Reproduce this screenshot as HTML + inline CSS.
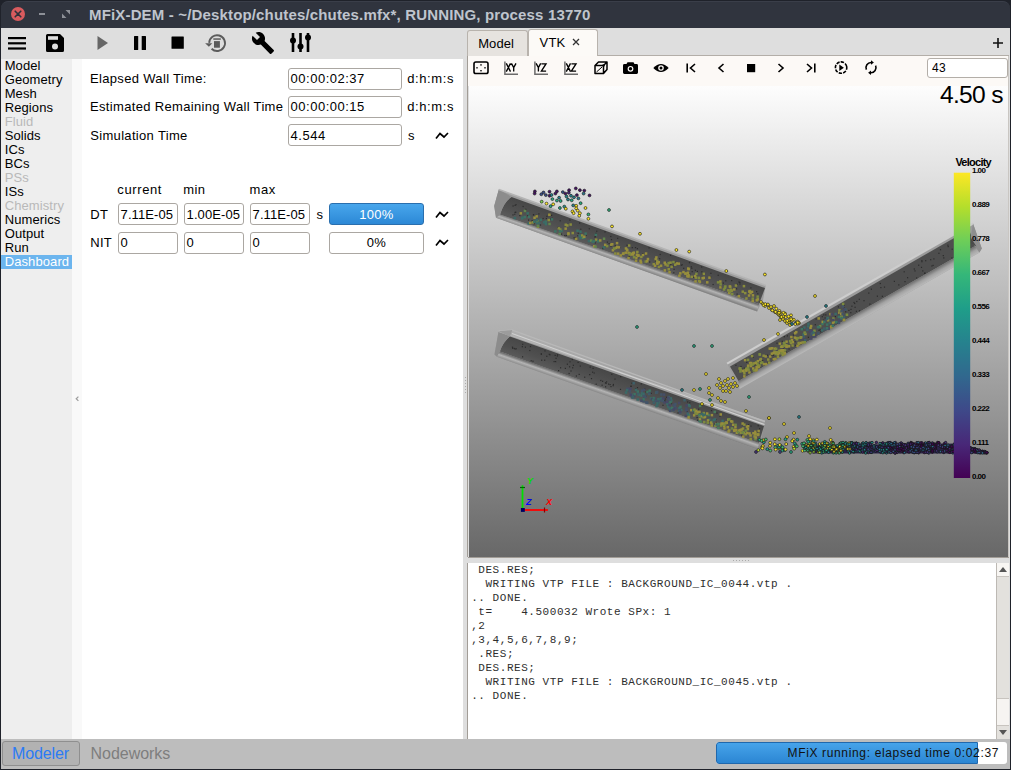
<!DOCTYPE html>
<html><head><meta charset="utf-8"><title>MFiX</title><style>
*{margin:0;padding:0;box-sizing:border-box}
html,body{width:1011px;height:770px;overflow:hidden}
body{background:#1f222a;position:relative;font-family:'Liberation Sans', sans-serif}
.a{position:absolute}
.t{white-space:pre}
</style></head><body>
<div class="a" style="left:1px;top:1px;width:1009px;height:27px;background:#30343e;border-radius:7px 7px 0 0;border-top:1px solid #3a3e49"></div>
<svg class="a" style="left:10px;top:6px;" width="16" height="16" viewBox="0 0 16 16"><circle cx="8" cy="8" r="7" fill="#d95b5e"/><path d="M5.2 5.2L10.8 10.8M10.8 5.2L5.2 10.8" stroke="#2e323b" stroke-width="1.6" stroke-linecap="round"/></svg>
<div class="a" style="left:39px;top:13px;width:6px;height:2px;background:#8d9097"></div>
<svg class="a" style="left:62px;top:10px;" width="8" height="8" viewBox="0 0 8 8"><path d="M3.5 0H8V4.5Z M0 3.5V8H4.5Z" fill="#8d9097"/></svg>
<div class="a t" style="left:89px;top:7.30px;font-size:15px;line-height:15px;color:#bfc4cd;font-weight:bold;font-family:'Liberation Sans', sans-serif;letter-spacing:0.16px">MFiX-DEM - ~/Desktop/chutes/chutes.mfx*, RUNNING, process 13770</div>
<div class="a" style="left:1px;top:28px;width:1009px;height:711px;background:#dedede"></div>
<svg class="a" style="left:8px;top:37px;" width="18" height="13" viewBox="0 0 18 13"><rect x="0" y="0" width="18" height="2.2" fill="#000"/><rect x="0" y="5.2" width="18" height="2.2" fill="#000"/><rect x="0" y="10.4" width="18" height="2.2" fill="#000"/></svg>
<svg class="a" style="left:46px;top:34px;" width="18" height="18" viewBox="0 0 18 18"><path d="M1.5 0H14L18 4V16.5A1.5 1.5 0 0 1 16.5 18H1.5A1.5 1.5 0 0 1 0 16.5V1.5A1.5 1.5 0 0 1 1.5 0Z" fill="#000"/><rect x="2" y="2.2" width="10" height="3.6" fill="#dedede"/><circle cx="9" cy="12.5" r="3" fill="#dedede"/></svg>
<svg class="a" style="left:97px;top:36px;" width="12" height="14" viewBox="0 0 12 14"><path d="M0.5 0L11 7L0.5 14Z" fill="#666"/></svg>
<svg class="a" style="left:134px;top:36px;" width="12" height="14" viewBox="0 0 12 14"><rect x="0" y="0" width="4.2" height="14" rx="0.5" fill="#000"/><rect x="7.7" y="0" width="4.3" height="14" rx="0.5" fill="#000"/></svg>
<svg class="a" style="left:171px;top:36px;" width="13" height="13" viewBox="0 0 13 13"><rect x="0.5" y="0.5" width="12.3" height="12.3" rx="0.5" fill="#000"/></svg>
<svg class="a" style="left:200px;top:30px;" width="32" height="26" viewBox="0 0 32 26"><path d="M9.2 12.9A7.9 7.9 0 1 1 11.6 18.8" fill="none" stroke="#5c5c5c" stroke-width="1.9"/><path d="M5.1 13.2L12.3 13.2 8.9 16.8Z" fill="#5c5c5c"/><rect x="13.3" y="8.3" width="7.5" height="1.5" fill="#5c5c5c"/><rect x="14" y="11.1" width="5.9" height="6.6" fill="#5c5c5c"/></svg>
<svg class="a" style="left:251px;top:31px;" width="24" height="24" viewBox="0 0 24 24"><path d="M22.7 19l-9.1-9.1c.9-2.3.4-5-1.5-6.9-2-2-5-2.4-7.4-1.3L9 6 6 9 1.6 4.7C.4 7.1.9 10.1 2.9 12.1c1.9 1.9 4.6 2.4 6.9 1.5l9.1 9.1c.4.4 1 .4 1.4 0l2.3-2.3c.5-.4.5-1.1.1-1.4z" fill="#000"/></svg>
<svg class="a" style="left:290px;top:33px;" width="22" height="20" viewBox="0 0 22 20"><rect x="1.7" y="0" width="2.6" height="19" fill="#000"/><rect x="9.2" y="0" width="2.6" height="19" fill="#000"/><rect x="16.7" y="0" width="2.6" height="19" fill="#000"/><circle cx="3" cy="7.6" r="3" fill="#000"/><circle cx="10.5" cy="13.4" r="3" fill="#000"/><circle cx="18" cy="4.6" r="3" fill="#000"/></svg>
<div class="a" style="left:1px;top:59px;width:71px;height:680px;background:#eeeeee"></div>
<div class="a" style="left:72px;top:59px;width:10px;height:680px;background:#f9f9f9"></div>
<div class="a" style="left:82px;top:59px;width:381px;height:680px;background:#ffffff"></div>
<svg class="a" style="left:75px;top:396px;" width="5" height="6" viewBox="0 0 5 6"><path d="M3.4 0.6L1.2 2.7 3.4 4.9" fill="none" stroke="#9c9c9c" stroke-width="1.2"/></svg>
<div class="a" style="left:1px;top:255px;width:71px;height:14px;background:#6cb5ee"></div>
<div class="a t" style="left:4.7px;top:58.90px;font-size:13px;line-height:13px;color:#000;font-weight:normal;font-family:'Liberation Sans', sans-serif;letter-spacing:0.1px">Model</div>
<div class="a t" style="left:4.7px;top:72.90px;font-size:13px;line-height:13px;color:#000;font-weight:normal;font-family:'Liberation Sans', sans-serif;letter-spacing:0.1px">Geometry</div>
<div class="a t" style="left:4.7px;top:86.90px;font-size:13px;line-height:13px;color:#000;font-weight:normal;font-family:'Liberation Sans', sans-serif;letter-spacing:0.1px">Mesh</div>
<div class="a t" style="left:4.7px;top:100.90px;font-size:13px;line-height:13px;color:#000;font-weight:normal;font-family:'Liberation Sans', sans-serif;letter-spacing:0.1px">Regions</div>
<div class="a t" style="left:4.7px;top:114.90px;font-size:13px;line-height:13px;color:#b9b9b9;font-weight:normal;font-family:'Liberation Sans', sans-serif;letter-spacing:0.1px">Fluid</div>
<div class="a t" style="left:4.7px;top:128.90px;font-size:13px;line-height:13px;color:#000;font-weight:normal;font-family:'Liberation Sans', sans-serif;letter-spacing:0.1px">Solids</div>
<div class="a t" style="left:4.7px;top:142.90px;font-size:13px;line-height:13px;color:#000;font-weight:normal;font-family:'Liberation Sans', sans-serif;letter-spacing:0.1px">ICs</div>
<div class="a t" style="left:4.7px;top:156.90px;font-size:13px;line-height:13px;color:#000;font-weight:normal;font-family:'Liberation Sans', sans-serif;letter-spacing:0.1px">BCs</div>
<div class="a t" style="left:4.7px;top:170.90px;font-size:13px;line-height:13px;color:#b9b9b9;font-weight:normal;font-family:'Liberation Sans', sans-serif;letter-spacing:0.1px">PSs</div>
<div class="a t" style="left:4.7px;top:184.90px;font-size:13px;line-height:13px;color:#000;font-weight:normal;font-family:'Liberation Sans', sans-serif;letter-spacing:0.1px">ISs</div>
<div class="a t" style="left:4.7px;top:198.90px;font-size:13px;line-height:13px;color:#b9b9b9;font-weight:normal;font-family:'Liberation Sans', sans-serif;letter-spacing:0.1px">Chemistry</div>
<div class="a t" style="left:4.7px;top:212.90px;font-size:13px;line-height:13px;color:#000;font-weight:normal;font-family:'Liberation Sans', sans-serif;letter-spacing:0.1px">Numerics</div>
<div class="a t" style="left:4.7px;top:226.90px;font-size:13px;line-height:13px;color:#000;font-weight:normal;font-family:'Liberation Sans', sans-serif;letter-spacing:0.1px">Output</div>
<div class="a t" style="left:4.7px;top:240.90px;font-size:13px;line-height:13px;color:#000;font-weight:normal;font-family:'Liberation Sans', sans-serif;letter-spacing:0.1px">Run</div>
<div class="a t" style="left:4.7px;top:254.90px;font-size:13px;line-height:13px;color:#ffffff;font-weight:normal;font-family:'Liberation Sans', sans-serif;letter-spacing:0.1px">Dashboard</div>
<div class="a t" style="left:90.0px;top:71.90px;font-size:13px;line-height:13px;color:#000;font-weight:normal;font-family:'Liberation Sans', sans-serif;letter-spacing:0.33px">Elapsed Wall Time:</div>
<div class="a t" style="left:90.0px;top:100.00px;font-size:13px;line-height:13px;color:#000;font-weight:normal;font-family:'Liberation Sans', sans-serif;letter-spacing:0.33px">Estimated Remaining Wall Time</div>
<div class="a t" style="left:90.2px;top:128.90px;font-size:13px;line-height:13px;color:#000;font-weight:normal;font-family:'Liberation Sans', sans-serif;letter-spacing:0.33px">Simulation Time</div>
<div class="a" style="left:288px;top:68px;width:114px;height:22px;background:#fff;border:1px solid #aba7a2;border-radius:3px"></div>
<div class="a t" style="left:290.6px;top:71.90px;font-size:13px;line-height:13px;color:#000;font-weight:normal;font-family:'Liberation Sans', sans-serif;letter-spacing:0.5px">00:00:02:37</div>
<div class="a" style="left:288px;top:96px;width:114px;height:22px;background:#fff;border:1px solid #aba7a2;border-radius:3px"></div>
<div class="a t" style="left:290.6px;top:100.00px;font-size:13px;line-height:13px;color:#000;font-weight:normal;font-family:'Liberation Sans', sans-serif;letter-spacing:0.5px">00:00:00:15</div>
<div class="a" style="left:288px;top:124px;width:114px;height:22px;background:#fff;border:1px solid #aba7a2;border-radius:3px"></div>
<div class="a t" style="left:290.6px;top:128.90px;font-size:13px;line-height:13px;color:#000;font-weight:normal;font-family:'Liberation Sans', sans-serif;letter-spacing:0.5px">4.544</div>
<div class="a t" style="left:407.2px;top:71.90px;font-size:13px;line-height:13px;color:#000;font-weight:normal;font-family:'Liberation Sans', sans-serif;letter-spacing:0.62px">d:h:m:s</div>
<div class="a t" style="left:407.2px;top:100.00px;font-size:13px;line-height:13px;color:#000;font-weight:normal;font-family:'Liberation Sans', sans-serif;letter-spacing:0.62px">d:h:m:s</div>
<div class="a t" style="left:408px;top:128.90px;font-size:13px;line-height:13px;color:#000;font-weight:normal;font-family:'Liberation Sans', sans-serif;">s</div>
<svg class="a" style="left:435px;top:130.5px;" width="14" height="9" viewBox="0 0 14 9"><path d="M1 7.5L5 2.5 9 6 13 2" fill="none" stroke="#000" stroke-width="1.7" stroke-linejoin="miter"/></svg>
<div class="a t" style="left:117.3px;top:183.00px;font-size:13px;line-height:13px;color:#000;font-weight:normal;font-family:'Liberation Sans', sans-serif;letter-spacing:0.62px">current</div>
<div class="a t" style="left:183.3px;top:183.00px;font-size:13px;line-height:13px;color:#000;font-weight:normal;font-family:'Liberation Sans', sans-serif;letter-spacing:0.33px">min</div>
<div class="a t" style="left:249.6px;top:183.00px;font-size:13px;line-height:13px;color:#000;font-weight:normal;font-family:'Liberation Sans', sans-serif;letter-spacing:0.5px">max</div>
<div class="a t" style="left:90.2px;top:208.00px;font-size:13px;line-height:13px;color:#000;font-weight:normal;font-family:'Liberation Sans', sans-serif;letter-spacing:0.33px">DT</div>
<div class="a t" style="left:90.2px;top:236.40px;font-size:13px;line-height:13px;color:#000;font-weight:normal;font-family:'Liberation Sans', sans-serif;letter-spacing:0.33px">NIT</div>
<div class="a" style="left:118px;top:203px;width:60px;height:22px;background:#fff;border:1px solid #aba7a2;border-radius:3px"></div>
<div class="a t" style="left:120.6px;top:208.00px;font-size:13px;line-height:13px;color:#000;font-weight:normal;font-family:'Liberation Sans', sans-serif;letter-spacing:0.08px">7.11E-05</div>
<div class="a" style="left:184px;top:203px;width:60px;height:22px;background:#fff;border:1px solid #aba7a2;border-radius:3px"></div>
<div class="a t" style="left:186.6px;top:208.00px;font-size:13px;line-height:13px;color:#000;font-weight:normal;font-family:'Liberation Sans', sans-serif;letter-spacing:0.08px">1.00E-05</div>
<div class="a" style="left:250px;top:203px;width:60px;height:22px;background:#fff;border:1px solid #aba7a2;border-radius:3px"></div>
<div class="a t" style="left:252.6px;top:208.00px;font-size:13px;line-height:13px;color:#000;font-weight:normal;font-family:'Liberation Sans', sans-serif;letter-spacing:0.08px">7.11E-05</div>
<div class="a" style="left:118px;top:232px;width:60px;height:22px;background:#fff;border:1px solid #aba7a2;border-radius:3px"></div>
<div class="a t" style="left:120.6px;top:236.40px;font-size:13px;line-height:13px;color:#000;font-weight:normal;font-family:'Liberation Sans', sans-serif;letter-spacing:0.5px">0</div>
<div class="a" style="left:184px;top:232px;width:60px;height:22px;background:#fff;border:1px solid #aba7a2;border-radius:3px"></div>
<div class="a t" style="left:186.6px;top:236.40px;font-size:13px;line-height:13px;color:#000;font-weight:normal;font-family:'Liberation Sans', sans-serif;letter-spacing:0.5px">0</div>
<div class="a" style="left:250px;top:232px;width:60px;height:22px;background:#fff;border:1px solid #aba7a2;border-radius:3px"></div>
<div class="a t" style="left:252.6px;top:236.40px;font-size:13px;line-height:13px;color:#000;font-weight:normal;font-family:'Liberation Sans', sans-serif;letter-spacing:0.5px">0</div>
<div class="a t" style="left:316.5px;top:208.00px;font-size:13px;line-height:13px;color:#000;font-weight:normal;font-family:'Liberation Sans', sans-serif;">s</div>
<div class="a" style="left:329px;top:203px;width:95px;height:22px;background:linear-gradient(#48a6ec,#2c88d6);border:1px solid #2a6fae;border-radius:3px"></div>
<div class="a t" style="left:329px;top:208px;width:95px;text-align:center;font-size:13px;line-height:13px;color:#fff;letter-spacing:0.3px">100%</div>
<div class="a" style="left:329px;top:232px;width:95px;height:22px;background:#fff;border:1px solid #aba7a2;border-radius:3px"></div>
<div class="a t" style="left:329px;top:236.4px;width:95px;text-align:center;font-size:13px;line-height:13px;color:#000;letter-spacing:0.3px">0%</div>
<svg class="a" style="left:435px;top:209.5px;" width="14" height="9" viewBox="0 0 14 9"><path d="M1 7.5L5 2.5 9 6 13 2" fill="none" stroke="#000" stroke-width="1.7" stroke-linejoin="miter"/></svg>
<svg class="a" style="left:435px;top:238px;" width="14" height="9" viewBox="0 0 14 9"><path d="M1 7.5L5 2.5 9 6 13 2" fill="none" stroke="#000" stroke-width="1.7" stroke-linejoin="miter"/></svg>
<div class="a" style="left:464.5px;top:377px;width:1.3px;height:1.3px;background:#9a9a9a;border-radius:1px"></div>
<div class="a" style="left:464.5px;top:380px;width:1.3px;height:1.3px;background:#9a9a9a;border-radius:1px"></div>
<div class="a" style="left:464.5px;top:383px;width:1.3px;height:1.3px;background:#9a9a9a;border-radius:1px"></div>
<div class="a" style="left:464.5px;top:386px;width:1.3px;height:1.3px;background:#9a9a9a;border-radius:1px"></div>
<div class="a" style="left:464.5px;top:389px;width:1.3px;height:1.3px;background:#9a9a9a;border-radius:1px"></div>
<div class="a" style="left:464.5px;top:392px;width:1.3px;height:1.3px;background:#9a9a9a;border-radius:1px"></div>
<div class="a" style="left:467px;top:30px;width:61px;height:26px;background:#e6e3df;border:1px solid #b8b3ad;border-bottom:none;border-radius:3px 3px 0 0"></div>
<div class="a t" style="left:478.2px;top:36.70px;font-size:13px;line-height:13px;color:#000;font-weight:normal;font-family:'Liberation Sans', sans-serif;letter-spacing:0.1px">Model</div>
<div class="a" style="left:597px;top:55px;width:412px;height:1px;background:#b3aea8"></div>
<div class="a" style="left:528px;top:29px;width:70px;height:27px;background:#fcfaf7;border:1px solid #b8b3ad;border-bottom:none;border-radius:3px 3px 0 0"></div>
<div class="a t" style="left:539.6px;top:35.80px;font-size:13px;line-height:13px;color:#000;font-weight:normal;font-family:'Liberation Sans', sans-serif;letter-spacing:0.15px">VTK</div>
<svg class="a" style="left:572px;top:38px;" width="8" height="8" viewBox="0 0 8 8"><path d="M1 1L7 7M7 1L1 7" stroke="#333" stroke-width="1.3"/></svg>
<svg class="a" style="left:992px;top:37px;" width="12" height="12" viewBox="0 0 12 12"><path d="M6 1V11M1 6H11" stroke="#111" stroke-width="1.6"/></svg>
<div class="a" style="left:467px;top:56px;width:1px;height:501px;background:#a29d97"></div>
<div class="a" style="left:468px;top:56px;width:541px;height:30px;background:#fcf9f6"></div>
<div class="a" style="left:1008px;top:56px;width:1px;height:501px;background:#c9c6c2"></div>
<svg class="a" style="left:473px;top:61px;" width="16" height="14" viewBox="0 0 16 14"><rect x="1" y="1" width="14" height="11.5" rx="1.8" fill="none" stroke="#000" stroke-width="1.6"/><rect x="7.3" y="3.2" width="1.4" height="1.4" fill="#000"/><rect x="7.3" y="9" width="1.4" height="1.4" fill="#000"/><rect x="3.3" y="6.1" width="1.4" height="1.4" fill="#000"/><rect x="11.3" y="6.1" width="1.4" height="1.4" fill="#000"/></svg>
<svg class="a" style="left:504px;top:61px;" width="15" height="15" viewBox="0 0 15 15"><path d="M0.9 0.5V13.3H14" fill="none" stroke="#6b6b6b" stroke-width="1.5"/><path d="M2.3 2.4L6.5 10.6M6.5 2.4L2.3 10.6M7.4 2.4L9.7 6.6L12 2.4M9.7 6.6V10.6" fill="none" stroke="#000" stroke-width="1.35"/></svg>
<svg class="a" style="left:534px;top:61px;" width="15" height="15" viewBox="0 0 15 15"><path d="M0.9 0.5V13.3H14" fill="none" stroke="#6b6b6b" stroke-width="1.5"/><path d="M2.1 2.4L4.4 6.6L6.7 2.4M4.4 6.6V10.6M7.4 2.9H12L7.4 10.1H12.1" fill="none" stroke="#000" stroke-width="1.35"/></svg>
<svg class="a" style="left:564px;top:61px;" width="15" height="15" viewBox="0 0 15 15"><path d="M0.9 0.5V13.3H14" fill="none" stroke="#6b6b6b" stroke-width="1.5"/><path d="M2.3 2.4L6.5 10.6M6.5 2.4L2.3 10.6M7.4 2.9H12L7.4 10.1H12.1" fill="none" stroke="#000" stroke-width="1.35"/></svg>
<svg class="a" style="left:594px;top:61px;" width="14" height="14" viewBox="0 0 14 14"><path d="M1 4.5L4.5 1H13V8.5L9.5 12.5H1Z M1 4.5H9.5V12.5 M9.5 4.5L13 1" fill="none" stroke="#000" stroke-width="1.5" stroke-linejoin="round"/><path d="M2.5 11L8 6" stroke="#000" stroke-width="1"/><circle cx="9.5" cy="4.5" r="1.2" fill="#000"/></svg>
<svg class="a" style="left:623px;top:61px;" width="15" height="13" viewBox="0 0 15 13"><path d="M4.5 1.2H10.5L11.5 3H13.6A1.4 1.4 0 0 1 15 4.4V11.6A1.4 1.4 0 0 1 13.6 13H1.4A1.4 1.4 0 0 1 0 11.6V4.4A1.4 1.4 0 0 1 1.4 3H3.5Z" fill="#000"/><circle cx="7.5" cy="7.8" r="2.9" fill="#fcf9f6"/><circle cx="7.5" cy="7.8" r="1.7" fill="#000"/></svg>
<svg class="a" style="left:653px;top:63px;" width="16" height="10" viewBox="0 0 16 10"><path d="M0.3 5Q8 -3.2 15.7 5Q8 13.2 0.3 5Z" fill="#000"/><circle cx="8" cy="5" r="2.8" fill="#fcf9f6"/><circle cx="8" cy="5" r="1.5" fill="#000"/></svg>
<svg class="a" style="left:686px;top:63px;" width="10" height="10" viewBox="0 0 10 10"><path d="M1.2 0.5V9.5" stroke="#000" stroke-width="1.6"/><path d="M9 1L4.5 5 9 9" fill="none" stroke="#000" stroke-width="1.6"/></svg>
<svg class="a" style="left:717px;top:63px;" width="8" height="10" viewBox="0 0 8 10"><path d="M6.5 1L2 5 6.5 9" fill="none" stroke="#000" stroke-width="1.6"/></svg>
<svg class="a" style="left:746px;top:63px;" width="10" height="10" viewBox="0 0 10 10"><rect x="1" y="1" width="8.2" height="8.2" fill="#000"/></svg>
<svg class="a" style="left:777px;top:63px;" width="8" height="10" viewBox="0 0 8 10"><path d="M1.5 1L6 5 1.5 9" fill="none" stroke="#000" stroke-width="1.6"/></svg>
<svg class="a" style="left:806px;top:63px;" width="10" height="10" viewBox="0 0 10 10"><path d="M1 1L5.5 5 1 9" fill="none" stroke="#000" stroke-width="1.6"/><path d="M8.8 0.5V9.5" stroke="#000" stroke-width="1.6"/></svg>
<svg class="a" style="left:833px;top:60px;" width="16" height="16" viewBox="0 0 16 16"><circle cx="8.1" cy="7.6" r="5.7" fill="none" stroke="#000" stroke-width="1.6" stroke-dasharray="3.3 1.2" transform="rotate(-12 8.1 7.6)"/><path d="M6.3 4.5L10.9 7.7 6.3 10.9Z" fill="#000"/></svg>
<svg class="a" style="left:864px;top:60px;" width="14" height="16" viewBox="0 0 14 16"><path d="M7.2 2.5A5.1 5.1 0 0 0 2.4 9.6" fill="none" stroke="#000" stroke-width="1.6"/><path d="M6.8 12.7A5.1 5.1 0 0 0 11.6 5.6" fill="none" stroke="#000" stroke-width="1.6"/><path d="M9.9 2.5L7 0.2V4.8Z" fill="#000"/><path d="M4.1 12.7L7 10.4V15Z" fill="#000"/></svg>
<div class="a" style="left:927px;top:58px;width:81px;height:20px;background:#fff;border:1px solid #b3aea8;border-radius:3px"></div>
<div class="a t" style="left:932px;top:61.64px;font-size:12px;line-height:12px;color:#000;font-weight:normal;font-family:'Liberation Sans', sans-serif;letter-spacing:0.4px">43</div>
<svg class="a" style="left:469px;top:86px;" width="539" height="471" viewBox="0 0 539 471"><defs><linearGradient id="bg" x1="0" y1="0" x2="0" y2="1"><stop offset="0" stop-color="#fdfdfd"/><stop offset="1" stop-color="#686868"/></linearGradient><linearGradient id="vir" x1="0" y1="1" x2="0" y2="0"><stop offset="0.0" stop-color="#440154"/><stop offset="0.111" stop-color="#482878"/><stop offset="0.222" stop-color="#3e4989"/><stop offset="0.333" stop-color="#31688e"/><stop offset="0.444" stop-color="#26828e"/><stop offset="0.556" stop-color="#1f9e89"/><stop offset="0.667" stop-color="#35b779"/><stop offset="0.778" stop-color="#6ece58"/><stop offset="0.889" stop-color="#b5de2b"/><stop offset="1.0" stop-color="#fde725"/></linearGradient><linearGradient id="lip1" gradientUnits="userSpaceOnUse" x1="0" y1="0" x2="-3" y2="8"><stop offset="0" stop-color="#6e6e6e"/><stop offset="0.45" stop-color="#b8b8b8"/><stop offset="1" stop-color="#8a8a8a"/></linearGradient></defs><rect x="0" y="0" width="539" height="471" fill="url(#bg)"/><defs><linearGradient id="d1" gradientUnits="userSpaceOnUse" x1="169.2" y1="156.5" x2="163.0" y2="174.0"><stop offset="0" stop-color="#474747"/><stop offset="0.6" stop-color="#505050"/><stop offset="1" stop-color="#5a5a5a"/></linearGradient><linearGradient id="l1" gradientUnits="userSpaceOnUse" x1="169.2" y1="176.3" x2="167.2" y2="182.0"><stop offset="0" stop-color="#6a6a6a"/><stop offset="0.45" stop-color="#b4b4b4"/><stop offset="1" stop-color="#858585"/></linearGradient><linearGradient id="d2" gradientUnits="userSpaceOnUse" x1="168.0" y1="295.3" x2="162.1" y2="311.9"><stop offset="0" stop-color="#474747"/><stop offset="0.6" stop-color="#505050"/><stop offset="1" stop-color="#5a5a5a"/></linearGradient><linearGradient id="l2" gradientUnits="userSpaceOnUse" x1="168.0" y1="313.9" x2="165.9" y2="319.9"><stop offset="0" stop-color="#6a6a6a"/><stop offset="0.45" stop-color="#b4b4b4"/><stop offset="1" stop-color="#858585"/></linearGradient><linearGradient id="d3" gradientUnits="userSpaceOnUse" x1="0" y1="215" x2="11" y2="236"><stop offset="0" stop-color="#474747"/><stop offset="0.6" stop-color="#505050"/><stop offset="1" stop-color="#5a5a5a"/></linearGradient><linearGradient id="l3" gradientUnits="userSpaceOnUse" x1="0" y1="236" x2="2" y2="241"><stop offset="0" stop-color="#6a6a6a"/><stop offset="0.45" stop-color="#b4b4b4"/><stop offset="1" stop-color="#858585"/></linearGradient><linearGradient id="l3b" gradientUnits="userSpaceOnUse" x1="381" y1="231.39999999999998" x2="384.7" y2="237.9"><stop offset="0" stop-color="#707070"/><stop offset="0.5" stop-color="#a3a3a3"/><stop offset="1" stop-color="#b9b9b9"/></linearGradient></defs><path d="M29.8,103.5 L296.7,199.4 L294.0,214.0 L288.1,225.4 L27.0,131.8 L25.2,120.0Z" fill="#9c9c9c"/><path d="M42.5,111.0 L296.0,202.0 L290.0,218.0 L31.0,128.5 Q35.0,116.0 42.5,111.0Z" fill="url(#d1)"/><path d="M31.0,128.5 L290.0,218.0 L288.1,225.4 L27.0,131.8Z" fill="url(#l1)"/><path d="M29.8,103.5 L42.5,111.0 Q35.0,116.0 31.0,128.5 L27.0,131.8 L25.2,120.0Z" fill="#8c8c8c"/><path d="M29.8,103.5 L296.7,199.4" stroke="#b4b4b4" stroke-width="1.6"/><path d="M29.6,245.3 L295.9,335.5 L293.0,350.0 L288.2,363.4 L27.9,270.8 L25.5,268.4Z" fill="#9c9c9c"/><path d="M40.9,250.6 L295.0,340.0 L290.0,357.0 L30.8,265.5 Q34.0,256.0 40.9,250.6Z" fill="url(#d2)"/><path d="M30.8,265.5 L290.0,357.0 L288.2,363.4 L27.9,270.8Z" fill="url(#l2)"/><path d="M29.6,245.3 L40.9,250.6 Q34.0,256.0 30.8,265.5 L27.9,270.8 L25.5,268.4Z" fill="#8c8c8c"/><path d="M29.6,245.3 L295.9,335.5" stroke="#b4b4b4" stroke-width="1.6"/><path d="M29.6,245.3 L43.3,244.1 L295.9,335.5" fill="none" stroke="#b8b8b8" stroke-width="1.4"/><path d="M43.0,247.5 L295.5,338.5" stroke="#d0d0d0" stroke-width="1.2"/><path d="M29.6,245.3 L43.3,244.1 L40.9,250.6Z" fill="#9c9c9c"/><path d="M258.1,277.6 L504.0,137.5 L512.8,162.5 L510.4,166.5 L270.5,303.0Z" fill="#9c9c9c"/><path d="M261.0,280.5 L500.0,143.5 L506.0,160.0 L269.5,295.0Z" fill="#4e4e4e"/><path d="M269.5,295.0 L506.0,160.0 L510.4,166.5 L270.5,303.0Z" fill="url(#l3b)"/><path d="M258.1,277.6 L504.0,137.5" stroke="#cdcdcd" stroke-width="2.2"/><polygon points="504.0,137.5 512.8,162.5 510.4,166.5 506.0,160.0 501.0,156.0" fill="#8e8e8e"/><polygon points="500.0,149.0 507.5,160.5 501.0,157.0" fill="#4a4a4a"/><rect x="46.4" y="118.1" width="1.2" height="1.2" fill="#2c2c2c"/><rect x="111.2" y="142.6" width="1.2" height="1.2" fill="#2c2c2c"/><rect x="176.3" y="167.0" width="1.2" height="1.2" fill="#2c2c2c"/><rect x="168.0" y="171.7" width="1.2" height="1.2" fill="#2c2c2c"/><rect x="66.6" y="128.8" width="1.2" height="1.2" fill="#2c2c2c"/><rect x="201.2" y="178.1" width="1.2" height="1.2" fill="#2c2c2c"/><rect x="204.2" y="186.2" width="1.2" height="1.2" fill="#2c2c2c"/><rect x="133.6" y="161.5" width="1.2" height="1.2" fill="#2c2c2c"/><rect x="133.2" y="161.9" width="1.2" height="1.2" fill="#2c2c2c"/><rect x="253.7" y="196.5" width="1.2" height="1.2" fill="#2c2c2c"/><rect x="190.1" y="172.1" width="1.2" height="1.2" fill="#2c2c2c"/><rect x="165.9" y="161.0" width="1.2" height="1.2" fill="#2c2c2c"/><rect x="141.9" y="153.0" width="1.2" height="1.2" fill="#2c2c2c"/><rect x="173.2" y="167.1" width="1.2" height="1.2" fill="#2c2c2c"/><rect x="104.5" y="151.2" width="1.2" height="1.2" fill="#2c2c2c"/><rect x="204.5" y="182.7" width="1.2" height="1.2" fill="#2c2c2c"/><rect x="45.2" y="127.6" width="1.2" height="1.2" fill="#2c2c2c"/><rect x="185.9" y="174.2" width="1.2" height="1.2" fill="#2c2c2c"/><rect x="141.4" y="159.5" width="1.2" height="1.2" fill="#2c2c2c"/><rect x="56.2" y="122.7" width="1.2" height="1.2" fill="#2c2c2c"/><rect x="139.5" y="157.0" width="1.2" height="1.2" fill="#2c2c2c"/><rect x="222.2" y="181.6" width="1.2" height="1.2" fill="#2c2c2c"/><rect x="241.3" y="186.7" width="1.2" height="1.2" fill="#2c2c2c"/><rect x="221.7" y="180.2" width="1.2" height="1.2" fill="#2c2c2c"/><rect x="232.1" y="180.4" width="1.2" height="1.2" fill="#2c2c2c"/><rect x="62.7" y="134.4" width="1.2" height="1.2" fill="#2c2c2c"/><rect x="269.4" y="195.4" width="1.2" height="1.2" fill="#2c2c2c"/><rect x="281.3" y="201.3" width="1.2" height="1.2" fill="#2c2c2c"/><rect x="219.9" y="176.1" width="1.2" height="1.2" fill="#2c2c2c"/><rect x="148.1" y="151.7" width="1.2" height="1.2" fill="#2c2c2c"/><rect x="256.2" y="194.2" width="1.2" height="1.2" fill="#2c2c2c"/><rect x="81.0" y="132.4" width="1.2" height="1.2" fill="#2c2c2c"/><rect x="76.8" y="131.9" width="1.2" height="1.2" fill="#2c2c2c"/><rect x="189.6" y="175.7" width="1.2" height="1.2" fill="#2c2c2c"/><rect x="211.7" y="178.6" width="1.2" height="1.2" fill="#2c2c2c"/><rect x="224.1" y="190.7" width="1.2" height="1.2" fill="#2c2c2c"/><rect x="77.3" y="129.7" width="1.2" height="1.2" fill="#2c2c2c"/><rect x="73.5" y="131.9" width="1.2" height="1.2" fill="#2c2c2c"/><rect x="167.8" y="162.1" width="1.2" height="1.2" fill="#2c2c2c"/><rect x="164.7" y="170.6" width="1.2" height="1.2" fill="#2c2c2c"/><rect x="108.6" y="146.7" width="1.2" height="1.2" fill="#2c2c2c"/><rect x="220.2" y="187.4" width="1.2" height="1.2" fill="#2c2c2c"/><rect x="90.6" y="134.2" width="1.2" height="1.2" fill="#2c2c2c"/><rect x="96.7" y="148.9" width="1.2" height="1.2" fill="#2c2c2c"/><rect x="164.9" y="167.2" width="1.2" height="1.2" fill="#2c2c2c"/><rect x="88.3" y="140.9" width="1.2" height="1.2" fill="#2c2c2c"/><rect x="201.0" y="168.7" width="1.2" height="1.2" fill="#2c2c2c"/><rect x="110.0" y="136.4" width="1.2" height="1.2" fill="#2c2c2c"/><rect x="53.5" y="119.9" width="1.2" height="1.2" fill="#2c2c2c"/><rect x="108.2" y="149.2" width="1.2" height="1.2" fill="#2c2c2c"/><rect x="270.2" y="195.9" width="1.2" height="1.2" fill="#2c2c2c"/><rect x="95.2" y="148.9" width="1.2" height="1.2" fill="#2c2c2c"/><rect x="162.7" y="161.1" width="1.2" height="1.2" fill="#2c2c2c"/><rect x="125.4" y="150.5" width="1.2" height="1.2" fill="#2c2c2c"/><rect x="70.9" y="138.4" width="1.2" height="1.2" fill="#2c2c2c"/><rect x="241.0" y="190.4" width="1.2" height="1.2" fill="#2c2c2c"/><rect x="243.5" y="197.9" width="1.2" height="1.2" fill="#2c2c2c"/><rect x="232.8" y="187.5" width="1.2" height="1.2" fill="#2c2c2c"/><rect x="227.8" y="184.8" width="1.2" height="1.2" fill="#2c2c2c"/><rect x="82.0" y="128.8" width="1.2" height="1.2" fill="#2c2c2c"/><rect x="248.6" y="195.6" width="1.2" height="1.2" fill="#2c2c2c"/><rect x="111.3" y="150.4" width="1.2" height="1.2" fill="#2c2c2c"/><rect x="248.6" y="188.7" width="1.2" height="1.2" fill="#2c2c2c"/><rect x="203.2" y="179.4" width="1.2" height="1.2" fill="#2c2c2c"/><rect x="157.5" y="158.7" width="1.2" height="1.2" fill="#2c2c2c"/><rect x="176.9" y="167.5" width="1.2" height="1.2" fill="#2c2c2c"/><rect x="180.1" y="175.4" width="1.2" height="1.2" fill="#2c2c2c"/><rect x="153.9" y="166.4" width="1.2" height="1.2" fill="#2c2c2c"/><rect x="45.5" y="118.8" width="1.2" height="1.2" fill="#2c2c2c"/><rect x="267.0" y="202.2" width="1.2" height="1.2" fill="#2c2c2c"/><rect x="214.1" y="181.7" width="1.2" height="1.2" fill="#2c2c2c"/><rect x="232.3" y="185.3" width="1.2" height="1.2" fill="#2c2c2c"/><rect x="262.1" y="194.0" width="1.2" height="1.2" fill="#2c2c2c"/><rect x="205.9" y="175.9" width="1.2" height="1.2" fill="#2c2c2c"/><rect x="267.6" y="197.7" width="1.2" height="1.2" fill="#2c2c2c"/><rect x="150.1" y="161.0" width="1.2" height="1.2" fill="#2c2c2c"/><rect x="264.5" y="202.7" width="1.2" height="1.2" fill="#2c2c2c"/><rect x="110.4" y="145.9" width="1.2" height="1.2" fill="#2c2c2c"/><rect x="288.2" y="207.2" width="1.2" height="1.2" fill="#2c2c2c"/><rect x="92.0" y="147.5" width="1.2" height="1.2" fill="#2c2c2c"/><rect x="222.6" y="185.1" width="1.2" height="1.2" fill="#2c2c2c"/><rect x="59.0" y="133.5" width="1.2" height="1.2" fill="#2c2c2c"/><rect x="45.5" y="125.8" width="1.2" height="1.2" fill="#2c2c2c"/><rect x="184.4" y="176.6" width="1.2" height="1.2" fill="#2c2c2c"/><rect x="225.8" y="183.7" width="1.2" height="1.2" fill="#2c2c2c"/><rect x="141.2" y="149.9" width="1.2" height="1.2" fill="#2c2c2c"/><rect x="190.6" y="167.9" width="1.2" height="1.2" fill="#2c2c2c"/><rect x="64.0" y="128.1" width="1.2" height="1.2" fill="#2c2c2c"/><rect x="251.8" y="200.3" width="1.2" height="1.2" fill="#2c2c2c"/><rect x="100.3" y="133.5" width="1.2" height="1.2" fill="#2c2c2c"/><rect x="82.7" y="131.7" width="1.2" height="1.2" fill="#2c2c2c"/><rect x="43.4" y="128.3" width="1.2" height="1.2" fill="#2c2c2c"/><rect x="145.7" y="159.2" width="1.2" height="1.2" fill="#2c2c2c"/><rect x="116.8" y="148.4" width="1.2" height="1.2" fill="#2c2c2c"/><rect x="126.4" y="146.8" width="1.2" height="1.2" fill="#2c2c2c"/><rect x="69.3" y="127.3" width="1.2" height="1.2" fill="#2c2c2c"/><rect x="46.2" y="125.6" width="1.2" height="1.2" fill="#2c2c2c"/><rect x="62.4" y="134.4" width="1.2" height="1.2" fill="#2c2c2c"/><rect x="144.4" y="161.1" width="1.2" height="1.2" fill="#2c2c2c"/><rect x="159.6" y="169.9" width="1.2" height="1.2" fill="#2c2c2c"/><rect x="125.7" y="149.9" width="1.2" height="1.2" fill="#2c2c2c"/><rect x="125.7" y="156.3" width="1.2" height="1.2" fill="#2c2c2c"/><rect x="127.2" y="144.6" width="1.2" height="1.2" fill="#2c2c2c"/><rect x="160.2" y="168.3" width="1.2" height="1.2" fill="#2c2c2c"/><rect x="58.1" y="129.1" width="1.2" height="1.2" fill="#2c2c2c"/><rect x="50.2" y="129.0" width="1.2" height="1.2" fill="#2c2c2c"/><rect x="287.1" y="205.1" width="1.2" height="1.2" fill="#2c2c2c"/><rect x="43.5" y="119.4" width="1.2" height="1.2" fill="#2c2c2c"/><rect x="63.8" y="128.2" width="1.2" height="1.2" fill="#2c2c2c"/><rect x="179.5" y="161.2" width="1.2" height="1.2" fill="#2c2c2c"/><rect x="135.4" y="145.2" width="1.2" height="1.2" fill="#2c2c2c"/><rect x="64.5" y="137.2" width="1.2" height="1.2" fill="#2c2c2c"/><rect x="270.3" y="197.4" width="1.2" height="1.2" fill="#2c2c2c"/><rect x="80.3" y="137.3" width="1.2" height="1.2" fill="#2c2c2c"/><rect x="212.6" y="178.2" width="1.2" height="1.2" fill="#2c2c2c"/><rect x="137.8" y="155.5" width="1.2" height="1.2" fill="#2c2c2c"/><rect x="105.9" y="150.9" width="1.2" height="1.2" fill="#2c2c2c"/><rect x="156.6" y="165.7" width="1.2" height="1.2" fill="#2c2c2c"/><rect x="119.7" y="142.2" width="1.2" height="1.2" fill="#2c2c2c"/><rect x="267.5" y="207.5" width="1.2" height="1.2" fill="#2c2c2c"/><rect x="231.7" y="328.8" width="1.2" height="1.2" fill="#2c2c2c"/><rect x="195.5" y="312.4" width="1.2" height="1.2" fill="#2c2c2c"/><rect x="145.4" y="292.5" width="1.2" height="1.2" fill="#2c2c2c"/><rect x="244.9" y="337.7" width="1.2" height="1.2" fill="#2c2c2c"/><rect x="132.5" y="298.6" width="1.2" height="1.2" fill="#2c2c2c"/><rect x="53.1" y="257.7" width="1.2" height="1.2" fill="#2c2c2c"/><rect x="167.9" y="301.0" width="1.2" height="1.2" fill="#2c2c2c"/><rect x="126.6" y="297.6" width="1.2" height="1.2" fill="#2c2c2c"/><rect x="80.3" y="268.2" width="1.2" height="1.2" fill="#2c2c2c"/><rect x="95.8" y="281.8" width="1.2" height="1.2" fill="#2c2c2c"/><rect x="102.7" y="272.9" width="1.2" height="1.2" fill="#2c2c2c"/><rect x="176.5" y="305.4" width="1.2" height="1.2" fill="#2c2c2c"/><rect x="100.0" y="280.2" width="1.2" height="1.2" fill="#2c2c2c"/><rect x="201.9" y="317.0" width="1.2" height="1.2" fill="#2c2c2c"/><rect x="195.4" y="314.9" width="1.2" height="1.2" fill="#2c2c2c"/><rect x="244.8" y="339.2" width="1.2" height="1.2" fill="#2c2c2c"/><rect x="124.6" y="286.4" width="1.2" height="1.2" fill="#2c2c2c"/><rect x="262.0" y="334.2" width="1.2" height="1.2" fill="#2c2c2c"/><rect x="217.5" y="325.0" width="1.2" height="1.2" fill="#2c2c2c"/><rect x="208.5" y="326.3" width="1.2" height="1.2" fill="#2c2c2c"/><rect x="247.4" y="326.5" width="1.2" height="1.2" fill="#2c2c2c"/><rect x="195.2" y="313.7" width="1.2" height="1.2" fill="#2c2c2c"/><rect x="181.6" y="306.8" width="1.2" height="1.2" fill="#2c2c2c"/><rect x="109.6" y="287.8" width="1.2" height="1.2" fill="#2c2c2c"/><rect x="175.1" y="302.3" width="1.2" height="1.2" fill="#2c2c2c"/><rect x="103.8" y="278.7" width="1.2" height="1.2" fill="#2c2c2c"/><rect x="84.5" y="275.0" width="1.2" height="1.2" fill="#2c2c2c"/><rect x="75.4" y="264.3" width="1.2" height="1.2" fill="#2c2c2c"/><rect x="60.9" y="259.9" width="1.2" height="1.2" fill="#2c2c2c"/><rect x="218.1" y="315.4" width="1.2" height="1.2" fill="#2c2c2c"/><rect x="150.9" y="302.8" width="1.2" height="1.2" fill="#2c2c2c"/><rect x="162.4" y="296.6" width="1.2" height="1.2" fill="#2c2c2c"/><rect x="254.1" y="340.8" width="1.2" height="1.2" fill="#2c2c2c"/><rect x="55.8" y="260.6" width="1.2" height="1.2" fill="#2c2c2c"/><rect x="164.7" y="308.0" width="1.2" height="1.2" fill="#2c2c2c"/><rect x="136.5" y="296.7" width="1.2" height="1.2" fill="#2c2c2c"/><rect x="101.4" y="284.4" width="1.2" height="1.2" fill="#2c2c2c"/><rect x="123.0" y="285.6" width="1.2" height="1.2" fill="#2c2c2c"/><rect x="227.5" y="331.0" width="1.2" height="1.2" fill="#2c2c2c"/><rect x="246.3" y="333.0" width="1.2" height="1.2" fill="#2c2c2c"/><rect x="143.6" y="299.1" width="1.2" height="1.2" fill="#2c2c2c"/><rect x="193.4" y="318.7" width="1.2" height="1.2" fill="#2c2c2c"/><rect x="241.9" y="324.0" width="1.2" height="1.2" fill="#2c2c2c"/><rect x="133.0" y="294.7" width="1.2" height="1.2" fill="#2c2c2c"/><rect x="100.4" y="275.2" width="1.2" height="1.2" fill="#2c2c2c"/><rect x="43.0" y="261.6" width="1.2" height="1.2" fill="#2c2c2c"/><rect x="272.4" y="349.0" width="1.2" height="1.2" fill="#2c2c2c"/><rect x="72.1" y="273.6" width="1.2" height="1.2" fill="#2c2c2c"/><rect x="143.8" y="297.9" width="1.2" height="1.2" fill="#2c2c2c"/><rect x="136.0" y="300.2" width="1.2" height="1.2" fill="#2c2c2c"/><rect x="288.6" y="339.1" width="1.2" height="1.2" fill="#2c2c2c"/><rect x="220.2" y="316.2" width="1.2" height="1.2" fill="#2c2c2c"/><rect x="52.8" y="260.1" width="1.2" height="1.2" fill="#2c2c2c"/><rect x="219.6" y="330.7" width="1.2" height="1.2" fill="#2c2c2c"/><rect x="71.7" y="267.5" width="1.2" height="1.2" fill="#2c2c2c"/><rect x="46.6" y="262.2" width="1.2" height="1.2" fill="#2c2c2c"/><rect x="161.5" y="299.8" width="1.2" height="1.2" fill="#2c2c2c"/><rect x="115.1" y="290.6" width="1.2" height="1.2" fill="#2c2c2c"/><rect x="250.3" y="329.6" width="1.2" height="1.2" fill="#2c2c2c"/><rect x="137.0" y="295.3" width="1.2" height="1.2" fill="#2c2c2c"/><rect x="228.2" y="333.6" width="1.2" height="1.2" fill="#2c2c2c"/><rect x="135.9" y="296.2" width="1.2" height="1.2" fill="#2c2c2c"/><rect x="174.3" y="311.5" width="1.2" height="1.2" fill="#2c2c2c"/><rect x="79.7" y="267.7" width="1.2" height="1.2" fill="#2c2c2c"/><rect x="63.4" y="274.6" width="1.2" height="1.2" fill="#2c2c2c"/><rect x="103.1" y="281.2" width="1.2" height="1.2" fill="#2c2c2c"/><rect x="71.8" y="267.4" width="1.2" height="1.2" fill="#2c2c2c"/><rect x="44.6" y="261.8" width="1.2" height="1.2" fill="#2c2c2c"/><rect x="75.1" y="273.6" width="1.2" height="1.2" fill="#2c2c2c"/><rect x="110.7" y="279.5" width="1.2" height="1.2" fill="#2c2c2c"/><rect x="161.3" y="299.6" width="1.2" height="1.2" fill="#2c2c2c"/><rect x="108.5" y="275.8" width="1.2" height="1.2" fill="#2c2c2c"/><rect x="53.0" y="270.2" width="1.2" height="1.2" fill="#2c2c2c"/><rect x="120.6" y="280.5" width="1.2" height="1.2" fill="#2c2c2c"/><rect x="86.0" y="275.0" width="1.2" height="1.2" fill="#2c2c2c"/><rect x="290.0" y="342.2" width="1.2" height="1.2" fill="#2c2c2c"/><rect x="256.4" y="335.1" width="1.2" height="1.2" fill="#2c2c2c"/><rect x="141.4" y="300.0" width="1.2" height="1.2" fill="#2c2c2c"/><rect x="142.2" y="287.7" width="1.2" height="1.2" fill="#2c2c2c"/><rect x="176.4" y="309.8" width="1.2" height="1.2" fill="#2c2c2c"/><rect x="196.9" y="310.7" width="1.2" height="1.2" fill="#2c2c2c"/><rect x="272.4" y="347.2" width="1.2" height="1.2" fill="#2c2c2c"/><rect x="288.2" y="345.6" width="1.2" height="1.2" fill="#2c2c2c"/><rect x="246.7" y="335.8" width="1.2" height="1.2" fill="#2c2c2c"/><rect x="88.0" y="268.2" width="1.2" height="1.2" fill="#2c2c2c"/><rect x="85.6" y="268.8" width="1.2" height="1.2" fill="#2c2c2c"/><rect x="60.2" y="263.9" width="1.2" height="1.2" fill="#2c2c2c"/><rect x="229.1" y="322.6" width="1.2" height="1.2" fill="#2c2c2c"/><rect x="171.7" y="297.3" width="1.2" height="1.2" fill="#2c2c2c"/><rect x="89.0" y="284.0" width="1.2" height="1.2" fill="#2c2c2c"/><rect x="42.9" y="260.6" width="1.2" height="1.2" fill="#2c2c2c"/><rect x="240.5" y="334.7" width="1.2" height="1.2" fill="#2c2c2c"/><rect x="224.0" y="322.3" width="1.2" height="1.2" fill="#2c2c2c"/><rect x="238.5" y="334.6" width="1.2" height="1.2" fill="#2c2c2c"/><rect x="228.8" y="333.8" width="1.2" height="1.2" fill="#2c2c2c"/><rect x="61.6" y="274.2" width="1.2" height="1.2" fill="#2c2c2c"/><rect x="139.0" y="297.5" width="1.2" height="1.2" fill="#2c2c2c"/><rect x="99.5" y="286.9" width="1.2" height="1.2" fill="#2c2c2c"/><rect x="45.5" y="262.4" width="1.2" height="1.2" fill="#2c2c2c"/><rect x="97.8" y="277.6" width="1.2" height="1.2" fill="#2c2c2c"/><rect x="131.2" y="293.9" width="1.2" height="1.2" fill="#2c2c2c"/><rect x="243.0" y="328.4" width="1.2" height="1.2" fill="#2c2c2c"/><rect x="200.1" y="313.1" width="1.2" height="1.2" fill="#2c2c2c"/><rect x="106.8" y="289.4" width="1.2" height="1.2" fill="#2c2c2c"/><rect x="123.5" y="281.8" width="1.2" height="1.2" fill="#2c2c2c"/><rect x="121.9" y="292.0" width="1.2" height="1.2" fill="#2c2c2c"/><rect x="91.0" y="281.2" width="1.2" height="1.2" fill="#2c2c2c"/><rect x="175.2" y="309.8" width="1.2" height="1.2" fill="#2c2c2c"/><rect x="87.8" y="269.4" width="1.2" height="1.2" fill="#2c2c2c"/><rect x="77.2" y="269.7" width="1.2" height="1.2" fill="#2c2c2c"/><rect x="151.1" y="290.1" width="1.2" height="1.2" fill="#2c2c2c"/><rect x="166.2" y="302.0" width="1.2" height="1.2" fill="#2c2c2c"/><rect x="120.1" y="288.0" width="1.2" height="1.2" fill="#2c2c2c"/><rect x="278.9" y="338.3" width="1.2" height="1.2" fill="#2c2c2c"/><rect x="260.5" y="333.8" width="1.2" height="1.2" fill="#2c2c2c"/><rect x="230.3" y="319.6" width="1.2" height="1.2" fill="#2c2c2c"/><rect x="286.5" y="344.8" width="1.2" height="1.2" fill="#2c2c2c"/><rect x="281.4" y="339.5" width="1.2" height="1.2" fill="#2c2c2c"/><rect x="140.5" y="298.0" width="1.2" height="1.2" fill="#2c2c2c"/><rect x="86.5" y="271.7" width="1.2" height="1.2" fill="#2c2c2c"/><rect x="266.3" y="278.7" width="1.2" height="1.2" fill="#2c2c2c"/><rect x="455.3" y="186.5" width="1.2" height="1.2" fill="#2c2c2c"/><rect x="461.1" y="173.1" width="1.2" height="1.2" fill="#2c2c2c"/><rect x="345.7" y="238.1" width="1.2" height="1.2" fill="#2c2c2c"/><rect x="274.9" y="286.0" width="1.2" height="1.2" fill="#2c2c2c"/><rect x="330.5" y="251.0" width="1.2" height="1.2" fill="#2c2c2c"/><rect x="389.7" y="212.7" width="1.2" height="1.2" fill="#2c2c2c"/><rect x="424.8" y="194.8" width="1.2" height="1.2" fill="#2c2c2c"/><rect x="326.2" y="258.7" width="1.2" height="1.2" fill="#2c2c2c"/><rect x="307.4" y="256.6" width="1.2" height="1.2" fill="#2c2c2c"/><rect x="327.7" y="250.7" width="1.2" height="1.2" fill="#2c2c2c"/><rect x="449.1" y="178.6" width="1.2" height="1.2" fill="#2c2c2c"/><rect x="325.4" y="255.1" width="1.2" height="1.2" fill="#2c2c2c"/><rect x="329.6" y="250.4" width="1.2" height="1.2" fill="#2c2c2c"/><rect x="330.9" y="255.9" width="1.2" height="1.2" fill="#2c2c2c"/><rect x="310.0" y="256.5" width="1.2" height="1.2" fill="#2c2c2c"/><rect x="337.8" y="242.3" width="1.2" height="1.2" fill="#2c2c2c"/><rect x="438.0" y="191.1" width="1.2" height="1.2" fill="#2c2c2c"/><rect x="451.9" y="180.8" width="1.2" height="1.2" fill="#2c2c2c"/><rect x="289.5" y="277.5" width="1.2" height="1.2" fill="#2c2c2c"/><rect x="323.8" y="248.4" width="1.2" height="1.2" fill="#2c2c2c"/><rect x="368.2" y="236.5" width="1.2" height="1.2" fill="#2c2c2c"/><rect x="353.9" y="233.6" width="1.2" height="1.2" fill="#2c2c2c"/><rect x="482.3" y="171.4" width="1.2" height="1.2" fill="#2c2c2c"/><rect x="356.2" y="228.3" width="1.2" height="1.2" fill="#2c2c2c"/><rect x="453.2" y="184.3" width="1.2" height="1.2" fill="#2c2c2c"/><rect x="349.4" y="243.8" width="1.2" height="1.2" fill="#2c2c2c"/><rect x="355.5" y="231.4" width="1.2" height="1.2" fill="#2c2c2c"/><rect x="407.8" y="209.6" width="1.2" height="1.2" fill="#2c2c2c"/><rect x="381.2" y="226.1" width="1.2" height="1.2" fill="#2c2c2c"/><rect x="272.6" y="282.6" width="1.2" height="1.2" fill="#2c2c2c"/><rect x="354.2" y="228.3" width="1.2" height="1.2" fill="#2c2c2c"/><rect x="478.3" y="158.6" width="1.2" height="1.2" fill="#2c2c2c"/><rect x="319.5" y="262.4" width="1.2" height="1.2" fill="#2c2c2c"/><rect x="493.3" y="164.1" width="1.2" height="1.2" fill="#2c2c2c"/><rect x="351.2" y="245.2" width="1.2" height="1.2" fill="#2c2c2c"/><rect x="303.7" y="268.6" width="1.2" height="1.2" fill="#2c2c2c"/><rect x="485.8" y="155.2" width="1.2" height="1.2" fill="#2c2c2c"/><rect x="302.0" y="268.9" width="1.2" height="1.2" fill="#2c2c2c"/><rect x="474.2" y="171.3" width="1.2" height="1.2" fill="#2c2c2c"/><rect x="488.1" y="158.5" width="1.2" height="1.2" fill="#2c2c2c"/><rect x="352.7" y="230.1" width="1.2" height="1.2" fill="#2c2c2c"/><rect x="335.4" y="254.4" width="1.2" height="1.2" fill="#2c2c2c"/><rect x="283.6" y="270.8" width="1.2" height="1.2" fill="#2c2c2c"/><rect x="346.5" y="232.4" width="1.2" height="1.2" fill="#2c2c2c"/><rect x="338.0" y="239.6" width="1.2" height="1.2" fill="#2c2c2c"/><rect x="297.9" y="268.6" width="1.2" height="1.2" fill="#2c2c2c"/><rect x="394.4" y="214.1" width="1.2" height="1.2" fill="#2c2c2c"/><rect x="445.4" y="184.3" width="1.2" height="1.2" fill="#2c2c2c"/><rect x="485.5" y="153.3" width="1.2" height="1.2" fill="#2c2c2c"/><rect x="317.8" y="249.3" width="1.2" height="1.2" fill="#2c2c2c"/><rect x="342.6" y="247.2" width="1.2" height="1.2" fill="#2c2c2c"/><rect x="482.6" y="162.6" width="1.2" height="1.2" fill="#2c2c2c"/><rect x="305.2" y="261.0" width="1.2" height="1.2" fill="#2c2c2c"/><rect x="399.2" y="206.5" width="1.2" height="1.2" fill="#2c2c2c"/><rect x="455.0" y="186.7" width="1.2" height="1.2" fill="#2c2c2c"/><rect x="376.1" y="225.2" width="1.2" height="1.2" fill="#2c2c2c"/><rect x="464.3" y="172.3" width="1.2" height="1.2" fill="#2c2c2c"/><rect x="316.6" y="265.2" width="1.2" height="1.2" fill="#2c2c2c"/><rect x="492.3" y="148.4" width="1.2" height="1.2" fill="#2c2c2c"/><rect x="444.7" y="182.4" width="1.2" height="1.2" fill="#2c2c2c"/><rect x="278.8" y="273.1" width="1.2" height="1.2" fill="#2c2c2c"/><rect x="311.0" y="264.8" width="1.2" height="1.2" fill="#2c2c2c"/><rect x="314.8" y="250.1" width="1.2" height="1.2" fill="#2c2c2c"/><rect x="322.2" y="259.5" width="1.2" height="1.2" fill="#2c2c2c"/><rect x="385.5" y="220.7" width="1.2" height="1.2" fill="#2c2c2c"/><rect x="374.6" y="218.7" width="1.2" height="1.2" fill="#2c2c2c"/><rect x="271.4" y="279.9" width="1.2" height="1.2" fill="#2c2c2c"/><rect x="277.2" y="275.8" width="1.2" height="1.2" fill="#2c2c2c"/><rect x="411.3" y="201.0" width="1.2" height="1.2" fill="#2c2c2c"/><rect x="379.3" y="223.8" width="1.2" height="1.2" fill="#2c2c2c"/><rect x="341.5" y="240.6" width="1.2" height="1.2" fill="#2c2c2c"/><rect x="473.7" y="169.0" width="1.2" height="1.2" fill="#2c2c2c"/><rect x="365.8" y="230.0" width="1.2" height="1.2" fill="#2c2c2c"/><rect x="374.5" y="221.4" width="1.2" height="1.2" fill="#2c2c2c"/><rect x="478.6" y="160.0" width="1.2" height="1.2" fill="#2c2c2c"/><rect x="487.2" y="166.2" width="1.2" height="1.2" fill="#2c2c2c"/><rect x="470.9" y="163.1" width="1.2" height="1.2" fill="#2c2c2c"/><rect x="389.9" y="224.1" width="1.2" height="1.2" fill="#2c2c2c"/><rect x="333.7" y="241.9" width="1.2" height="1.2" fill="#2c2c2c"/><rect x="434.6" y="185.2" width="1.2" height="1.2" fill="#2c2c2c"/><rect x="401.8" y="202.6" width="1.2" height="1.2" fill="#2c2c2c"/><rect x="486.7" y="156.3" width="1.2" height="1.2" fill="#2c2c2c"/><rect x="293.1" y="274.1" width="1.2" height="1.2" fill="#2c2c2c"/><rect x="349.9" y="239.5" width="1.2" height="1.2" fill="#2c2c2c"/><rect x="386.8" y="224.7" width="1.2" height="1.2" fill="#2c2c2c"/><rect x="387.2" y="214.9" width="1.2" height="1.2" fill="#2c2c2c"/><rect x="269.8" y="284.2" width="1.2" height="1.2" fill="#2c2c2c"/><rect x="332.0" y="249.9" width="1.2" height="1.2" fill="#2c2c2c"/><rect x="414.9" y="200.5" width="1.2" height="1.2" fill="#2c2c2c"/><rect x="290.1" y="272.5" width="1.2" height="1.2" fill="#2c2c2c"/><rect x="381.4" y="222.8" width="1.2" height="1.2" fill="#2c2c2c"/><rect x="491.9" y="153.2" width="1.2" height="1.2" fill="#2c2c2c"/><rect x="368.8" y="220.3" width="1.2" height="1.2" fill="#2c2c2c"/><rect x="452.3" y="175.1" width="1.2" height="1.2" fill="#2c2c2c"/><rect x="462.3" y="179.4" width="1.2" height="1.2" fill="#2c2c2c"/><rect x="331.0" y="256.3" width="1.2" height="1.2" fill="#2c2c2c"/><rect x="385.1" y="216.9" width="1.2" height="1.2" fill="#2c2c2c"/><rect x="400.3" y="217.5" width="1.2" height="1.2" fill="#2c2c2c"/><rect x="382.3" y="219.6" width="1.2" height="1.2" fill="#2c2c2c"/><rect x="338.8" y="250.7" width="1.2" height="1.2" fill="#2c2c2c"/><rect x="384.4" y="215.9" width="1.2" height="1.2" fill="#2c2c2c"/><rect x="312.7" y="254.7" width="1.2" height="1.2" fill="#2c2c2c"/><rect x="463.5" y="178.8" width="1.2" height="1.2" fill="#2c2c2c"/><rect x="497.4" y="161.5" width="1.2" height="1.2" fill="#2c2c2c"/><rect x="429.2" y="198.3" width="1.2" height="1.2" fill="#2c2c2c"/><rect x="435.4" y="195.0" width="1.2" height="1.2" fill="#2c2c2c"/><rect x="452.3" y="174.0" width="1.2" height="1.2" fill="#2c2c2c"/><rect x="456.1" y="174.1" width="1.2" height="1.2" fill="#2c2c2c"/><rect x="328.7" y="257.9" width="1.2" height="1.2" fill="#2c2c2c"/><rect x="274.8" y="281.6" width="1.2" height="1.2" fill="#2c2c2c"/><rect x="350.5" y="243.2" width="1.2" height="1.2" fill="#2c2c2c"/><rect x="412.8" y="209.7" width="1.2" height="1.2" fill="#2c2c2c"/><rect x="485.3" y="163.5" width="1.2" height="1.2" fill="#2c2c2c"/><rect x="285.5" y="278.1" width="1.2" height="1.2" fill="#2c2c2c"/><rect x="298.2" y="276.4" width="1.2" height="1.2" fill="#2c2c2c"/><rect x="469.3" y="166.7" width="1.2" height="1.2" fill="#2c2c2c"/><rect x="313.7" y="262.5" width="1.2" height="1.2" fill="#2c2c2c"/><rect x="447.1" y="191.4" width="1.2" height="1.2" fill="#2c2c2c"/><rect x="410.7" y="196.9" width="1.2" height="1.2" fill="#2c2c2c"/><rect x="158.9" y="158.3" width="2.5" height="2.5" fill="#898c3d"/><rect x="156.7" y="162.2" width="2.5" height="2.5" fill="#7c8a3e"/><rect x="91.3" y="143.7" width="2.5" height="2.5" fill="#3a6e66"/><rect x="239.2" y="190.4" width="2.5" height="2.5" fill="#978e3c"/><rect x="152.8" y="166.6" width="2.5" height="2.5" fill="#978e3c"/><rect x="188.7" y="179.7" width="2.5" height="2.5" fill="#898c3d"/><rect x="280.3" y="205.8" width="2.5" height="2.5" fill="#978e3c"/><rect x="198.4" y="175.8" width="2.5" height="2.5" fill="#7c8a3e"/><rect x="58.5" y="136.3" width="2.5" height="2.5" fill="#3a6e66"/><rect x="52.4" y="130.4" width="2.5" height="2.5" fill="#3b6967"/><rect x="125.9" y="152.4" width="2.5" height="2.5" fill="#898c3d"/><rect x="201.4" y="179.6" width="2.5" height="2.5" fill="#898c3d"/><rect x="44.6" y="130.8" width="2.5" height="2.5" fill="#3b6967"/><rect x="286.6" y="213.0" width="2.5" height="2.5" fill="#978e3c"/><rect x="217.7" y="185.5" width="2.5" height="2.5" fill="#978e3c"/><rect x="51.9" y="131.1" width="2.5" height="2.5" fill="#3a6e66"/><rect x="233.5" y="186.6" width="2.5" height="2.5" fill="#898c3d"/><rect x="60.0" y="135.7" width="2.5" height="2.5" fill="#978e3c"/><rect x="250.2" y="200.1" width="2.5" height="2.5" fill="#978e3c"/><rect x="159.7" y="166.2" width="2.5" height="2.5" fill="#898c3d"/><rect x="148.6" y="160.1" width="2.5" height="2.5" fill="#978e3c"/><rect x="128.0" y="154.1" width="2.5" height="2.5" fill="#3d7363"/><rect x="124.0" y="159.0" width="2.5" height="2.5" fill="#978e3c"/><rect x="79.3" y="136.7" width="2.5" height="2.5" fill="#61854e"/><rect x="67.7" y="139.5" width="2.5" height="2.5" fill="#898c3d"/><rect x="210.1" y="186.1" width="2.5" height="2.5" fill="#978e3c"/><rect x="153.3" y="166.1" width="2.5" height="2.5" fill="#978e3c"/><rect x="145.1" y="166.3" width="2.5" height="2.5" fill="#898c3d"/><rect x="75.4" y="134.4" width="2.5" height="2.5" fill="#3d7363"/><rect x="254.7" y="200.5" width="2.5" height="2.5" fill="#7c8a3e"/><rect x="118.7" y="153.8" width="2.5" height="2.5" fill="#3b6967"/><rect x="287.4" y="209.4" width="2.5" height="2.5" fill="#7c8a3e"/><rect x="199.3" y="185.0" width="2.5" height="2.5" fill="#978e3c"/><rect x="150.5" y="168.2" width="2.5" height="2.5" fill="#978e3c"/><rect x="233.5" y="190.6" width="2.5" height="2.5" fill="#978e3c"/><rect x="62.6" y="135.1" width="2.5" height="2.5" fill="#898c3d"/><rect x="186.9" y="175.9" width="2.5" height="2.5" fill="#978e3c"/><rect x="194.6" y="183.1" width="2.5" height="2.5" fill="#978e3c"/><rect x="279.5" y="203.8" width="2.5" height="2.5" fill="#898c3d"/><rect x="90.0" y="142.3" width="2.5" height="2.5" fill="#898c3d"/><rect x="120.9" y="153.3" width="2.5" height="2.5" fill="#61854e"/><rect x="89.4" y="146.7" width="2.5" height="2.5" fill="#61854e"/><rect x="200.3" y="175.4" width="2.5" height="2.5" fill="#898c3d"/><rect x="260.1" y="199.6" width="2.5" height="2.5" fill="#7c8a3e"/><rect x="64.1" y="134.5" width="2.5" height="2.5" fill="#3a6e66"/><rect x="278.8" y="208.3" width="2.5" height="2.5" fill="#978e3c"/><rect x="226.1" y="186.6" width="2.5" height="2.5" fill="#7c8a3e"/><rect x="163.8" y="170.0" width="2.5" height="2.5" fill="#7c8a3e"/><rect x="88.6" y="141.1" width="2.5" height="2.5" fill="#898c3d"/><rect x="162.6" y="165.9" width="2.5" height="2.5" fill="#7c8a3e"/><rect x="195.3" y="177.2" width="2.5" height="2.5" fill="#978e3c"/><rect x="225.3" y="194.1" width="2.5" height="2.5" fill="#978e3c"/><rect x="111.8" y="148.2" width="2.5" height="2.5" fill="#898c3d"/><rect x="114.0" y="150.7" width="2.5" height="2.5" fill="#3a6e66"/><rect x="183.5" y="176.8" width="2.5" height="2.5" fill="#898c3d"/><rect x="282.5" y="211.4" width="2.5" height="2.5" fill="#7c8a3e"/><rect x="187.2" y="176.4" width="2.5" height="2.5" fill="#978e3c"/><rect x="160.6" y="167.2" width="2.5" height="2.5" fill="#978e3c"/><rect x="215.3" y="186.3" width="2.5" height="2.5" fill="#978e3c"/><rect x="162.8" y="167.1" width="2.5" height="2.5" fill="#978e3c"/><rect x="122.5" y="154.6" width="2.5" height="2.5" fill="#3a6e66"/><rect x="135.0" y="157.6" width="2.5" height="2.5" fill="#978e3c"/><rect x="264.0" y="202.2" width="2.5" height="2.5" fill="#978e3c"/><rect x="133.8" y="151.5" width="2.5" height="2.5" fill="#61854e"/><rect x="158.3" y="170.8" width="2.5" height="2.5" fill="#978e3c"/><rect x="253.8" y="202.2" width="2.5" height="2.5" fill="#7c8a3e"/><rect x="50.6" y="126.1" width="2.5" height="2.5" fill="#978e3c"/><rect x="194.5" y="175.5" width="2.5" height="2.5" fill="#978e3c"/><rect x="66.9" y="135.9" width="2.5" height="2.5" fill="#3b6967"/><rect x="221.5" y="189.6" width="2.5" height="2.5" fill="#898c3d"/><rect x="272.5" y="204.4" width="2.5" height="2.5" fill="#898c3d"/><rect x="250.1" y="194.3" width="2.5" height="2.5" fill="#978e3c"/><rect x="172.8" y="167.8" width="2.5" height="2.5" fill="#978e3c"/><rect x="162.5" y="166.9" width="2.5" height="2.5" fill="#978e3c"/><rect x="276.2" y="211.2" width="2.5" height="2.5" fill="#898c3d"/><rect x="105.9" y="151.6" width="2.5" height="2.5" fill="#978e3c"/><rect x="133.6" y="160.2" width="2.5" height="2.5" fill="#3a6e66"/><rect x="85.1" y="144.1" width="2.5" height="2.5" fill="#3d7363"/><rect x="208.5" y="176.4" width="2.5" height="2.5" fill="#978e3c"/><rect x="142.7" y="163.0" width="2.5" height="2.5" fill="#978e3c"/><rect x="97.1" y="138.2" width="2.5" height="2.5" fill="#898c3d"/><rect x="258.1" y="203.1" width="2.5" height="2.5" fill="#898c3d"/><rect x="98.1" y="146.9" width="2.5" height="2.5" fill="#898c3d"/><rect x="166.7" y="167.5" width="2.5" height="2.5" fill="#978e3c"/><rect x="217.1" y="188.9" width="2.5" height="2.5" fill="#978e3c"/><rect x="73.8" y="135.2" width="2.5" height="2.5" fill="#3b6967"/><rect x="112.2" y="150.4" width="2.5" height="2.5" fill="#61854e"/><rect x="170.3" y="173.5" width="2.5" height="2.5" fill="#978e3c"/><rect x="218.3" y="189.3" width="2.5" height="2.5" fill="#978e3c"/><rect x="66.4" y="129.1" width="2.5" height="2.5" fill="#978e3c"/><rect x="115.4" y="146.4" width="2.5" height="2.5" fill="#3d7363"/><rect x="185.5" y="171.9" width="2.5" height="2.5" fill="#978e3c"/><rect x="205.0" y="177.5" width="2.5" height="2.5" fill="#898c3d"/><rect x="157.0" y="163.2" width="2.5" height="2.5" fill="#978e3c"/><rect x="232.4" y="191.0" width="2.5" height="2.5" fill="#978e3c"/><rect x="282.5" y="213.8" width="2.5" height="2.5" fill="#978e3c"/><rect x="155.7" y="161.2" width="2.5" height="2.5" fill="#978e3c"/><rect x="279.1" y="204.4" width="2.5" height="2.5" fill="#978e3c"/><rect x="95.4" y="141.4" width="2.5" height="2.5" fill="#978e3c"/><rect x="228.6" y="190.6" width="2.5" height="2.5" fill="#7c8a3e"/><rect x="218.3" y="187.9" width="2.5" height="2.5" fill="#978e3c"/><rect x="175.5" y="174.3" width="2.5" height="2.5" fill="#7c8a3e"/><rect x="166.2" y="170.6" width="2.5" height="2.5" fill="#978e3c"/><rect x="67.2" y="133.8" width="2.5" height="2.5" fill="#61854e"/><rect x="140.9" y="157.4" width="2.5" height="2.5" fill="#978e3c"/><rect x="136.9" y="158.9" width="2.5" height="2.5" fill="#7c8a3e"/><rect x="206.5" y="176.2" width="2.5" height="2.5" fill="#978e3c"/><rect x="158.3" y="165.6" width="2.5" height="2.5" fill="#978e3c"/><rect x="67.7" y="138.6" width="2.5" height="2.5" fill="#61854e"/><rect x="78.5" y="132.8" width="2.5" height="2.5" fill="#898c3d"/><rect x="262.0" y="206.8" width="2.5" height="2.5" fill="#7c8a3e"/><rect x="282.7" y="208.1" width="2.5" height="2.5" fill="#978e3c"/><rect x="109.5" y="148.5" width="2.5" height="2.5" fill="#3a6e66"/><rect x="66.4" y="132.9" width="2.5" height="2.5" fill="#3b6967"/><rect x="130.0" y="153.2" width="2.5" height="2.5" fill="#978e3c"/><rect x="98.2" y="146.1" width="2.5" height="2.5" fill="#978e3c"/><rect x="147.9" y="166.4" width="2.5" height="2.5" fill="#978e3c"/><rect x="159.4" y="167.1" width="2.5" height="2.5" fill="#7c8a3e"/><rect x="265.7" y="198.3" width="2.5" height="2.5" fill="#898c3d"/><rect x="275.0" y="205.9" width="2.5" height="2.5" fill="#898c3d"/><rect x="187.0" y="173.5" width="2.5" height="2.5" fill="#898c3d"/><rect x="175.8" y="166.3" width="2.5" height="2.5" fill="#978e3c"/><rect x="247.8" y="195.1" width="2.5" height="2.5" fill="#7c8a3e"/><rect x="250.4" y="197.1" width="2.5" height="2.5" fill="#7c8a3e"/><rect x="110.2" y="144.5" width="2.5" height="2.5" fill="#3a6e66"/><rect x="100.4" y="137.3" width="2.5" height="2.5" fill="#898c3d"/><rect x="281.8" y="204.6" width="2.5" height="2.5" fill="#978e3c"/><rect x="145.8" y="160.6" width="2.5" height="2.5" fill="#978e3c"/><rect x="168.1" y="168.5" width="2.5" height="2.5" fill="#978e3c"/><rect x="171.1" y="169.7" width="2.5" height="2.5" fill="#898c3d"/><rect x="176.9" y="174.0" width="2.5" height="2.5" fill="#978e3c"/><rect x="213.2" y="184.8" width="2.5" height="2.5" fill="#978e3c"/><rect x="273.7" y="198.9" width="2.5" height="2.5" fill="#898c3d"/><rect x="110.2" y="151.0" width="2.5" height="2.5" fill="#3b6967"/><rect x="167.1" y="164.7" width="2.5" height="2.5" fill="#898c3d"/><rect x="170.8" y="175.2" width="2.5" height="2.5" fill="#978e3c"/><rect x="95.5" y="137.5" width="2.5" height="2.5" fill="#898c3d"/><rect x="218.0" y="181.3" width="2.5" height="2.5" fill="#978e3c"/><rect x="54.5" y="129.8" width="2.5" height="2.5" fill="#3d7363"/><rect x="123.7" y="154.1" width="2.5" height="2.5" fill="#3d7363"/><rect x="107.3" y="143.5" width="2.5" height="2.5" fill="#3a6e66"/><rect x="75.7" y="136.9" width="2.5" height="2.5" fill="#3a6e66"/><rect x="197.3" y="178.3" width="2.5" height="2.5" fill="#898c3d"/><rect x="54.7" y="123.7" width="2.5" height="2.5" fill="#61854e"/><rect x="147.0" y="159.7" width="2.5" height="2.5" fill="#978e3c"/><rect x="255.1" y="199.2" width="2.5" height="2.5" fill="#7c8a3e"/><rect x="203.2" y="174.8" width="2.5" height="2.5" fill="#7c8a3e"/><rect x="188.5" y="175.0" width="2.5" height="2.5" fill="#978e3c"/><rect x="102.5" y="145.8" width="2.5" height="2.5" fill="#898c3d"/><rect x="125.6" y="147.6" width="2.5" height="2.5" fill="#3d7363"/><rect x="260.8" y="203.5" width="2.5" height="2.5" fill="#978e3c"/><rect x="259.0" y="205.7" width="2.5" height="2.5" fill="#978e3c"/><rect x="260.7" y="202.5" width="2.5" height="2.5" fill="#898c3d"/><rect x="68.9" y="135.7" width="2.5" height="2.5" fill="#3b6967"/><rect x="177.7" y="171.8" width="2.5" height="2.5" fill="#978e3c"/><rect x="70.5" y="132.6" width="2.5" height="2.5" fill="#3a6e66"/><rect x="209.1" y="188.5" width="2.5" height="2.5" fill="#978e3c"/><rect x="218.4" y="181.9" width="2.5" height="2.5" fill="#978e3c"/><rect x="168.1" y="168.2" width="2.5" height="2.5" fill="#978e3c"/><rect x="163.6" y="165.4" width="2.5" height="2.5" fill="#978e3c"/><rect x="57.4" y="126.1" width="2.5" height="2.5" fill="#3a6e66"/><rect x="163.1" y="166.0" width="2.5" height="2.5" fill="#978e3c"/><rect x="89.7" y="143.8" width="2.5" height="2.5" fill="#3d7363"/><rect x="268.6" y="209.0" width="2.5" height="2.5" fill="#978e3c"/><rect x="184.8" y="178.5" width="2.5" height="2.5" fill="#978e3c"/><rect x="229.6" y="194.5" width="2.5" height="2.5" fill="#978e3c"/><rect x="142.0" y="157.0" width="2.5" height="2.5" fill="#978e3c"/><rect x="190.8" y="178.5" width="2.5" height="2.5" fill="#978e3c"/><rect x="198.5" y="182.0" width="2.5" height="2.5" fill="#898c3d"/><rect x="155.6" y="165.4" width="2.5" height="2.5" fill="#978e3c"/><rect x="143.8" y="161.4" width="2.5" height="2.5" fill="#7c8a3e"/><rect x="237.0" y="195.1" width="2.5" height="2.5" fill="#978e3c"/><rect x="261.5" y="203.4" width="2.5" height="2.5" fill="#898c3d"/><rect x="186.1" y="170.2" width="2.5" height="2.5" fill="#978e3c"/><rect x="165.8" y="173.5" width="2.5" height="2.5" fill="#978e3c"/><rect x="114.0" y="149.5" width="2.5" height="2.5" fill="#978e3c"/><rect x="225.7" y="190.4" width="2.5" height="2.5" fill="#898c3d"/><rect x="81.7" y="132.1" width="2.5" height="2.5" fill="#3d7363"/><rect x="259.6" y="199.2" width="2.5" height="2.5" fill="#978e3c"/><rect x="146.8" y="155.9" width="2.5" height="2.5" fill="#978e3c"/><rect x="64.3" y="130.5" width="2.5" height="2.5" fill="#978e3c"/><rect x="259.7" y="204.3" width="2.5" height="2.5" fill="#7c8a3e"/><rect x="58.8" y="129.5" width="2.5" height="2.5" fill="#3d7363"/><rect x="125.3" y="159.4" width="2.5" height="2.5" fill="#61854e"/><rect x="144.0" y="161.3" width="2.5" height="2.5" fill="#7c8a3e"/><rect x="287.5" y="212.1" width="2.5" height="2.5" fill="#978e3c"/><rect x="215.4" y="186.4" width="2.5" height="2.5" fill="#978e3c"/><rect x="79.1" y="127.5" width="2.5" height="2.5" fill="#978e3c"/><rect x="224.8" y="188.8" width="2.5" height="2.5" fill="#978e3c"/><rect x="228.9" y="193.8" width="2.5" height="2.5" fill="#898c3d"/><rect x="254.2" y="341.1" width="2.5" height="2.5" fill="#978e3c"/><rect x="197.7" y="317.0" width="2.5" height="2.5" fill="#435468"/><rect x="180.8" y="311.2" width="2.5" height="2.5" fill="#3d7363"/><rect x="217.8" y="326.5" width="2.5" height="2.5" fill="#978e3c"/><rect x="185.7" y="313.6" width="2.5" height="2.5" fill="#435468"/><rect x="275.5" y="347.0" width="2.5" height="2.5" fill="#898c3d"/><rect x="237.5" y="335.4" width="2.5" height="2.5" fill="#7c8a3e"/><rect x="221.1" y="322.9" width="2.5" height="2.5" fill="#978e3c"/><rect x="277.6" y="341.8" width="2.5" height="2.5" fill="#978e3c"/><rect x="218.7" y="328.2" width="2.5" height="2.5" fill="#4a7c5b"/><rect x="209.1" y="321.0" width="2.5" height="2.5" fill="#3b6967"/><rect x="284.3" y="349.2" width="2.5" height="2.5" fill="#898c3d"/><rect x="258.3" y="344.2" width="2.5" height="2.5" fill="#978e3c"/><rect x="270.6" y="345.5" width="2.5" height="2.5" fill="#898c3d"/><rect x="215.9" y="323.0" width="2.5" height="2.5" fill="#435468"/><rect x="209.9" y="325.1" width="2.5" height="2.5" fill="#3e5f68"/><rect x="173.4" y="314.2" width="2.5" height="2.5" fill="#435468"/><rect x="241.7" y="327.9" width="2.5" height="2.5" fill="#978e3c"/><rect x="192.7" y="312.4" width="2.5" height="2.5" fill="#435468"/><rect x="157.2" y="301.7" width="2.5" height="2.5" fill="#435468"/><rect x="263.9" y="342.7" width="2.5" height="2.5" fill="#978e3c"/><rect x="273.1" y="344.7" width="2.5" height="2.5" fill="#6e8745"/><rect x="167.7" y="305.9" width="2.5" height="2.5" fill="#454e67"/><rect x="198.6" y="311.7" width="2.5" height="2.5" fill="#435468"/><rect x="211.0" y="322.7" width="2.5" height="2.5" fill="#3b6967"/><rect x="184.5" y="311.0" width="2.5" height="2.5" fill="#454e67"/><rect x="214.3" y="313.0" width="2.5" height="2.5" fill="#3e5f68"/><rect x="198.2" y="317.0" width="2.5" height="2.5" fill="#3b6967"/><rect x="167.5" y="304.3" width="2.5" height="2.5" fill="#3d7363"/><rect x="163.9" y="308.9" width="2.5" height="2.5" fill="#474865"/><rect x="246.0" y="336.8" width="2.5" height="2.5" fill="#978e3c"/><rect x="254.0" y="338.9" width="2.5" height="2.5" fill="#978e3c"/><rect x="241.4" y="335.9" width="2.5" height="2.5" fill="#978e3c"/><rect x="187.9" y="313.4" width="2.5" height="2.5" fill="#454e67"/><rect x="171.3" y="308.3" width="2.5" height="2.5" fill="#3d7363"/><rect x="187.0" y="304.7" width="2.5" height="2.5" fill="#454e67"/><rect x="179.4" y="303.4" width="2.5" height="2.5" fill="#3d7363"/><rect x="198.5" y="309.8" width="2.5" height="2.5" fill="#3e5f68"/><rect x="256.4" y="335.5" width="2.5" height="2.5" fill="#978e3c"/><rect x="183.3" y="310.8" width="2.5" height="2.5" fill="#3d7363"/><rect x="171.7" y="306.1" width="2.5" height="2.5" fill="#3b6967"/><rect x="250.9" y="338.3" width="2.5" height="2.5" fill="#7c8a3e"/><rect x="216.0" y="321.5" width="2.5" height="2.5" fill="#454e67"/><rect x="168.7" y="307.6" width="2.5" height="2.5" fill="#3d7363"/><rect x="239.2" y="332.3" width="2.5" height="2.5" fill="#3b6967"/><rect x="265.9" y="343.0" width="2.5" height="2.5" fill="#978e3c"/><rect x="167.5" y="312.2" width="2.5" height="2.5" fill="#3b6967"/><rect x="209.4" y="323.1" width="2.5" height="2.5" fill="#474865"/><rect x="200.2" y="321.5" width="2.5" height="2.5" fill="#435468"/><rect x="244.5" y="324.6" width="2.5" height="2.5" fill="#4a7c5b"/><rect x="265.4" y="337.6" width="2.5" height="2.5" fill="#6e8745"/><rect x="237.8" y="333.1" width="2.5" height="2.5" fill="#978e3c"/><rect x="238.3" y="327.8" width="2.5" height="2.5" fill="#4a7c5b"/><rect x="241.5" y="338.3" width="2.5" height="2.5" fill="#978e3c"/><rect x="226.4" y="326.5" width="2.5" height="2.5" fill="#7c8a3e"/><rect x="241.4" y="334.6" width="2.5" height="2.5" fill="#3b6967"/><rect x="229.6" y="328.8" width="2.5" height="2.5" fill="#7c8a3e"/><rect x="264.1" y="343.5" width="2.5" height="2.5" fill="#978e3c"/><rect x="191.4" y="310.9" width="2.5" height="2.5" fill="#435468"/><rect x="203.4" y="317.7" width="2.5" height="2.5" fill="#454e67"/><rect x="225.0" y="323.7" width="2.5" height="2.5" fill="#978e3c"/><rect x="288.2" y="347.2" width="2.5" height="2.5" fill="#978e3c"/><rect x="229.3" y="333.6" width="2.5" height="2.5" fill="#3b6967"/><rect x="174.3" y="309.3" width="2.5" height="2.5" fill="#3b6967"/><rect x="232.9" y="327.7" width="2.5" height="2.5" fill="#7c8a3e"/><rect x="193.1" y="311.4" width="2.5" height="2.5" fill="#474865"/><rect x="216.3" y="322.7" width="2.5" height="2.5" fill="#454e67"/><rect x="229.2" y="324.6" width="2.5" height="2.5" fill="#978e3c"/><rect x="164.3" y="306.9" width="2.5" height="2.5" fill="#3d7363"/><rect x="287.4" y="346.8" width="2.5" height="2.5" fill="#898c3d"/><rect x="234.0" y="334.8" width="2.5" height="2.5" fill="#7c8a3e"/><rect x="245.1" y="338.5" width="2.5" height="2.5" fill="#7c8a3e"/><rect x="191.1" y="307.2" width="2.5" height="2.5" fill="#435468"/><rect x="236.4" y="326.7" width="2.5" height="2.5" fill="#3b6967"/><rect x="218.5" y="317.9" width="2.5" height="2.5" fill="#3d7363"/><rect x="173.4" y="312.0" width="2.5" height="2.5" fill="#3d7363"/><rect x="266.6" y="345.6" width="2.5" height="2.5" fill="#978e3c"/><rect x="178.9" y="306.7" width="2.5" height="2.5" fill="#3b6967"/><rect x="217.4" y="326.0" width="2.5" height="2.5" fill="#454e67"/><rect x="209.0" y="323.6" width="2.5" height="2.5" fill="#3e5f68"/><rect x="225.2" y="325.7" width="2.5" height="2.5" fill="#7c8a3e"/><rect x="161.7" y="309.1" width="2.5" height="2.5" fill="#474865"/><rect x="251.2" y="336.4" width="2.5" height="2.5" fill="#978e3c"/><rect x="236.9" y="326.3" width="2.5" height="2.5" fill="#978e3c"/><rect x="199.9" y="323.6" width="2.5" height="2.5" fill="#454e67"/><rect x="258.0" y="332.3" width="2.5" height="2.5" fill="#898c3d"/><rect x="218.4" y="330.2" width="2.5" height="2.5" fill="#978e3c"/><rect x="265.2" y="340.0" width="2.5" height="2.5" fill="#978e3c"/><rect x="229.7" y="332.0" width="2.5" height="2.5" fill="#978e3c"/><rect x="226.1" y="323.7" width="2.5" height="2.5" fill="#978e3c"/><rect x="275.7" y="343.4" width="2.5" height="2.5" fill="#6e8745"/><rect x="252.5" y="337.1" width="2.5" height="2.5" fill="#898c3d"/><rect x="256.1" y="335.2" width="2.5" height="2.5" fill="#978e3c"/><rect x="187.0" y="317.9" width="2.5" height="2.5" fill="#3b6967"/><rect x="186.3" y="318.8" width="2.5" height="2.5" fill="#3b6967"/><rect x="250.5" y="327.2" width="2.5" height="2.5" fill="#978e3c"/><rect x="277.9" y="339.0" width="2.5" height="2.5" fill="#978e3c"/><rect x="272.8" y="341.3" width="2.5" height="2.5" fill="#898c3d"/><rect x="272.4" y="336.3" width="2.5" height="2.5" fill="#978e3c"/><rect x="240.9" y="335.3" width="2.5" height="2.5" fill="#978e3c"/><rect x="230.7" y="329.7" width="2.5" height="2.5" fill="#4a7c5b"/><rect x="173.5" y="306.9" width="2.5" height="2.5" fill="#454e67"/><rect x="233.5" y="325.8" width="2.5" height="2.5" fill="#7c8a3e"/><rect x="159.6" y="304.1" width="2.5" height="2.5" fill="#435468"/><rect x="162.7" y="310.1" width="2.5" height="2.5" fill="#3b6967"/><rect x="177.2" y="304.7" width="2.5" height="2.5" fill="#3d7363"/><rect x="233.3" y="330.1" width="2.5" height="2.5" fill="#7c8a3e"/><rect x="197.1" y="316.6" width="2.5" height="2.5" fill="#3b6967"/><rect x="175.2" y="309.7" width="2.5" height="2.5" fill="#435468"/><rect x="186.1" y="305.4" width="2.5" height="2.5" fill="#3d7363"/><rect x="273.8" y="346.0" width="2.5" height="2.5" fill="#898c3d"/><rect x="273.0" y="349.4" width="2.5" height="2.5" fill="#978e3c"/><rect x="177.0" y="315.5" width="2.5" height="2.5" fill="#435468"/><rect x="229.9" y="318.6" width="2.5" height="2.5" fill="#4a7c5b"/><rect x="181.6" y="311.8" width="2.5" height="2.5" fill="#474865"/><rect x="197.3" y="315.5" width="2.5" height="2.5" fill="#3e5f68"/><rect x="283.2" y="346.0" width="2.5" height="2.5" fill="#978e3c"/><rect x="199.3" y="321.3" width="2.5" height="2.5" fill="#3b6967"/><rect x="209.9" y="324.8" width="2.5" height="2.5" fill="#474865"/><rect x="248.1" y="340.6" width="2.5" height="2.5" fill="#4a7c5b"/><rect x="192.5" y="313.8" width="2.5" height="2.5" fill="#3e5f68"/><rect x="262.0" y="334.4" width="2.5" height="2.5" fill="#898c3d"/><rect x="262.9" y="337.5" width="2.5" height="2.5" fill="#978e3c"/><rect x="285.1" y="347.0" width="2.5" height="2.5" fill="#978e3c"/><rect x="244.7" y="332.1" width="2.5" height="2.5" fill="#3b6967"/><rect x="215.6" y="328.6" width="2.5" height="2.5" fill="#474865"/><rect x="216.4" y="318.1" width="2.5" height="2.5" fill="#474865"/><rect x="158.1" y="301.7" width="2.5" height="2.5" fill="#454e67"/><rect x="194.2" y="315.2" width="2.5" height="2.5" fill="#474865"/><rect x="176.0" y="315.2" width="2.5" height="2.5" fill="#435468"/><rect x="189.5" y="312.7" width="2.5" height="2.5" fill="#435468"/><rect x="259.0" y="343.2" width="2.5" height="2.5" fill="#978e3c"/><rect x="285.2" y="351.9" width="2.5" height="2.5" fill="#6e8745"/><rect x="156.8" y="303.0" width="2.5" height="2.5" fill="#3b6967"/><rect x="162.2" y="310.3" width="2.5" height="2.5" fill="#3e5f68"/><rect x="197.9" y="319.4" width="2.5" height="2.5" fill="#3b6967"/><rect x="261.0" y="334.0" width="2.5" height="2.5" fill="#978e3c"/><rect x="234.9" y="329.1" width="2.5" height="2.5" fill="#4a7c5b"/><rect x="173.8" y="302.5" width="2.5" height="2.5" fill="#454e67"/><rect x="257.5" y="340.0" width="2.5" height="2.5" fill="#978e3c"/><rect x="193.8" y="307.4" width="2.5" height="2.5" fill="#454e67"/><rect x="223.1" y="323.2" width="2.5" height="2.5" fill="#3b6967"/><rect x="182.9" y="312.6" width="2.5" height="2.5" fill="#3b6967"/><rect x="271.4" y="342.3" width="2.5" height="2.5" fill="#978e3c"/><rect x="201.1" y="313.3" width="2.5" height="2.5" fill="#3b6967"/><rect x="224.1" y="322.3" width="2.5" height="2.5" fill="#7c8a3e"/><rect x="268.7" y="343.5" width="2.5" height="2.5" fill="#978e3c"/><rect x="231.4" y="328.8" width="2.5" height="2.5" fill="#978e3c"/><rect x="233.2" y="328.0" width="2.5" height="2.5" fill="#3b6967"/><rect x="199.7" y="311.6" width="2.5" height="2.5" fill="#474865"/><rect x="247.2" y="336.8" width="2.5" height="2.5" fill="#7c8a3e"/><rect x="259.1" y="332.0" width="2.5" height="2.5" fill="#6e8745"/><rect x="168.0" y="307.1" width="2.5" height="2.5" fill="#3e5f68"/><rect x="190.3" y="311.6" width="2.5" height="2.5" fill="#3b6967"/><rect x="246.4" y="337.2" width="2.5" height="2.5" fill="#3b6967"/><rect x="200.6" y="311.2" width="2.5" height="2.5" fill="#3b6967"/><rect x="203.8" y="321.0" width="2.5" height="2.5" fill="#474865"/><rect x="171.2" y="313.5" width="2.5" height="2.5" fill="#454e67"/><rect x="285.5" y="350.2" width="2.5" height="2.5" fill="#978e3c"/><rect x="155.8" y="305.3" width="2.5" height="2.5" fill="#3b6967"/><rect x="272.9" y="345.6" width="2.5" height="2.5" fill="#898c3d"/><rect x="217.7" y="326.7" width="2.5" height="2.5" fill="#3b6967"/><rect x="285.1" y="344.5" width="2.5" height="2.5" fill="#978e3c"/><rect x="197.8" y="310.6" width="2.5" height="2.5" fill="#474865"/><rect x="229.2" y="327.8" width="2.5" height="2.5" fill="#4a7c5b"/><rect x="203.0" y="322.9" width="2.5" height="2.5" fill="#3e5f68"/><rect x="280.3" y="348.2" width="2.5" height="2.5" fill="#978e3c"/><rect x="210.2" y="319.6" width="2.5" height="2.5" fill="#3d7363"/><rect x="287.5" y="347.7" width="2.5" height="2.5" fill="#978e3c"/><rect x="219.4" y="318.8" width="2.5" height="2.5" fill="#3b6967"/><rect x="279.3" y="346.2" width="2.5" height="2.5" fill="#978e3c"/><rect x="183.6" y="315.4" width="2.5" height="2.5" fill="#3e5f68"/><rect x="188.4" y="315.2" width="2.5" height="2.5" fill="#3b6967"/><rect x="186.3" y="305.3" width="2.5" height="2.5" fill="#435468"/><rect x="234.7" y="329.8" width="2.5" height="2.5" fill="#978e3c"/><rect x="288.4" y="343.8" width="2.5" height="2.5" fill="#978e3c"/><rect x="269.7" y="343.0" width="2.5" height="2.5" fill="#978e3c"/><rect x="161.5" y="307.6" width="2.5" height="2.5" fill="#3e5f68"/><rect x="204.5" y="318.8" width="2.5" height="2.5" fill="#435468"/><rect x="253.9" y="337.1" width="2.5" height="2.5" fill="#6e8745"/><rect x="231.9" y="326.8" width="2.5" height="2.5" fill="#3b6967"/><rect x="205.1" y="316.8" width="2.5" height="2.5" fill="#435468"/><rect x="252.3" y="336.1" width="2.5" height="2.5" fill="#978e3c"/><rect x="252.4" y="333.6" width="2.5" height="2.5" fill="#3b6967"/><rect x="160.2" y="301.5" width="2.5" height="2.5" fill="#474865"/><rect x="267.9" y="344.9" width="2.5" height="2.5" fill="#6e8745"/><rect x="199.3" y="317.7" width="2.5" height="2.5" fill="#474865"/><rect x="198.3" y="311.8" width="2.5" height="2.5" fill="#454e67"/><rect x="187.3" y="315.1" width="2.5" height="2.5" fill="#454e67"/><rect x="173.4" y="308.5" width="2.5" height="2.5" fill="#435468"/><rect x="199.5" y="312.6" width="2.5" height="2.5" fill="#435468"/><rect x="223.9" y="328.1" width="2.5" height="2.5" fill="#978e3c"/><rect x="191.4" y="313.3" width="2.5" height="2.5" fill="#435468"/><rect x="274.1" y="337.4" width="2.5" height="2.5" fill="#898c3d"/><rect x="227.7" y="325.0" width="2.5" height="2.5" fill="#978e3c"/><rect x="270.3" y="342.8" width="2.5" height="2.5" fill="#978e3c"/><rect x="171.8" y="303.5" width="2.5" height="2.5" fill="#435468"/><rect x="160.5" y="307.5" width="2.5" height="2.5" fill="#474865"/><rect x="255.1" y="336.1" width="2.5" height="2.5" fill="#898c3d"/><rect x="243.5" y="332.7" width="2.5" height="2.5" fill="#3b6967"/><rect x="277.1" y="345.8" width="2.5" height="2.5" fill="#978e3c"/><rect x="280.5" y="351.8" width="2.5" height="2.5" fill="#898c3d"/><rect x="188.1" y="311.9" width="2.5" height="2.5" fill="#3b6967"/><rect x="173.1" y="306.5" width="2.5" height="2.5" fill="#3b6967"/><rect x="165.8" y="302.6" width="2.5" height="2.5" fill="#3b6967"/><rect x="248.4" y="336.8" width="2.5" height="2.5" fill="#4a7c5b"/><rect x="179.1" y="306.2" width="2.5" height="2.5" fill="#435468"/><rect x="201.9" y="320.7" width="2.5" height="2.5" fill="#3d7363"/><rect x="187.1" y="315.9" width="2.5" height="2.5" fill="#3b6967"/><rect x="261.7" y="341.2" width="2.5" height="2.5" fill="#6e8745"/><rect x="233.8" y="327.7" width="2.5" height="2.5" fill="#3b6967"/><rect x="276.7" y="339.4" width="2.5" height="2.5" fill="#978e3c"/><rect x="203.3" y="322.3" width="2.5" height="2.5" fill="#474865"/><rect x="205.8" y="321.0" width="2.5" height="2.5" fill="#454e67"/><rect x="196.8" y="314.5" width="2.5" height="2.5" fill="#474865"/><rect x="163.4" y="296.0" width="2.5" height="2.5" fill="#3e5f68"/><rect x="200.2" y="315.0" width="2.5" height="2.5" fill="#3d7363"/><rect x="272.5" y="345.4" width="2.5" height="2.5" fill="#6e8745"/><rect x="209.0" y="315.7" width="2.5" height="2.5" fill="#474865"/><rect x="230.4" y="334.4" width="2.5" height="2.5" fill="#4a7c5b"/><rect x="343.4" y="246.6" width="2.5" height="2.5" fill="#435468"/><rect x="352.2" y="236.7" width="2.5" height="2.5" fill="#3d7363"/><rect x="376.7" y="227.6" width="2.5" height="2.5" fill="#3b6967"/><rect x="368.8" y="233.4" width="2.5" height="2.5" fill="#474865"/><rect x="289.5" y="267.2" width="2.5" height="2.5" fill="#7c8a3e"/><rect x="321.1" y="249.8" width="2.5" height="2.5" fill="#978e3c"/><rect x="282.3" y="277.4" width="2.5" height="2.5" fill="#7c8a3e"/><rect x="337.9" y="239.1" width="2.5" height="2.5" fill="#3b6967"/><rect x="357.4" y="230.8" width="2.5" height="2.5" fill="#3d7363"/><rect x="330.8" y="250.2" width="2.5" height="2.5" fill="#978e3c"/><rect x="324.7" y="250.4" width="2.5" height="2.5" fill="#978e3c"/><rect x="333.5" y="249.7" width="2.5" height="2.5" fill="#3e5f68"/><rect x="281.8" y="268.9" width="2.5" height="2.5" fill="#898c3d"/><rect x="290.8" y="275.7" width="2.5" height="2.5" fill="#7c8a3e"/><rect x="372.7" y="219.2" width="2.5" height="2.5" fill="#435468"/><rect x="352.0" y="243.1" width="2.5" height="2.5" fill="#3b6967"/><rect x="283.0" y="281.2" width="2.5" height="2.5" fill="#978e3c"/><rect x="360.9" y="240.0" width="2.5" height="2.5" fill="#978e3c"/><rect x="280.7" y="278.8" width="2.5" height="2.5" fill="#978e3c"/><rect x="363.8" y="234.7" width="2.5" height="2.5" fill="#7c8a3e"/><rect x="304.5" y="261.3" width="2.5" height="2.5" fill="#978e3c"/><rect x="326.7" y="252.1" width="2.5" height="2.5" fill="#7c8a3e"/><rect x="290.0" y="272.4" width="2.5" height="2.5" fill="#978e3c"/><rect x="283.6" y="283.2" width="2.5" height="2.5" fill="#7c8a3e"/><rect x="352.5" y="234.6" width="2.5" height="2.5" fill="#978e3c"/><rect x="322.7" y="255.0" width="2.5" height="2.5" fill="#978e3c"/><rect x="348.5" y="231.2" width="2.5" height="2.5" fill="#978e3c"/><rect x="369.1" y="225.4" width="2.5" height="2.5" fill="#978e3c"/><rect x="309.1" y="263.6" width="2.5" height="2.5" fill="#898c3d"/><rect x="371.9" y="227.4" width="2.5" height="2.5" fill="#435468"/><rect x="359.5" y="235.8" width="2.5" height="2.5" fill="#3b6967"/><rect x="273.7" y="284.7" width="2.5" height="2.5" fill="#7c8a3e"/><rect x="368.6" y="235.6" width="2.5" height="2.5" fill="#435468"/><rect x="328.7" y="257.0" width="2.5" height="2.5" fill="#898c3d"/><rect x="363.1" y="231.3" width="2.5" height="2.5" fill="#7c8a3e"/><rect x="374.8" y="222.2" width="2.5" height="2.5" fill="#3b6967"/><rect x="270.4" y="282.8" width="2.5" height="2.5" fill="#898c3d"/><rect x="341.2" y="247.4" width="2.5" height="2.5" fill="#435468"/><rect x="344.2" y="243.5" width="2.5" height="2.5" fill="#7c8a3e"/><rect x="332.4" y="251.3" width="2.5" height="2.5" fill="#474865"/><rect x="286.4" y="282.6" width="2.5" height="2.5" fill="#898c3d"/><rect x="305.2" y="271.6" width="2.5" height="2.5" fill="#978e3c"/><rect x="375.0" y="222.4" width="2.5" height="2.5" fill="#3e5f68"/><rect x="360.1" y="226.9" width="2.5" height="2.5" fill="#978e3c"/><rect x="314.7" y="263.1" width="2.5" height="2.5" fill="#7c8a3e"/><rect x="311.6" y="266.0" width="2.5" height="2.5" fill="#7c8a3e"/><rect x="300.0" y="269.3" width="2.5" height="2.5" fill="#978e3c"/><rect x="307.3" y="265.3" width="2.5" height="2.5" fill="#7c8a3e"/><rect x="293.4" y="268.5" width="2.5" height="2.5" fill="#898c3d"/><rect x="370.7" y="225.7" width="2.5" height="2.5" fill="#474865"/><rect x="338.2" y="236.6" width="2.5" height="2.5" fill="#3b6967"/><rect x="292.0" y="275.2" width="2.5" height="2.5" fill="#7c8a3e"/><rect x="333.2" y="247.3" width="2.5" height="2.5" fill="#3b6967"/><rect x="305.4" y="265.2" width="2.5" height="2.5" fill="#7c8a3e"/><rect x="339.7" y="244.4" width="2.5" height="2.5" fill="#474865"/><rect x="343.9" y="249.0" width="2.5" height="2.5" fill="#435468"/><rect x="269.4" y="281.3" width="2.5" height="2.5" fill="#898c3d"/><rect x="312.7" y="264.6" width="2.5" height="2.5" fill="#898c3d"/><rect x="307.6" y="267.1" width="2.5" height="2.5" fill="#978e3c"/><rect x="324.9" y="246.0" width="2.5" height="2.5" fill="#978e3c"/><rect x="318.8" y="259.0" width="2.5" height="2.5" fill="#978e3c"/><rect x="312.5" y="267.7" width="2.5" height="2.5" fill="#898c3d"/><rect x="376.7" y="227.5" width="2.5" height="2.5" fill="#7c8a3e"/><rect x="334.1" y="240.3" width="2.5" height="2.5" fill="#3b6967"/><rect x="278.4" y="282.6" width="2.5" height="2.5" fill="#7c8a3e"/><rect x="343.0" y="247.7" width="2.5" height="2.5" fill="#3d7363"/><rect x="276.2" y="281.6" width="2.5" height="2.5" fill="#7c8a3e"/><rect x="316.2" y="259.4" width="2.5" height="2.5" fill="#978e3c"/><rect x="337.3" y="242.0" width="2.5" height="2.5" fill="#474865"/><rect x="372.9" y="216.7" width="2.5" height="2.5" fill="#7c8a3e"/><rect x="311.8" y="259.4" width="2.5" height="2.5" fill="#978e3c"/><rect x="321.7" y="252.9" width="2.5" height="2.5" fill="#978e3c"/><rect x="327.2" y="258.5" width="2.5" height="2.5" fill="#978e3c"/><rect x="289.2" y="278.3" width="2.5" height="2.5" fill="#898c3d"/><rect x="342.4" y="248.4" width="2.5" height="2.5" fill="#474865"/><rect x="315.5" y="258.0" width="2.5" height="2.5" fill="#978e3c"/><rect x="274.1" y="289.1" width="2.5" height="2.5" fill="#978e3c"/><rect x="277.8" y="272.6" width="2.5" height="2.5" fill="#7c8a3e"/><rect x="326.0" y="250.9" width="2.5" height="2.5" fill="#978e3c"/><rect x="301.6" y="266.4" width="2.5" height="2.5" fill="#978e3c"/><rect x="277.0" y="281.4" width="2.5" height="2.5" fill="#898c3d"/><rect x="303.6" y="272.0" width="2.5" height="2.5" fill="#978e3c"/><rect x="295.4" y="269.2" width="2.5" height="2.5" fill="#978e3c"/><rect x="332.8" y="249.8" width="2.5" height="2.5" fill="#435468"/><rect x="326.0" y="244.9" width="2.5" height="2.5" fill="#978e3c"/><rect x="356.9" y="237.4" width="2.5" height="2.5" fill="#3d7363"/><rect x="288.3" y="279.6" width="2.5" height="2.5" fill="#7c8a3e"/><rect x="335.2" y="246.7" width="2.5" height="2.5" fill="#978e3c"/><rect x="348.1" y="246.2" width="2.5" height="2.5" fill="#435468"/><rect x="288.3" y="279.9" width="2.5" height="2.5" fill="#978e3c"/><rect x="347.8" y="239.9" width="2.5" height="2.5" fill="#3d7363"/><rect x="334.7" y="245.5" width="2.5" height="2.5" fill="#3b6967"/><rect x="279.9" y="275.8" width="2.5" height="2.5" fill="#978e3c"/><rect x="314.1" y="266.8" width="2.5" height="2.5" fill="#898c3d"/><rect x="277.9" y="280.3" width="2.5" height="2.5" fill="#7c8a3e"/><rect x="305.6" y="266.7" width="2.5" height="2.5" fill="#7c8a3e"/><rect x="293.7" y="276.9" width="2.5" height="2.5" fill="#978e3c"/><rect x="330.2" y="250.3" width="2.5" height="2.5" fill="#978e3c"/><rect x="310.9" y="259.5" width="2.5" height="2.5" fill="#898c3d"/><rect x="295.9" y="276.8" width="2.5" height="2.5" fill="#978e3c"/><rect x="313.8" y="255.9" width="2.5" height="2.5" fill="#7c8a3e"/><rect x="305.5" y="265.3" width="2.5" height="2.5" fill="#978e3c"/><rect x="275.2" y="282.8" width="2.5" height="2.5" fill="#7c8a3e"/><rect x="327.6" y="250.7" width="2.5" height="2.5" fill="#7c8a3e"/><rect x="355.9" y="232.8" width="2.5" height="2.5" fill="#474865"/><rect x="300.7" y="261.4" width="2.5" height="2.5" fill="#7c8a3e"/><rect x="369.2" y="223.0" width="2.5" height="2.5" fill="#7c8a3e"/><rect x="270.2" y="284.2" width="2.5" height="2.5" fill="#7c8a3e"/><rect x="335.0" y="253.0" width="2.5" height="2.5" fill="#3e5f68"/><rect x="373.8" y="229.7" width="2.5" height="2.5" fill="#3e5f68"/><rect x="371.5" y="224.1" width="2.5" height="2.5" fill="#435468"/><rect x="331.6" y="242.0" width="2.5" height="2.5" fill="#3d7363"/><rect x="275.9" y="282.4" width="2.5" height="2.5" fill="#898c3d"/><rect x="276.1" y="283.4" width="2.5" height="2.5" fill="#978e3c"/><rect x="289.6" y="267.2" width="2.5" height="2.5" fill="#7c8a3e"/><rect x="337.1" y="242.4" width="2.5" height="2.5" fill="#3e5f68"/><rect x="312.0" y="259.5" width="2.5" height="2.5" fill="#978e3c"/><rect x="314.6" y="265.8" width="2.5" height="2.5" fill="#978e3c"/><rect x="357.8" y="233.0" width="2.5" height="2.5" fill="#978e3c"/><rect x="287.6" y="278.2" width="2.5" height="2.5" fill="#898c3d"/><rect x="340.9" y="251.3" width="2.5" height="2.5" fill="#474865"/><rect x="312.9" y="263.0" width="2.5" height="2.5" fill="#978e3c"/><rect x="330.8" y="255.7" width="2.5" height="2.5" fill="#978e3c"/><rect x="334.4" y="245.4" width="2.5" height="2.5" fill="#7c8a3e"/><rect x="349.9" y="238.9" width="2.5" height="2.5" fill="#7c8a3e"/><rect x="320.7" y="255.8" width="2.5" height="2.5" fill="#898c3d"/><rect x="345.0" y="249.1" width="2.5" height="2.5" fill="#474865"/><rect x="287.6" y="273.9" width="2.5" height="2.5" fill="#978e3c"/><rect x="316.7" y="258.3" width="2.5" height="2.5" fill="#7c8a3e"/><rect x="340.3" y="240.6" width="2.5" height="2.5" fill="#978e3c"/><rect x="280.9" y="275.8" width="2.5" height="2.5" fill="#978e3c"/><rect x="361.3" y="239.1" width="2.5" height="2.5" fill="#978e3c"/><rect x="309.0" y="266.0" width="2.5" height="2.5" fill="#978e3c"/><rect x="309.6" y="256.4" width="2.5" height="2.5" fill="#978e3c"/><rect x="368.6" y="229.7" width="2.5" height="2.5" fill="#3d7363"/><rect x="286.4" y="279.9" width="2.5" height="2.5" fill="#978e3c"/><rect x="285.9" y="275.2" width="2.5" height="2.5" fill="#7c8a3e"/><rect x="370.7" y="231.8" width="2.5" height="2.5" fill="#435468"/><rect x="343.4" y="247.5" width="2.5" height="2.5" fill="#7c8a3e"/><rect x="354.1" y="234.7" width="2.5" height="2.5" fill="#3d7363"/><rect x="355.0" y="242.0" width="2.5" height="2.5" fill="#435468"/><rect x="353.9" y="241.4" width="2.5" height="2.5" fill="#3e5f68"/><rect x="290.6" y="271.8" width="2.5" height="2.5" fill="#898c3d"/><rect x="310.7" y="263.8" width="2.5" height="2.5" fill="#7c8a3e"/><rect x="316.3" y="254.4" width="2.5" height="2.5" fill="#978e3c"/><rect x="319.9" y="253.9" width="2.5" height="2.5" fill="#7c8a3e"/><rect x="304.2" y="264.4" width="2.5" height="2.5" fill="#898c3d"/><rect x="305.9" y="261.5" width="2.5" height="2.5" fill="#7c8a3e"/><rect x="331.0" y="250.0" width="2.5" height="2.5" fill="#898c3d"/><rect x="310.6" y="263.3" width="2.5" height="2.5" fill="#978e3c"/><rect x="314.2" y="255.7" width="2.5" height="2.5" fill="#7c8a3e"/><rect x="365.4" y="226.7" width="2.5" height="2.5" fill="#3b6967"/><rect x="311.7" y="263.1" width="2.5" height="2.5" fill="#978e3c"/><rect x="342.9" y="245.1" width="2.5" height="2.5" fill="#3d7363"/><rect x="362.6" y="238.5" width="2.5" height="2.5" fill="#3d7363"/><rect x="287.2" y="276.6" width="2.5" height="2.5" fill="#7c8a3e"/><rect x="307.7" y="269.5" width="2.5" height="2.5" fill="#898c3d"/><rect x="358.4" y="241.5" width="2.5" height="2.5" fill="#474865"/><rect x="298.9" y="275.4" width="2.5" height="2.5" fill="#898c3d"/><rect x="285.5" y="283.1" width="2.5" height="2.5" fill="#978e3c"/><rect x="334.6" y="255.0" width="2.5" height="2.5" fill="#7c8a3e"/><rect x="301.9" y="261.0" width="2.5" height="2.5" fill="#978e3c"/><rect x="371.0" y="226.5" width="2.5" height="2.5" fill="#978e3c"/><rect x="357.0" y="231.7" width="2.5" height="2.5" fill="#3e5f68"/><rect x="280.7" y="277.2" width="2.5" height="2.5" fill="#898c3d"/><rect x="341.8" y="246.0" width="2.5" height="2.5" fill="#3e5f68"/><rect x="298.0" y="272.3" width="2.5" height="2.5" fill="#898c3d"/><rect x="274.2" y="286.2" width="2.5" height="2.5" fill="#898c3d"/><rect x="371.3" y="229.5" width="2.5" height="2.5" fill="#978e3c"/><rect x="362.8" y="235.4" width="2.5" height="2.5" fill="#978e3c"/><rect x="286.3" y="282.1" width="2.5" height="2.5" fill="#978e3c"/><rect x="328.4" y="255.7" width="2.5" height="2.5" fill="#898c3d"/><rect x="299.5" y="261.4" width="2.5" height="2.5" fill="#978e3c"/><rect x="322.3" y="258.3" width="2.5" height="2.5" fill="#898c3d"/><rect x="307.1" y="265.1" width="2.5" height="2.5" fill="#898c3d"/><rect x="332.5" y="255.2" width="2.5" height="2.5" fill="#898c3d"/><rect x="366.1" y="234.9" width="2.5" height="2.5" fill="#3d7363"/><rect x="371.0" y="229.7" width="2.5" height="2.5" fill="#7c8a3e"/><rect x="348.9" y="239.7" width="2.5" height="2.5" fill="#3d7363"/><rect x="372.4" y="226.7" width="2.5" height="2.5" fill="#435468"/><rect x="374.1" y="222.3" width="2.5" height="2.5" fill="#474865"/><rect x="373.7" y="232.7" width="2.5" height="2.5" fill="#7c8a3e"/><rect x="279.2" y="285.2" width="2.5" height="2.5" fill="#978e3c"/><rect x="316.7" y="259.3" width="2.5" height="2.5" fill="#978e3c"/><rect x="277.9" y="278.4" width="2.5" height="2.5" fill="#978e3c"/><rect x="361.5" y="227.1" width="2.5" height="2.5" fill="#474865"/><rect x="313.5" y="258.4" width="2.5" height="2.5" fill="#7c8a3e"/><rect x="272.8" y="283.5" width="2.5" height="2.5" fill="#978e3c"/><rect x="283.5" y="276.1" width="2.5" height="2.5" fill="#898c3d"/><rect x="371.3" y="230.7" width="2.5" height="2.5" fill="#3d7363"/><rect x="373.8" y="232.7" width="2.5" height="2.5" fill="#978e3c"/><rect x="270.1" y="281.1" width="2.5" height="2.5" fill="#7c8a3e"/><rect x="356.8" y="241.0" width="2.5" height="2.5" fill="#3d7363"/><rect x="303.3" y="265.8" width="2.5" height="2.5" fill="#978e3c"/><rect x="274.8" y="272.9" width="2.5" height="2.5" fill="#978e3c"/><rect x="280.7" y="277.6" width="2.5" height="2.5" fill="#898c3d"/><rect x="362.8" y="232.8" width="2.5" height="2.5" fill="#474865"/><rect x="285.4" y="275.9" width="2.5" height="2.5" fill="#978e3c"/><rect x="340.9" y="238.8" width="2.5" height="2.5" fill="#978e3c"/><rect x="341.0" y="243.7" width="2.5" height="2.5" fill="#474865"/><circle cx="65.9" cy="105.4" r="1.44" fill="#451264" stroke="#1c1c1c" stroke-width="0.65"/><circle cx="65.6" cy="107.6" r="1.44" fill="#451264" stroke="#1c1c1c" stroke-width="0.65"/><circle cx="74.5" cy="106.5" r="1.44" fill="#3a508a" stroke="#1c1c1c" stroke-width="0.65"/><circle cx="72.3" cy="108.3" r="1.44" fill="#3a508a" stroke="#1c1c1c" stroke-width="0.65"/><circle cx="76.8" cy="109.1" r="1.44" fill="#3a508a" stroke="#1c1c1c" stroke-width="0.65"/><circle cx="80.5" cy="105.7" r="1.44" fill="#451264" stroke="#1c1c1c" stroke-width="0.65"/><circle cx="80.5" cy="109.8" r="1.44" fill="#451264" stroke="#1c1c1c" stroke-width="0.65"/><circle cx="82.5" cy="109.0" r="1.44" fill="#25838d" stroke="#1c1c1c" stroke-width="0.65"/><circle cx="87.9" cy="105.4" r="1.44" fill="#451264" stroke="#1c1c1c" stroke-width="0.65"/><circle cx="86.4" cy="107.6" r="1.44" fill="#451264" stroke="#1c1c1c" stroke-width="0.65"/><circle cx="93.8" cy="106.1" r="1.44" fill="#3a508a" stroke="#1c1c1c" stroke-width="0.65"/><circle cx="96.4" cy="107.6" r="1.44" fill="#451264" stroke="#1c1c1c" stroke-width="0.65"/><circle cx="100.1" cy="104.2" r="1.44" fill="#451264" stroke="#1c1c1c" stroke-width="0.65"/><circle cx="99.8" cy="106.8" r="1.44" fill="#472474" stroke="#1c1c1c" stroke-width="0.65"/><circle cx="106.8" cy="102.4" r="1.44" fill="#451264" stroke="#1c1c1c" stroke-width="0.65"/><circle cx="110.9" cy="104.2" r="1.44" fill="#451264" stroke="#1c1c1c" stroke-width="0.65"/><circle cx="115.3" cy="104.6" r="1.44" fill="#451264" stroke="#1c1c1c" stroke-width="0.65"/><circle cx="114.6" cy="107.6" r="1.44" fill="#2a778e" stroke="#1c1c1c" stroke-width="0.65"/><circle cx="120.5" cy="109.4" r="1.44" fill="#451264" stroke="#1c1c1c" stroke-width="0.65"/><circle cx="97.5" cy="110.5" r="1.44" fill="#25838d" stroke="#1c1c1c" stroke-width="0.65"/><circle cx="102.0" cy="109.8" r="1.44" fill="#25838d" stroke="#1c1c1c" stroke-width="0.65"/><circle cx="105.0" cy="111.3" r="1.44" fill="#25838d" stroke="#1c1c1c" stroke-width="0.65"/><circle cx="107.9" cy="109.1" r="1.44" fill="#451264" stroke="#1c1c1c" stroke-width="0.65"/><circle cx="109.4" cy="112.4" r="1.44" fill="#287c8e" stroke="#1c1c1c" stroke-width="0.65"/><circle cx="99.0" cy="113.5" r="1.44" fill="#25838d" stroke="#1c1c1c" stroke-width="0.65"/><circle cx="102.7" cy="114.3" r="1.44" fill="#27a782" stroke="#1c1c1c" stroke-width="0.65"/><circle cx="90.1" cy="111.7" r="1.44" fill="#25838d" stroke="#1c1c1c" stroke-width="0.65"/><circle cx="83.4" cy="113.1" r="1.44" fill="#27a782" stroke="#1c1c1c" stroke-width="0.65"/><circle cx="87.9" cy="114.6" r="1.44" fill="#27a782" stroke="#1c1c1c" stroke-width="0.65"/><circle cx="91.6" cy="115.0" r="1.44" fill="#27a782" stroke="#1c1c1c" stroke-width="0.65"/><circle cx="72.7" cy="115.7" r="1.44" fill="#7cd14f" stroke="#1c1c1c" stroke-width="0.65"/><circle cx="77.5" cy="117.6" r="1.44" fill="#fde725" stroke="#1c1c1c" stroke-width="0.65"/><circle cx="84.2" cy="118.3" r="1.44" fill="#fde725" stroke="#1c1c1c" stroke-width="0.65"/><circle cx="81.6" cy="120.2" r="1.44" fill="#27a782" stroke="#1c1c1c" stroke-width="0.65"/><circle cx="90.9" cy="122.0" r="1.44" fill="#27a782" stroke="#1c1c1c" stroke-width="0.65"/><circle cx="95.3" cy="120.6" r="1.44" fill="#22908b" stroke="#1c1c1c" stroke-width="0.65"/><circle cx="96.8" cy="122.8" r="1.44" fill="#fde725" stroke="#1c1c1c" stroke-width="0.65"/><circle cx="104.2" cy="119.4" r="1.44" fill="#25838d" stroke="#1c1c1c" stroke-width="0.65"/><circle cx="107.2" cy="119.8" r="1.44" fill="#fde725" stroke="#1c1c1c" stroke-width="0.65"/><circle cx="111.6" cy="117.2" r="1.44" fill="#2bac7f" stroke="#1c1c1c" stroke-width="0.65"/><circle cx="107.2" cy="122.4" r="1.44" fill="#fde725" stroke="#1c1c1c" stroke-width="0.65"/><circle cx="103.5" cy="125.4" r="1.44" fill="#fde725" stroke="#1c1c1c" stroke-width="0.65"/><circle cx="108.7" cy="124.6" r="1.44" fill="#fde725" stroke="#1c1c1c" stroke-width="0.65"/><circle cx="110.9" cy="127.2" r="1.44" fill="#fde725" stroke="#1c1c1c" stroke-width="0.65"/><circle cx="104.6" cy="127.2" r="1.44" fill="#fde725" stroke="#1c1c1c" stroke-width="0.65"/><circle cx="110.2" cy="129.8" r="1.44" fill="#fde725" stroke="#1c1c1c" stroke-width="0.65"/><circle cx="116.5" cy="122.0" r="1.44" fill="#fde725" stroke="#1c1c1c" stroke-width="0.65"/><circle cx="119.4" cy="128.4" r="1.44" fill="#31b37b" stroke="#1c1c1c" stroke-width="0.65"/><circle cx="119.4" cy="132.8" r="1.44" fill="#fde725" stroke="#1c1c1c" stroke-width="0.65"/><circle cx="140.0" cy="124.0" r="1.44" fill="#31b37b" stroke="#1c1c1c" stroke-width="0.65"/><circle cx="143.0" cy="140.4" r="1.44" fill="#fde725" stroke="#1c1c1c" stroke-width="0.65"/><circle cx="171.0" cy="147.8" r="1.44" fill="#fde725" stroke="#1c1c1c" stroke-width="0.65"/><circle cx="207.4" cy="164.0" r="1.44" fill="#fde725" stroke="#1c1c1c" stroke-width="0.65"/><circle cx="220.2" cy="165.6" r="1.44" fill="#fde725" stroke="#1c1c1c" stroke-width="0.65"/><circle cx="257.3" cy="185.0" r="1.44" fill="#fde725" stroke="#1c1c1c" stroke-width="0.65"/><circle cx="295.9" cy="188.5" r="1.44" fill="#fde725" stroke="#1c1c1c" stroke-width="0.65"/><circle cx="292.0" cy="216.0" r="1.44" fill="#fde725" stroke="#1c1c1c" stroke-width="0.65"/><circle cx="294.0" cy="218.0" r="1.44" fill="#fde725" stroke="#1c1c1c" stroke-width="0.65"/><circle cx="296.0" cy="220.0" r="1.44" fill="#fde725" stroke="#1c1c1c" stroke-width="0.65"/><circle cx="299.0" cy="219.0" r="1.44" fill="#fde725" stroke="#1c1c1c" stroke-width="0.65"/><circle cx="300.0" cy="222.0" r="1.44" fill="#fde725" stroke="#1c1c1c" stroke-width="0.65"/><circle cx="302.0" cy="221.0" r="1.44" fill="#fde725" stroke="#1c1c1c" stroke-width="0.65"/><circle cx="303.0" cy="224.0" r="1.44" fill="#fde725" stroke="#1c1c1c" stroke-width="0.65"/><circle cx="305.0" cy="220.0" r="1.44" fill="#fde725" stroke="#1c1c1c" stroke-width="0.65"/><circle cx="306.0" cy="226.0" r="1.44" fill="#fde725" stroke="#1c1c1c" stroke-width="0.65"/><circle cx="308.0" cy="227.0" r="1.44" fill="#fde725" stroke="#1c1c1c" stroke-width="0.65"/><circle cx="310.0" cy="229.0" r="1.44" fill="#fde725" stroke="#1c1c1c" stroke-width="0.65"/><circle cx="312.0" cy="231.0" r="1.44" fill="#fde725" stroke="#1c1c1c" stroke-width="0.65"/><circle cx="311.0" cy="234.0" r="1.44" fill="#fde725" stroke="#1c1c1c" stroke-width="0.65"/><circle cx="314.0" cy="233.0" r="1.44" fill="#fde725" stroke="#1c1c1c" stroke-width="0.65"/><circle cx="316.0" cy="235.0" r="1.44" fill="#fde725" stroke="#1c1c1c" stroke-width="0.65"/><circle cx="318.0" cy="237.0" r="1.44" fill="#fde725" stroke="#1c1c1c" stroke-width="0.65"/><circle cx="320.0" cy="236.0" r="1.44" fill="#fde725" stroke="#1c1c1c" stroke-width="0.65"/><circle cx="321.0" cy="239.0" r="1.44" fill="#fde725" stroke="#1c1c1c" stroke-width="0.65"/><circle cx="323.0" cy="238.0" r="1.44" fill="#25838d" stroke="#1c1c1c" stroke-width="0.65"/><circle cx="327.0" cy="237.0" r="1.44" fill="#22908b" stroke="#1c1c1c" stroke-width="0.65"/><circle cx="330.0" cy="237.0" r="1.44" fill="#fde725" stroke="#1c1c1c" stroke-width="0.65"/><circle cx="346.0" cy="210.0" r="1.44" fill="#fde725" stroke="#1c1c1c" stroke-width="0.65"/><circle cx="357.0" cy="220.0" r="1.44" fill="#25838d" stroke="#1c1c1c" stroke-width="0.65"/><circle cx="338.0" cy="231.0" r="1.44" fill="#25838d" stroke="#1c1c1c" stroke-width="0.65"/><circle cx="309.0" cy="248.0" r="1.44" fill="#fde725" stroke="#1c1c1c" stroke-width="0.65"/><circle cx="295.0" cy="254.0" r="1.44" fill="#fde725" stroke="#1c1c1c" stroke-width="0.65"/><circle cx="168.0" cy="241.0" r="1.44" fill="#27a782" stroke="#1c1c1c" stroke-width="0.65"/><circle cx="225.0" cy="260.0" r="1.44" fill="#27a782" stroke="#1c1c1c" stroke-width="0.65"/><circle cx="243.0" cy="260.0" r="1.44" fill="#2bac7f" stroke="#1c1c1c" stroke-width="0.65"/><circle cx="237.0" cy="288.0" r="1.44" fill="#fde725" stroke="#1c1c1c" stroke-width="0.65"/><circle cx="250.0" cy="293.0" r="1.44" fill="#fde725" stroke="#1c1c1c" stroke-width="0.65"/><circle cx="252.0" cy="297.0" r="1.44" fill="#fde725" stroke="#1c1c1c" stroke-width="0.65"/><circle cx="254.0" cy="300.0" r="1.44" fill="#fde725" stroke="#1c1c1c" stroke-width="0.65"/><circle cx="251.0" cy="302.0" r="1.44" fill="#fde725" stroke="#1c1c1c" stroke-width="0.65"/><circle cx="256.0" cy="295.0" r="1.44" fill="#fde725" stroke="#1c1c1c" stroke-width="0.65"/><circle cx="258.0" cy="299.0" r="1.44" fill="#fde725" stroke="#1c1c1c" stroke-width="0.65"/><circle cx="260.0" cy="302.0" r="1.44" fill="#fde725" stroke="#1c1c1c" stroke-width="0.65"/><circle cx="259.0" cy="293.0" r="1.44" fill="#fde725" stroke="#1c1c1c" stroke-width="0.65"/><circle cx="262.0" cy="298.0" r="1.44" fill="#fde725" stroke="#1c1c1c" stroke-width="0.65"/><circle cx="264.0" cy="301.0" r="1.44" fill="#fde725" stroke="#1c1c1c" stroke-width="0.65"/><circle cx="266.0" cy="297.0" r="1.44" fill="#fde725" stroke="#1c1c1c" stroke-width="0.65"/><circle cx="268.0" cy="300.0" r="1.44" fill="#fde725" stroke="#1c1c1c" stroke-width="0.65"/><circle cx="257.0" cy="305.0" r="1.44" fill="#fde725" stroke="#1c1c1c" stroke-width="0.65"/><circle cx="254.0" cy="305.0" r="1.44" fill="#fde725" stroke="#1c1c1c" stroke-width="0.65"/><circle cx="261.0" cy="306.0" r="1.44" fill="#fde725" stroke="#1c1c1c" stroke-width="0.65"/><circle cx="264.0" cy="292.0" r="1.44" fill="#fde725" stroke="#1c1c1c" stroke-width="0.65"/><circle cx="248.0" cy="299.0" r="1.44" fill="#fde725" stroke="#1c1c1c" stroke-width="0.65"/><circle cx="225.0" cy="304.0" r="1.44" fill="#fde725" stroke="#1c1c1c" stroke-width="0.65"/><circle cx="231.0" cy="303.0" r="1.44" fill="#2bac7f" stroke="#1c1c1c" stroke-width="0.65"/><circle cx="240.0" cy="302.0" r="1.44" fill="#fde725" stroke="#1c1c1c" stroke-width="0.65"/><circle cx="240.0" cy="307.0" r="1.44" fill="#fde725" stroke="#1c1c1c" stroke-width="0.65"/><circle cx="243.0" cy="309.0" r="1.44" fill="#fde725" stroke="#1c1c1c" stroke-width="0.65"/><circle cx="249.0" cy="312.0" r="1.44" fill="#fde725" stroke="#1c1c1c" stroke-width="0.65"/><circle cx="252.0" cy="315.0" r="1.44" fill="#fde725" stroke="#1c1c1c" stroke-width="0.65"/><circle cx="256.0" cy="316.0" r="1.44" fill="#fde725" stroke="#1c1c1c" stroke-width="0.65"/><circle cx="241.0" cy="314.0" r="1.44" fill="#27a782" stroke="#1c1c1c" stroke-width="0.65"/><circle cx="243.0" cy="319.0" r="1.44" fill="#fde725" stroke="#1c1c1c" stroke-width="0.65"/><circle cx="233.0" cy="318.0" r="1.44" fill="#fde725" stroke="#1c1c1c" stroke-width="0.65"/><circle cx="213.0" cy="304.0" r="1.44" fill="#25838d" stroke="#1c1c1c" stroke-width="0.65"/><circle cx="280.0" cy="311.0" r="1.44" fill="#2bac7f" stroke="#1c1c1c" stroke-width="0.65"/><circle cx="277.0" cy="325.0" r="1.44" fill="#fde725" stroke="#1c1c1c" stroke-width="0.65"/><circle cx="300.0" cy="332.0" r="1.44" fill="#fde725" stroke="#1c1c1c" stroke-width="0.65"/><circle cx="300.0" cy="332.0" r="1.44" fill="#fde725" stroke="#1c1c1c" stroke-width="0.65"/><circle cx="315.0" cy="338.0" r="1.44" fill="#fde725" stroke="#1c1c1c" stroke-width="0.65"/><circle cx="330.0" cy="331.0" r="1.44" fill="#25838d" stroke="#1c1c1c" stroke-width="0.65"/><circle cx="361.0" cy="342.0" r="1.44" fill="#fde725" stroke="#1c1c1c" stroke-width="0.65"/><circle cx="325.0" cy="347.0" r="1.44" fill="#fde725" stroke="#1c1c1c" stroke-width="0.65"/><circle cx="340.0" cy="350.0" r="1.44" fill="#fde725" stroke="#1c1c1c" stroke-width="0.65"/><circle cx="318.0" cy="351.0" r="1.44" fill="#fde725" stroke="#1c1c1c" stroke-width="0.65"/><circle cx="287.0" cy="366.0" r="1.44" fill="#44337d" stroke="#1c1c1c" stroke-width="0.65"/><circle cx="311.0" cy="366.0" r="1.44" fill="#3f4285" stroke="#1c1c1c" stroke-width="0.65"/><circle cx="322.0" cy="366.0" r="1.44" fill="#27a782" stroke="#1c1c1c" stroke-width="0.65"/><circle cx="323.0" cy="233.3" r="1.44" fill="#fde725" stroke="#1c1c1c" stroke-width="0.65"/><circle cx="322.0" cy="229.3" r="1.44" fill="#fde725" stroke="#1c1c1c" stroke-width="0.65"/><circle cx="316.0" cy="227.6" r="1.44" fill="#fde725" stroke="#1c1c1c" stroke-width="0.65"/><circle cx="309.4" cy="227.9" r="1.44" fill="#fde725" stroke="#1c1c1c" stroke-width="0.65"/><circle cx="294.6" cy="219.2" r="1.44" fill="#fde725" stroke="#1c1c1c" stroke-width="0.65"/><circle cx="298.9" cy="218.5" r="1.44" fill="#fde725" stroke="#1c1c1c" stroke-width="0.65"/><circle cx="316.8" cy="231.1" r="1.44" fill="#fde725" stroke="#1c1c1c" stroke-width="0.65"/><circle cx="303.4" cy="224.4" r="1.44" fill="#fde725" stroke="#1c1c1c" stroke-width="0.65"/><circle cx="319.6" cy="230.5" r="1.44" fill="#fde725" stroke="#1c1c1c" stroke-width="0.65"/><circle cx="328.5" cy="235.6" r="1.44" fill="#fde725" stroke="#1c1c1c" stroke-width="0.65"/><circle cx="324.8" cy="233.8" r="1.44" fill="#fde725" stroke="#1c1c1c" stroke-width="0.65"/><circle cx="320.7" cy="234.3" r="1.44" fill="#fde725" stroke="#1c1c1c" stroke-width="0.65"/><circle cx="311.4" cy="227.5" r="1.44" fill="#fde725" stroke="#1c1c1c" stroke-width="0.65"/><circle cx="322.8" cy="234.5" r="1.44" fill="#fde725" stroke="#1c1c1c" stroke-width="0.65"/><circle cx="320.3" cy="233.6" r="1.44" fill="#fde725" stroke="#1c1c1c" stroke-width="0.65"/><circle cx="314.2" cy="230.4" r="1.44" fill="#fde725" stroke="#1c1c1c" stroke-width="0.65"/><circle cx="296.3" cy="218.1" r="1.44" fill="#fde725" stroke="#1c1c1c" stroke-width="0.65"/><circle cx="314.5" cy="226.8" r="1.44" fill="#fde725" stroke="#1c1c1c" stroke-width="0.65"/><circle cx="306.6" cy="225.8" r="1.44" fill="#fde725" stroke="#1c1c1c" stroke-width="0.65"/><circle cx="310.9" cy="226.2" r="1.44" fill="#fde725" stroke="#1c1c1c" stroke-width="0.65"/><circle cx="307.3" cy="222.7" r="1.44" fill="#fde725" stroke="#1c1c1c" stroke-width="0.65"/><circle cx="310.4" cy="224.9" r="1.44" fill="#fde725" stroke="#1c1c1c" stroke-width="0.65"/><circle cx="326.3" cy="238.1" r="1.44" fill="#fde725" stroke="#1c1c1c" stroke-width="0.65"/><circle cx="328.7" cy="237.7" r="1.44" fill="#fde725" stroke="#1c1c1c" stroke-width="0.65"/><circle cx="322.1" cy="233.2" r="1.44" fill="#fde725" stroke="#1c1c1c" stroke-width="0.65"/><circle cx="312.5" cy="231.0" r="1.44" fill="#fde725" stroke="#1c1c1c" stroke-width="0.65"/><circle cx="318.3" cy="234.8" r="1.44" fill="#fde725" stroke="#1c1c1c" stroke-width="0.65"/><circle cx="316.1" cy="228.3" r="1.44" fill="#fde725" stroke="#1c1c1c" stroke-width="0.65"/><circle cx="310.0" cy="226.8" r="1.44" fill="#fde725" stroke="#1c1c1c" stroke-width="0.65"/><circle cx="328.7" cy="236.6" r="1.44" fill="#fde725" stroke="#1c1c1c" stroke-width="0.65"/><circle cx="294.8" cy="356.2" r="1.44" fill="#1f9c89" stroke="#1c1c1c" stroke-width="0.65"/><circle cx="360.2" cy="364.9" r="1.44" fill="#1f9c89" stroke="#1c1c1c" stroke-width="0.65"/><circle cx="336.0" cy="361.9" r="1.44" fill="#27a782" stroke="#1c1c1c" stroke-width="0.65"/><circle cx="355.8" cy="355.9" r="1.44" fill="#27a782" stroke="#1c1c1c" stroke-width="0.65"/><circle cx="292.8" cy="361.5" r="1.44" fill="#fde725" stroke="#1c1c1c" stroke-width="0.65"/><circle cx="309.1" cy="359.8" r="1.44" fill="#27a782" stroke="#1c1c1c" stroke-width="0.65"/><circle cx="290.4" cy="353.9" r="1.44" fill="#27a782" stroke="#1c1c1c" stroke-width="0.65"/><circle cx="348.9" cy="360.4" r="1.44" fill="#fde725" stroke="#1c1c1c" stroke-width="0.65"/><circle cx="367.2" cy="363.2" r="1.44" fill="#1f9c89" stroke="#1c1c1c" stroke-width="0.65"/><circle cx="369.9" cy="363.5" r="1.44" fill="#fde725" stroke="#1c1c1c" stroke-width="0.65"/><circle cx="316.5" cy="353.3" r="1.44" fill="#27a782" stroke="#1c1c1c" stroke-width="0.65"/><circle cx="349.6" cy="363.4" r="1.44" fill="#fde725" stroke="#1c1c1c" stroke-width="0.65"/><circle cx="310.1" cy="362.5" r="1.44" fill="#bcde2a" stroke="#1c1c1c" stroke-width="0.65"/><circle cx="325.8" cy="357.4" r="1.44" fill="#27a782" stroke="#1c1c1c" stroke-width="0.65"/><circle cx="305.8" cy="358.2" r="1.44" fill="#fde725" stroke="#1c1c1c" stroke-width="0.65"/><circle cx="340.2" cy="357.9" r="1.44" fill="#bcde2a" stroke="#1c1c1c" stroke-width="0.65"/><circle cx="340.0" cy="354.1" r="1.44" fill="#1f9c89" stroke="#1c1c1c" stroke-width="0.65"/><circle cx="340.3" cy="359.6" r="1.44" fill="#27a782" stroke="#1c1c1c" stroke-width="0.65"/><circle cx="344.6" cy="359.1" r="1.44" fill="#27a782" stroke="#1c1c1c" stroke-width="0.65"/><circle cx="361.7" cy="353.9" r="1.44" fill="#fde725" stroke="#1c1c1c" stroke-width="0.65"/><circle cx="313.3" cy="361.7" r="1.44" fill="#1f9c89" stroke="#1c1c1c" stroke-width="0.65"/><circle cx="324.7" cy="360.8" r="1.44" fill="#fde725" stroke="#1c1c1c" stroke-width="0.65"/><circle cx="338.3" cy="354.0" r="1.44" fill="#45bd6f" stroke="#1c1c1c" stroke-width="0.65"/><circle cx="335.2" cy="357.7" r="1.44" fill="#27a782" stroke="#1c1c1c" stroke-width="0.65"/><circle cx="317.2" cy="358.1" r="1.44" fill="#fde725" stroke="#1c1c1c" stroke-width="0.65"/><circle cx="339.3" cy="355.7" r="1.44" fill="#27a782" stroke="#1c1c1c" stroke-width="0.65"/><circle cx="313.6" cy="364.5" r="1.44" fill="#27a782" stroke="#1c1c1c" stroke-width="0.65"/><circle cx="293.9" cy="360.0" r="1.44" fill="#fde725" stroke="#1c1c1c" stroke-width="0.65"/><circle cx="357.7" cy="357.7" r="1.44" fill="#45bd6f" stroke="#1c1c1c" stroke-width="0.65"/><circle cx="350.2" cy="359.9" r="1.44" fill="#bcde2a" stroke="#1c1c1c" stroke-width="0.65"/><circle cx="310.0" cy="361.2" r="1.44" fill="#27a782" stroke="#1c1c1c" stroke-width="0.65"/><circle cx="333.6" cy="364.8" r="1.44" fill="#fde725" stroke="#1c1c1c" stroke-width="0.65"/><circle cx="350.7" cy="360.0" r="1.44" fill="#fde725" stroke="#1c1c1c" stroke-width="0.65"/><circle cx="311.5" cy="359.8" r="1.44" fill="#1f9c89" stroke="#1c1c1c" stroke-width="0.65"/><circle cx="315.8" cy="364.1" r="1.44" fill="#1f9c89" stroke="#1c1c1c" stroke-width="0.65"/><circle cx="343.4" cy="356.5" r="1.44" fill="#27a782" stroke="#1c1c1c" stroke-width="0.65"/><circle cx="344.4" cy="354.2" r="1.44" fill="#fde725" stroke="#1c1c1c" stroke-width="0.65"/><circle cx="326.7" cy="359.4" r="1.44" fill="#1f9c89" stroke="#1c1c1c" stroke-width="0.65"/><circle cx="335.7" cy="364.4" r="1.44" fill="#45bd6f" stroke="#1c1c1c" stroke-width="0.65"/><circle cx="324.5" cy="353.6" r="1.44" fill="#fde725" stroke="#1c1c1c" stroke-width="0.65"/><circle cx="313.6" cy="361.3" r="1.44" fill="#45bd6f" stroke="#1c1c1c" stroke-width="0.65"/><circle cx="356.9" cy="357.6" r="1.44" fill="#bcde2a" stroke="#1c1c1c" stroke-width="0.65"/><circle cx="301.0" cy="359.9" r="1.44" fill="#fde725" stroke="#1c1c1c" stroke-width="0.65"/><circle cx="333.2" cy="357.8" r="1.44" fill="#27a782" stroke="#1c1c1c" stroke-width="0.65"/><circle cx="301.2" cy="356.7" r="1.44" fill="#fde725" stroke="#1c1c1c" stroke-width="0.65"/><circle cx="305.9" cy="353.3" r="1.44" fill="#fde725" stroke="#1c1c1c" stroke-width="0.65"/><circle cx="341.2" cy="353.3" r="1.44" fill="#fde725" stroke="#1c1c1c" stroke-width="0.65"/><circle cx="310.7" cy="358.9" r="1.44" fill="#fde725" stroke="#1c1c1c" stroke-width="0.65"/><circle cx="343.6" cy="356.5" r="1.44" fill="#45bd6f" stroke="#1c1c1c" stroke-width="0.65"/><circle cx="306.3" cy="361.4" r="1.44" fill="#45bd6f" stroke="#1c1c1c" stroke-width="0.65"/><circle cx="316.6" cy="363.5" r="1.44" fill="#fde725" stroke="#1c1c1c" stroke-width="0.65"/><circle cx="358.4" cy="361.4" r="1.44" fill="#fde725" stroke="#1c1c1c" stroke-width="0.65"/><circle cx="325.2" cy="362.7" r="1.44" fill="#bcde2a" stroke="#1c1c1c" stroke-width="0.65"/><circle cx="339.0" cy="364.8" r="1.44" fill="#fde725" stroke="#1c1c1c" stroke-width="0.65"/><circle cx="334.0" cy="360.2" r="1.44" fill="#45bd6f" stroke="#1c1c1c" stroke-width="0.65"/><circle cx="301.3" cy="364.6" r="1.44" fill="#45bd6f" stroke="#1c1c1c" stroke-width="0.65"/><circle cx="353.6" cy="363.6" r="1.44" fill="#fde725" stroke="#1c1c1c" stroke-width="0.65"/><circle cx="356.9" cy="364.0" r="1.44" fill="#fde725" stroke="#1c1c1c" stroke-width="0.65"/><circle cx="327.8" cy="360.3" r="1.44" fill="#45bd6f" stroke="#1c1c1c" stroke-width="0.65"/><circle cx="306.7" cy="363.6" r="1.44" fill="#fde725" stroke="#1c1c1c" stroke-width="0.65"/><circle cx="328.3" cy="353.7" r="1.44" fill="#1f9c89" stroke="#1c1c1c" stroke-width="0.65"/><circle cx="347.9" cy="353.6" r="1.44" fill="#fde725" stroke="#1c1c1c" stroke-width="0.65"/><circle cx="351.9" cy="361.2" r="1.44" fill="#fde725" stroke="#1c1c1c" stroke-width="0.65"/><circle cx="296.8" cy="353.5" r="1.44" fill="#45bd6f" stroke="#1c1c1c" stroke-width="0.65"/><circle cx="351.5" cy="358.9" r="1.44" fill="#27a782" stroke="#1c1c1c" stroke-width="0.65"/><circle cx="294.1" cy="354.2" r="1.44" fill="#fde725" stroke="#1c1c1c" stroke-width="0.65"/><circle cx="363.5" cy="360.4" r="1.44" fill="#bcde2a" stroke="#1c1c1c" stroke-width="0.65"/><circle cx="292.6" cy="354.8" r="1.44" fill="#45bd6f" stroke="#1c1c1c" stroke-width="0.65"/><circle cx="293.4" cy="362.4" r="1.44" fill="#fde725" stroke="#1c1c1c" stroke-width="0.65"/><circle cx="335.0" cy="357.3" r="1.44" fill="#45bd6f" stroke="#1c1c1c" stroke-width="0.65"/><circle cx="289.3" cy="364.1" r="1.44" fill="#bcde2a" stroke="#1c1c1c" stroke-width="0.65"/><circle cx="310.4" cy="353.2" r="1.44" fill="#bcde2a" stroke="#1c1c1c" stroke-width="0.65"/><circle cx="323.2" cy="355.1" r="1.44" fill="#fde725" stroke="#1c1c1c" stroke-width="0.65"/><circle cx="298.3" cy="363.2" r="1.44" fill="#1f9c89" stroke="#1c1c1c" stroke-width="0.65"/><circle cx="344.5" cy="355.3" r="1.44" fill="#1f9c89" stroke="#1c1c1c" stroke-width="0.65"/><polygon points="349.0,359.0 491.0,357.5 518.0,365.5 518.0,367.5 343.0,367.5" fill="#2a2448"/><circle cx="462.0" cy="361.8" r="1.25" fill="#44337d" stroke="#161616" stroke-width="0.75"/><circle cx="484.6" cy="360.3" r="1.25" fill="#472474" stroke="#161616" stroke-width="0.75"/><circle cx="421.3" cy="362.1" r="1.25" fill="#3f4285" stroke="#161616" stroke-width="0.75"/><circle cx="517.6" cy="366.8" r="1.25" fill="#2f6b8e" stroke="#161616" stroke-width="0.75"/><circle cx="376.8" cy="356.7" r="1.25" fill="#45bd6f" stroke="#161616" stroke-width="0.75"/><circle cx="407.3" cy="363.3" r="1.25" fill="#472474" stroke="#161616" stroke-width="0.75"/><circle cx="448.9" cy="359.5" r="1.25" fill="#451264" stroke="#161616" stroke-width="0.75"/><circle cx="402.9" cy="366.2" r="1.25" fill="#22908b" stroke="#161616" stroke-width="0.75"/><circle cx="461.9" cy="364.3" r="1.25" fill="#44337d" stroke="#161616" stroke-width="0.75"/><circle cx="352.5" cy="361.8" r="1.25" fill="#31b37b" stroke="#161616" stroke-width="0.75"/><circle cx="496.2" cy="366.9" r="1.25" fill="#2f6b8e" stroke="#161616" stroke-width="0.75"/><circle cx="488.0" cy="357.3" r="1.25" fill="#451264" stroke="#161616" stroke-width="0.75"/><circle cx="433.3" cy="360.0" r="1.25" fill="#44337d" stroke="#161616" stroke-width="0.75"/><circle cx="429.7" cy="359.8" r="1.25" fill="#2f6b8e" stroke="#161616" stroke-width="0.75"/><circle cx="388.7" cy="360.2" r="1.25" fill="#44337d" stroke="#161616" stroke-width="0.75"/><circle cx="432.8" cy="357.7" r="1.25" fill="#2f6b8e" stroke="#161616" stroke-width="0.75"/><circle cx="363.0" cy="360.6" r="1.25" fill="#1f9c89" stroke="#161616" stroke-width="0.75"/><circle cx="417.5" cy="366.9" r="1.25" fill="#25838d" stroke="#161616" stroke-width="0.75"/><circle cx="443.7" cy="362.2" r="1.25" fill="#440154" stroke="#161616" stroke-width="0.75"/><circle cx="442.0" cy="358.3" r="1.25" fill="#44337d" stroke="#161616" stroke-width="0.75"/><circle cx="471.5" cy="359.0" r="1.25" fill="#44337d" stroke="#161616" stroke-width="0.75"/><circle cx="375.5" cy="361.2" r="1.25" fill="#fde725" stroke="#161616" stroke-width="0.75"/><circle cx="483.9" cy="366.9" r="1.25" fill="#3a508a" stroke="#161616" stroke-width="0.75"/><circle cx="447.9" cy="356.6" r="1.25" fill="#3a508a" stroke="#161616" stroke-width="0.75"/><circle cx="455.5" cy="358.8" r="1.25" fill="#440154" stroke="#161616" stroke-width="0.75"/><circle cx="380.2" cy="359.8" r="1.25" fill="#27a782" stroke="#161616" stroke-width="0.75"/><circle cx="510.3" cy="365.6" r="1.25" fill="#440154" stroke="#161616" stroke-width="0.75"/><circle cx="513.7" cy="365.3" r="1.25" fill="#451264" stroke="#161616" stroke-width="0.75"/><circle cx="484.2" cy="364.1" r="1.25" fill="#2f6b8e" stroke="#161616" stroke-width="0.75"/><circle cx="366.1" cy="360.1" r="1.25" fill="#27a782" stroke="#161616" stroke-width="0.75"/><circle cx="480.0" cy="363.2" r="1.25" fill="#3a508a" stroke="#161616" stroke-width="0.75"/><circle cx="365.8" cy="361.5" r="1.25" fill="#9cd83a" stroke="#161616" stroke-width="0.75"/><circle cx="482.5" cy="366.0" r="1.25" fill="#3a508a" stroke="#161616" stroke-width="0.75"/><circle cx="369.6" cy="363.2" r="1.25" fill="#25838d" stroke="#161616" stroke-width="0.75"/><circle cx="506.2" cy="362.9" r="1.25" fill="#3f4285" stroke="#161616" stroke-width="0.75"/><circle cx="391.3" cy="365.7" r="1.25" fill="#345e8c" stroke="#161616" stroke-width="0.75"/><circle cx="406.6" cy="363.3" r="1.25" fill="#25838d" stroke="#161616" stroke-width="0.75"/><circle cx="426.1" cy="366.7" r="1.25" fill="#451264" stroke="#161616" stroke-width="0.75"/><circle cx="443.5" cy="359.3" r="1.25" fill="#451264" stroke="#161616" stroke-width="0.75"/><circle cx="458.8" cy="357.2" r="1.25" fill="#451264" stroke="#161616" stroke-width="0.75"/><circle cx="462.5" cy="360.5" r="1.25" fill="#2f6b8e" stroke="#161616" stroke-width="0.75"/><circle cx="457.1" cy="357.8" r="1.25" fill="#3a508a" stroke="#161616" stroke-width="0.75"/><circle cx="457.9" cy="363.1" r="1.25" fill="#44337d" stroke="#161616" stroke-width="0.75"/><circle cx="506.2" cy="364.1" r="1.25" fill="#440154" stroke="#161616" stroke-width="0.75"/><circle cx="346.7" cy="361.7" r="1.25" fill="#fde725" stroke="#161616" stroke-width="0.75"/><circle cx="358.2" cy="359.2" r="1.25" fill="#1f9c89" stroke="#161616" stroke-width="0.75"/><circle cx="341.1" cy="366.8" r="1.25" fill="#9cd83a" stroke="#161616" stroke-width="0.75"/><circle cx="437.5" cy="360.6" r="1.25" fill="#3f4285" stroke="#161616" stroke-width="0.75"/><circle cx="453.1" cy="362.9" r="1.25" fill="#451264" stroke="#161616" stroke-width="0.75"/><circle cx="427.0" cy="361.7" r="1.25" fill="#2f6b8e" stroke="#161616" stroke-width="0.75"/><circle cx="453.3" cy="363.1" r="1.25" fill="#44337d" stroke="#161616" stroke-width="0.75"/><circle cx="370.5" cy="364.1" r="1.25" fill="#1f9c89" stroke="#161616" stroke-width="0.75"/><circle cx="434.8" cy="366.6" r="1.25" fill="#451264" stroke="#161616" stroke-width="0.75"/><circle cx="370.5" cy="361.4" r="1.25" fill="#fde725" stroke="#161616" stroke-width="0.75"/><circle cx="448.8" cy="364.3" r="1.25" fill="#2f6b8e" stroke="#161616" stroke-width="0.75"/><circle cx="402.2" cy="365.7" r="1.25" fill="#2a778e" stroke="#161616" stroke-width="0.75"/><circle cx="486.2" cy="358.1" r="1.25" fill="#451264" stroke="#161616" stroke-width="0.75"/><circle cx="448.0" cy="365.9" r="1.25" fill="#451264" stroke="#161616" stroke-width="0.75"/><circle cx="495.6" cy="362.5" r="1.25" fill="#440154" stroke="#161616" stroke-width="0.75"/><circle cx="465.8" cy="358.0" r="1.25" fill="#472474" stroke="#161616" stroke-width="0.75"/><circle cx="445.5" cy="366.1" r="1.25" fill="#440154" stroke="#161616" stroke-width="0.75"/><circle cx="443.9" cy="358.9" r="1.25" fill="#451264" stroke="#161616" stroke-width="0.75"/><circle cx="370.8" cy="357.7" r="1.25" fill="#31b37b" stroke="#161616" stroke-width="0.75"/><circle cx="349.4" cy="362.0" r="1.25" fill="#1f9c89" stroke="#161616" stroke-width="0.75"/><circle cx="366.7" cy="362.1" r="1.25" fill="#fde725" stroke="#161616" stroke-width="0.75"/><circle cx="410.6" cy="360.5" r="1.25" fill="#44337d" stroke="#161616" stroke-width="0.75"/><circle cx="406.6" cy="361.5" r="1.25" fill="#472474" stroke="#161616" stroke-width="0.75"/><circle cx="515.8" cy="365.5" r="1.25" fill="#2f6b8e" stroke="#161616" stroke-width="0.75"/><circle cx="397.1" cy="356.6" r="1.25" fill="#25838d" stroke="#161616" stroke-width="0.75"/><circle cx="388.7" cy="359.5" r="1.25" fill="#3f4285" stroke="#161616" stroke-width="0.75"/><circle cx="365.2" cy="364.9" r="1.25" fill="#9cd83a" stroke="#161616" stroke-width="0.75"/><circle cx="504.3" cy="362.7" r="1.25" fill="#3a508a" stroke="#161616" stroke-width="0.75"/><circle cx="343.4" cy="359.5" r="1.25" fill="#45bd6f" stroke="#161616" stroke-width="0.75"/><circle cx="380.5" cy="367.0" r="1.25" fill="#1f9c89" stroke="#161616" stroke-width="0.75"/><circle cx="463.3" cy="366.2" r="1.25" fill="#451264" stroke="#161616" stroke-width="0.75"/><circle cx="450.3" cy="365.6" r="1.25" fill="#472474" stroke="#161616" stroke-width="0.75"/><circle cx="475.3" cy="357.7" r="1.25" fill="#440154" stroke="#161616" stroke-width="0.75"/><circle cx="470.8" cy="365.6" r="1.25" fill="#472474" stroke="#161616" stroke-width="0.75"/><circle cx="443.5" cy="363.6" r="1.25" fill="#3f4285" stroke="#161616" stroke-width="0.75"/><circle cx="499.4" cy="364.4" r="1.25" fill="#472474" stroke="#161616" stroke-width="0.75"/><circle cx="517.8" cy="366.8" r="1.25" fill="#3a508a" stroke="#161616" stroke-width="0.75"/><circle cx="385.1" cy="362.5" r="1.25" fill="#345e8c" stroke="#161616" stroke-width="0.75"/><circle cx="409.5" cy="362.4" r="1.25" fill="#3f4285" stroke="#161616" stroke-width="0.75"/><circle cx="477.4" cy="363.4" r="1.25" fill="#44337d" stroke="#161616" stroke-width="0.75"/><circle cx="450.4" cy="359.4" r="1.25" fill="#472474" stroke="#161616" stroke-width="0.75"/><circle cx="509.8" cy="365.0" r="1.25" fill="#472474" stroke="#161616" stroke-width="0.75"/><circle cx="417.4" cy="365.5" r="1.25" fill="#472474" stroke="#161616" stroke-width="0.75"/><circle cx="383.8" cy="360.3" r="1.25" fill="#3a508a" stroke="#161616" stroke-width="0.75"/><circle cx="434.7" cy="359.3" r="1.25" fill="#44337d" stroke="#161616" stroke-width="0.75"/><circle cx="437.3" cy="360.1" r="1.25" fill="#440154" stroke="#161616" stroke-width="0.75"/><circle cx="357.0" cy="363.7" r="1.25" fill="#9cd83a" stroke="#161616" stroke-width="0.75"/><circle cx="452.7" cy="361.4" r="1.25" fill="#3f4285" stroke="#161616" stroke-width="0.75"/><circle cx="452.1" cy="357.2" r="1.25" fill="#3a508a" stroke="#161616" stroke-width="0.75"/><circle cx="503.3" cy="366.0" r="1.25" fill="#451264" stroke="#161616" stroke-width="0.75"/><circle cx="467.5" cy="365.5" r="1.25" fill="#3a508a" stroke="#161616" stroke-width="0.75"/><circle cx="412.6" cy="359.8" r="1.25" fill="#25838d" stroke="#161616" stroke-width="0.75"/><circle cx="379.9" cy="364.1" r="1.25" fill="#fde725" stroke="#161616" stroke-width="0.75"/><circle cx="434.0" cy="363.0" r="1.25" fill="#2f6b8e" stroke="#161616" stroke-width="0.75"/><circle cx="455.3" cy="366.6" r="1.25" fill="#451264" stroke="#161616" stroke-width="0.75"/><circle cx="448.2" cy="358.2" r="1.25" fill="#440154" stroke="#161616" stroke-width="0.75"/><circle cx="412.8" cy="365.4" r="1.25" fill="#3a508a" stroke="#161616" stroke-width="0.75"/><circle cx="440.2" cy="363.6" r="1.25" fill="#3a508a" stroke="#161616" stroke-width="0.75"/><circle cx="346.6" cy="357.5" r="1.25" fill="#25838d" stroke="#161616" stroke-width="0.75"/><circle cx="361.3" cy="363.6" r="1.25" fill="#45bd6f" stroke="#161616" stroke-width="0.75"/><circle cx="460.4" cy="362.3" r="1.25" fill="#2f6b8e" stroke="#161616" stroke-width="0.75"/><circle cx="488.2" cy="366.4" r="1.25" fill="#440154" stroke="#161616" stroke-width="0.75"/><circle cx="452.8" cy="356.8" r="1.25" fill="#451264" stroke="#161616" stroke-width="0.75"/><circle cx="354.4" cy="362.7" r="1.25" fill="#1f9c89" stroke="#161616" stroke-width="0.75"/><circle cx="365.2" cy="360.2" r="1.25" fill="#1f9c89" stroke="#161616" stroke-width="0.75"/><circle cx="445.8" cy="365.2" r="1.25" fill="#472474" stroke="#161616" stroke-width="0.75"/><circle cx="503.2" cy="363.8" r="1.25" fill="#3a508a" stroke="#161616" stroke-width="0.75"/><circle cx="468.6" cy="365.8" r="1.25" fill="#3f4285" stroke="#161616" stroke-width="0.75"/><circle cx="452.2" cy="359.0" r="1.25" fill="#440154" stroke="#161616" stroke-width="0.75"/><circle cx="459.3" cy="366.7" r="1.25" fill="#472474" stroke="#161616" stroke-width="0.75"/><circle cx="416.8" cy="359.5" r="1.25" fill="#25838d" stroke="#161616" stroke-width="0.75"/><circle cx="421.3" cy="356.6" r="1.25" fill="#44337d" stroke="#161616" stroke-width="0.75"/><circle cx="491.1" cy="362.6" r="1.25" fill="#3f4285" stroke="#161616" stroke-width="0.75"/><circle cx="364.5" cy="359.3" r="1.25" fill="#fde725" stroke="#161616" stroke-width="0.75"/><circle cx="359.9" cy="362.9" r="1.25" fill="#1f9c89" stroke="#161616" stroke-width="0.75"/><circle cx="516.3" cy="366.7" r="1.25" fill="#472474" stroke="#161616" stroke-width="0.75"/><circle cx="349.4" cy="362.9" r="1.25" fill="#fde725" stroke="#161616" stroke-width="0.75"/><circle cx="482.3" cy="360.6" r="1.25" fill="#3a508a" stroke="#161616" stroke-width="0.75"/><circle cx="424.1" cy="360.7" r="1.25" fill="#44337d" stroke="#161616" stroke-width="0.75"/><circle cx="491.6" cy="359.3" r="1.25" fill="#440154" stroke="#161616" stroke-width="0.75"/><circle cx="344.4" cy="360.7" r="1.25" fill="#1f9c89" stroke="#161616" stroke-width="0.75"/><circle cx="511.1" cy="366.9" r="1.25" fill="#44337d" stroke="#161616" stroke-width="0.75"/><circle cx="363.1" cy="360.9" r="1.25" fill="#31b37b" stroke="#161616" stroke-width="0.75"/><circle cx="475.0" cy="361.2" r="1.25" fill="#472474" stroke="#161616" stroke-width="0.75"/><circle cx="392.6" cy="360.5" r="1.25" fill="#3a508a" stroke="#161616" stroke-width="0.75"/><circle cx="468.6" cy="356.5" r="1.25" fill="#451264" stroke="#161616" stroke-width="0.75"/><circle cx="423.9" cy="357.9" r="1.25" fill="#451264" stroke="#161616" stroke-width="0.75"/><circle cx="356.6" cy="365.7" r="1.25" fill="#1f9c89" stroke="#161616" stroke-width="0.75"/><circle cx="439.1" cy="358.1" r="1.25" fill="#472474" stroke="#161616" stroke-width="0.75"/><circle cx="417.2" cy="362.9" r="1.25" fill="#472474" stroke="#161616" stroke-width="0.75"/><circle cx="387.2" cy="357.0" r="1.25" fill="#3f4285" stroke="#161616" stroke-width="0.75"/><circle cx="413.3" cy="357.3" r="1.25" fill="#472474" stroke="#161616" stroke-width="0.75"/><circle cx="513.6" cy="365.5" r="1.25" fill="#44337d" stroke="#161616" stroke-width="0.75"/><circle cx="499.9" cy="365.7" r="1.25" fill="#451264" stroke="#161616" stroke-width="0.75"/><circle cx="486.8" cy="366.1" r="1.25" fill="#451264" stroke="#161616" stroke-width="0.75"/><circle cx="421.6" cy="359.7" r="1.25" fill="#44337d" stroke="#161616" stroke-width="0.75"/><circle cx="373.9" cy="363.3" r="1.25" fill="#1f9c89" stroke="#161616" stroke-width="0.75"/><circle cx="412.3" cy="358.2" r="1.25" fill="#22908b" stroke="#161616" stroke-width="0.75"/><circle cx="448.5" cy="359.9" r="1.25" fill="#3a508a" stroke="#161616" stroke-width="0.75"/><circle cx="411.8" cy="366.3" r="1.25" fill="#472474" stroke="#161616" stroke-width="0.75"/><circle cx="484.6" cy="359.0" r="1.25" fill="#2f6b8e" stroke="#161616" stroke-width="0.75"/><circle cx="435.4" cy="366.5" r="1.25" fill="#2f6b8e" stroke="#161616" stroke-width="0.75"/><circle cx="387.6" cy="358.3" r="1.25" fill="#2a778e" stroke="#161616" stroke-width="0.75"/><circle cx="495.2" cy="364.0" r="1.25" fill="#472474" stroke="#161616" stroke-width="0.75"/><circle cx="474.2" cy="360.0" r="1.25" fill="#44337d" stroke="#161616" stroke-width="0.75"/><circle cx="494.1" cy="366.5" r="1.25" fill="#451264" stroke="#161616" stroke-width="0.75"/><circle cx="420.4" cy="357.7" r="1.25" fill="#44337d" stroke="#161616" stroke-width="0.75"/><circle cx="378.1" cy="359.1" r="1.25" fill="#fde725" stroke="#161616" stroke-width="0.75"/><circle cx="426.3" cy="363.3" r="1.25" fill="#472474" stroke="#161616" stroke-width="0.75"/><circle cx="372.1" cy="357.3" r="1.25" fill="#31b37b" stroke="#161616" stroke-width="0.75"/><circle cx="513.4" cy="366.1" r="1.25" fill="#451264" stroke="#161616" stroke-width="0.75"/><circle cx="352.4" cy="361.8" r="1.25" fill="#fde725" stroke="#161616" stroke-width="0.75"/><circle cx="447.6" cy="364.6" r="1.25" fill="#3f4285" stroke="#161616" stroke-width="0.75"/><circle cx="480.4" cy="364.7" r="1.25" fill="#44337d" stroke="#161616" stroke-width="0.75"/><circle cx="410.0" cy="363.3" r="1.25" fill="#2a778e" stroke="#161616" stroke-width="0.75"/><circle cx="501.8" cy="365.8" r="1.25" fill="#440154" stroke="#161616" stroke-width="0.75"/><circle cx="453.8" cy="360.2" r="1.25" fill="#472474" stroke="#161616" stroke-width="0.75"/><circle cx="438.1" cy="359.3" r="1.25" fill="#3a508a" stroke="#161616" stroke-width="0.75"/><circle cx="459.1" cy="365.4" r="1.25" fill="#44337d" stroke="#161616" stroke-width="0.75"/><circle cx="460.0" cy="357.0" r="1.25" fill="#44337d" stroke="#161616" stroke-width="0.75"/><circle cx="393.4" cy="357.6" r="1.25" fill="#3f4285" stroke="#161616" stroke-width="0.75"/><circle cx="503.7" cy="363.5" r="1.25" fill="#44337d" stroke="#161616" stroke-width="0.75"/><circle cx="451.8" cy="363.8" r="1.25" fill="#3a508a" stroke="#161616" stroke-width="0.75"/><circle cx="432.6" cy="363.1" r="1.25" fill="#3f4285" stroke="#161616" stroke-width="0.75"/><circle cx="382.3" cy="364.5" r="1.25" fill="#3a508a" stroke="#161616" stroke-width="0.75"/><circle cx="353.2" cy="357.2" r="1.25" fill="#fde725" stroke="#161616" stroke-width="0.75"/><circle cx="507.5" cy="366.2" r="1.25" fill="#44337d" stroke="#161616" stroke-width="0.75"/><circle cx="482.7" cy="359.7" r="1.25" fill="#44337d" stroke="#161616" stroke-width="0.75"/><circle cx="341.5" cy="363.2" r="1.25" fill="#9cd83a" stroke="#161616" stroke-width="0.75"/><circle cx="426.4" cy="356.6" r="1.25" fill="#44337d" stroke="#161616" stroke-width="0.75"/><circle cx="350.1" cy="364.8" r="1.25" fill="#fde725" stroke="#161616" stroke-width="0.75"/><circle cx="338.8" cy="361.3" r="1.25" fill="#fde725" stroke="#161616" stroke-width="0.75"/><circle cx="394.1" cy="356.9" r="1.25" fill="#25838d" stroke="#161616" stroke-width="0.75"/><circle cx="415.8" cy="359.2" r="1.25" fill="#3f4285" stroke="#161616" stroke-width="0.75"/><circle cx="401.5" cy="366.2" r="1.25" fill="#44337d" stroke="#161616" stroke-width="0.75"/><circle cx="358.9" cy="365.0" r="1.25" fill="#1f9c89" stroke="#161616" stroke-width="0.75"/><circle cx="368.1" cy="363.4" r="1.25" fill="#fde725" stroke="#161616" stroke-width="0.75"/><circle cx="352.9" cy="360.8" r="1.25" fill="#27a782" stroke="#161616" stroke-width="0.75"/><circle cx="390.5" cy="359.8" r="1.25" fill="#345e8c" stroke="#161616" stroke-width="0.75"/><circle cx="499.3" cy="366.7" r="1.25" fill="#2f6b8e" stroke="#161616" stroke-width="0.75"/><circle cx="418.5" cy="356.9" r="1.25" fill="#3f4285" stroke="#161616" stroke-width="0.75"/><circle cx="477.5" cy="363.5" r="1.25" fill="#451264" stroke="#161616" stroke-width="0.75"/><circle cx="430.5" cy="365.6" r="1.25" fill="#2f6b8e" stroke="#161616" stroke-width="0.75"/><circle cx="429.8" cy="364.0" r="1.25" fill="#3a508a" stroke="#161616" stroke-width="0.75"/><circle cx="446.7" cy="365.1" r="1.25" fill="#2f6b8e" stroke="#161616" stroke-width="0.75"/><circle cx="486.2" cy="357.5" r="1.25" fill="#451264" stroke="#161616" stroke-width="0.75"/><circle cx="471.7" cy="365.5" r="1.25" fill="#2f6b8e" stroke="#161616" stroke-width="0.75"/><circle cx="392.3" cy="361.1" r="1.25" fill="#22908b" stroke="#161616" stroke-width="0.75"/><circle cx="366.7" cy="362.5" r="1.25" fill="#9cd83a" stroke="#161616" stroke-width="0.75"/><circle cx="354.8" cy="360.0" r="1.25" fill="#fde725" stroke="#161616" stroke-width="0.75"/><circle cx="336.2" cy="362.3" r="1.25" fill="#1f9c89" stroke="#161616" stroke-width="0.75"/><circle cx="500.7" cy="362.4" r="1.25" fill="#472474" stroke="#161616" stroke-width="0.75"/><circle cx="384.6" cy="364.6" r="1.25" fill="#3f4285" stroke="#161616" stroke-width="0.75"/><circle cx="411.2" cy="362.0" r="1.25" fill="#3a508a" stroke="#161616" stroke-width="0.75"/><circle cx="413.9" cy="356.9" r="1.25" fill="#472474" stroke="#161616" stroke-width="0.75"/><circle cx="458.9" cy="357.6" r="1.25" fill="#451264" stroke="#161616" stroke-width="0.75"/><circle cx="444.5" cy="362.5" r="1.25" fill="#3f4285" stroke="#161616" stroke-width="0.75"/><circle cx="441.9" cy="356.5" r="1.25" fill="#451264" stroke="#161616" stroke-width="0.75"/><circle cx="488.0" cy="360.5" r="1.25" fill="#451264" stroke="#161616" stroke-width="0.75"/><circle cx="422.6" cy="363.4" r="1.25" fill="#44337d" stroke="#161616" stroke-width="0.75"/><circle cx="368.4" cy="364.4" r="1.25" fill="#fde725" stroke="#161616" stroke-width="0.75"/><circle cx="506.6" cy="363.7" r="1.25" fill="#440154" stroke="#161616" stroke-width="0.75"/><circle cx="402.5" cy="361.0" r="1.25" fill="#44337d" stroke="#161616" stroke-width="0.75"/><circle cx="501.6" cy="364.1" r="1.25" fill="#451264" stroke="#161616" stroke-width="0.75"/><circle cx="501.3" cy="361.9" r="1.25" fill="#472474" stroke="#161616" stroke-width="0.75"/><circle cx="454.0" cy="364.1" r="1.25" fill="#2f6b8e" stroke="#161616" stroke-width="0.75"/><circle cx="399.3" cy="366.6" r="1.25" fill="#472474" stroke="#161616" stroke-width="0.75"/><circle cx="421.2" cy="360.4" r="1.25" fill="#44337d" stroke="#161616" stroke-width="0.75"/><circle cx="428.0" cy="366.5" r="1.25" fill="#472474" stroke="#161616" stroke-width="0.75"/><circle cx="512.8" cy="366.3" r="1.25" fill="#451264" stroke="#161616" stroke-width="0.75"/><circle cx="344.2" cy="360.6" r="1.25" fill="#9cd83a" stroke="#161616" stroke-width="0.75"/><circle cx="505.0" cy="364.9" r="1.25" fill="#44337d" stroke="#161616" stroke-width="0.75"/><circle cx="457.7" cy="358.9" r="1.25" fill="#472474" stroke="#161616" stroke-width="0.75"/><circle cx="341.5" cy="359.8" r="1.25" fill="#9cd83a" stroke="#161616" stroke-width="0.75"/><circle cx="356.8" cy="364.7" r="1.25" fill="#25838d" stroke="#161616" stroke-width="0.75"/><circle cx="443.4" cy="365.3" r="1.25" fill="#44337d" stroke="#161616" stroke-width="0.75"/><circle cx="397.2" cy="358.4" r="1.25" fill="#2a778e" stroke="#161616" stroke-width="0.75"/><circle cx="338.8" cy="364.5" r="1.25" fill="#31b37b" stroke="#161616" stroke-width="0.75"/><circle cx="369.9" cy="365.1" r="1.25" fill="#1f9c89" stroke="#161616" stroke-width="0.75"/><circle cx="372.4" cy="360.5" r="1.25" fill="#fde725" stroke="#161616" stroke-width="0.75"/><circle cx="475.9" cy="364.2" r="1.25" fill="#472474" stroke="#161616" stroke-width="0.75"/><circle cx="344.0" cy="361.6" r="1.25" fill="#1f9c89" stroke="#161616" stroke-width="0.75"/><circle cx="421.9" cy="364.8" r="1.25" fill="#472474" stroke="#161616" stroke-width="0.75"/><circle cx="506.0" cy="363.0" r="1.25" fill="#472474" stroke="#161616" stroke-width="0.75"/><circle cx="445.4" cy="366.6" r="1.25" fill="#440154" stroke="#161616" stroke-width="0.75"/><circle cx="367.1" cy="366.9" r="1.25" fill="#31b37b" stroke="#161616" stroke-width="0.75"/><circle cx="505.2" cy="363.5" r="1.25" fill="#44337d" stroke="#161616" stroke-width="0.75"/><circle cx="391.1" cy="361.1" r="1.25" fill="#2a778e" stroke="#161616" stroke-width="0.75"/><circle cx="373.1" cy="365.9" r="1.25" fill="#fde725" stroke="#161616" stroke-width="0.75"/><circle cx="342.1" cy="359.6" r="1.25" fill="#45bd6f" stroke="#161616" stroke-width="0.75"/><circle cx="482.8" cy="360.7" r="1.25" fill="#440154" stroke="#161616" stroke-width="0.75"/><circle cx="444.3" cy="365.1" r="1.25" fill="#440154" stroke="#161616" stroke-width="0.75"/><circle cx="411.0" cy="360.7" r="1.25" fill="#2a778e" stroke="#161616" stroke-width="0.75"/><circle cx="415.7" cy="361.7" r="1.25" fill="#472474" stroke="#161616" stroke-width="0.75"/><circle cx="391.9" cy="359.3" r="1.25" fill="#345e8c" stroke="#161616" stroke-width="0.75"/><circle cx="408.8" cy="362.4" r="1.25" fill="#345e8c" stroke="#161616" stroke-width="0.75"/><circle cx="403.2" cy="361.3" r="1.25" fill="#472474" stroke="#161616" stroke-width="0.75"/><circle cx="397.1" cy="361.7" r="1.25" fill="#25838d" stroke="#161616" stroke-width="0.75"/><circle cx="352.9" cy="363.0" r="1.25" fill="#25838d" stroke="#161616" stroke-width="0.75"/><circle cx="390.0" cy="359.6" r="1.25" fill="#44337d" stroke="#161616" stroke-width="0.75"/><circle cx="379.2" cy="364.9" r="1.25" fill="#25838d" stroke="#161616" stroke-width="0.75"/><circle cx="469.6" cy="356.8" r="1.25" fill="#440154" stroke="#161616" stroke-width="0.75"/><circle cx="416.8" cy="362.0" r="1.25" fill="#472474" stroke="#161616" stroke-width="0.75"/><circle cx="412.3" cy="360.7" r="1.25" fill="#22908b" stroke="#161616" stroke-width="0.75"/><circle cx="353.7" cy="360.6" r="1.25" fill="#45bd6f" stroke="#161616" stroke-width="0.75"/><circle cx="427.6" cy="364.8" r="1.25" fill="#2f6b8e" stroke="#161616" stroke-width="0.75"/><circle cx="462.9" cy="364.8" r="1.25" fill="#451264" stroke="#161616" stroke-width="0.75"/><circle cx="458.7" cy="361.3" r="1.25" fill="#3f4285" stroke="#161616" stroke-width="0.75"/><circle cx="499.3" cy="366.0" r="1.25" fill="#3f4285" stroke="#161616" stroke-width="0.75"/><circle cx="485.1" cy="365.5" r="1.25" fill="#440154" stroke="#161616" stroke-width="0.75"/><circle cx="487.6" cy="365.2" r="1.25" fill="#3f4285" stroke="#161616" stroke-width="0.75"/><circle cx="444.9" cy="366.0" r="1.25" fill="#440154" stroke="#161616" stroke-width="0.75"/><circle cx="445.1" cy="357.9" r="1.25" fill="#440154" stroke="#161616" stroke-width="0.75"/><circle cx="508.6" cy="364.0" r="1.25" fill="#3f4285" stroke="#161616" stroke-width="0.75"/><circle cx="385.1" cy="365.9" r="1.25" fill="#22908b" stroke="#161616" stroke-width="0.75"/><circle cx="356.5" cy="363.2" r="1.25" fill="#fde725" stroke="#161616" stroke-width="0.75"/><circle cx="337.3" cy="358.9" r="1.25" fill="#fde725" stroke="#161616" stroke-width="0.75"/><circle cx="496.0" cy="365.4" r="1.25" fill="#472474" stroke="#161616" stroke-width="0.75"/><circle cx="510.8" cy="365.3" r="1.25" fill="#44337d" stroke="#161616" stroke-width="0.75"/><circle cx="469.1" cy="357.1" r="1.25" fill="#3a508a" stroke="#161616" stroke-width="0.75"/><circle cx="432.1" cy="356.9" r="1.25" fill="#44337d" stroke="#161616" stroke-width="0.75"/><circle cx="381.3" cy="358.3" r="1.25" fill="#25838d" stroke="#161616" stroke-width="0.75"/><circle cx="506.1" cy="363.3" r="1.25" fill="#44337d" stroke="#161616" stroke-width="0.75"/><circle cx="358.9" cy="362.3" r="1.25" fill="#fde725" stroke="#161616" stroke-width="0.75"/><circle cx="356.0" cy="360.0" r="1.25" fill="#fde725" stroke="#161616" stroke-width="0.75"/><circle cx="429.7" cy="362.0" r="1.25" fill="#451264" stroke="#161616" stroke-width="0.75"/><circle cx="444.5" cy="366.4" r="1.25" fill="#3a508a" stroke="#161616" stroke-width="0.75"/><circle cx="501.1" cy="366.0" r="1.25" fill="#451264" stroke="#161616" stroke-width="0.75"/><circle cx="464.8" cy="358.6" r="1.25" fill="#3a508a" stroke="#161616" stroke-width="0.75"/><circle cx="423.8" cy="363.9" r="1.25" fill="#3a508a" stroke="#161616" stroke-width="0.75"/><circle cx="516.5" cy="366.1" r="1.25" fill="#440154" stroke="#161616" stroke-width="0.75"/><circle cx="359.6" cy="366.3" r="1.25" fill="#25838d" stroke="#161616" stroke-width="0.75"/><circle cx="455.8" cy="357.5" r="1.25" fill="#440154" stroke="#161616" stroke-width="0.75"/><circle cx="479.2" cy="365.9" r="1.25" fill="#472474" stroke="#161616" stroke-width="0.75"/><circle cx="435.8" cy="361.2" r="1.25" fill="#472474" stroke="#161616" stroke-width="0.75"/><circle cx="512.8" cy="366.3" r="1.25" fill="#44337d" stroke="#161616" stroke-width="0.75"/><circle cx="359.3" cy="360.2" r="1.25" fill="#fde725" stroke="#161616" stroke-width="0.75"/><circle cx="474.9" cy="366.5" r="1.25" fill="#3f4285" stroke="#161616" stroke-width="0.75"/><circle cx="456.5" cy="359.9" r="1.25" fill="#3a508a" stroke="#161616" stroke-width="0.75"/><circle cx="360.8" cy="359.2" r="1.25" fill="#31b37b" stroke="#161616" stroke-width="0.75"/><circle cx="367.6" cy="364.3" r="1.25" fill="#1f9c89" stroke="#161616" stroke-width="0.75"/><circle cx="508.9" cy="366.7" r="1.25" fill="#2f6b8e" stroke="#161616" stroke-width="0.75"/><circle cx="410.6" cy="363.4" r="1.25" fill="#2a778e" stroke="#161616" stroke-width="0.75"/><circle cx="439.1" cy="357.3" r="1.25" fill="#3a508a" stroke="#161616" stroke-width="0.75"/><circle cx="506.1" cy="365.9" r="1.25" fill="#440154" stroke="#161616" stroke-width="0.75"/><circle cx="343.9" cy="357.1" r="1.25" fill="#fde725" stroke="#161616" stroke-width="0.75"/><circle cx="344.6" cy="362.6" r="1.25" fill="#fde725" stroke="#161616" stroke-width="0.75"/><circle cx="491.5" cy="360.3" r="1.25" fill="#472474" stroke="#161616" stroke-width="0.75"/><circle cx="462.2" cy="360.4" r="1.25" fill="#3a508a" stroke="#161616" stroke-width="0.75"/><circle cx="515.3" cy="366.6" r="1.25" fill="#44337d" stroke="#161616" stroke-width="0.75"/><circle cx="467.7" cy="364.9" r="1.25" fill="#44337d" stroke="#161616" stroke-width="0.75"/><circle cx="507.7" cy="363.7" r="1.25" fill="#44337d" stroke="#161616" stroke-width="0.75"/><circle cx="459.9" cy="362.3" r="1.25" fill="#440154" stroke="#161616" stroke-width="0.75"/><circle cx="364.4" cy="366.9" r="1.25" fill="#31b37b" stroke="#161616" stroke-width="0.75"/><circle cx="488.0" cy="357.9" r="1.25" fill="#44337d" stroke="#161616" stroke-width="0.75"/><circle cx="485.3" cy="362.7" r="1.25" fill="#451264" stroke="#161616" stroke-width="0.75"/><circle cx="459.2" cy="356.7" r="1.25" fill="#2f6b8e" stroke="#161616" stroke-width="0.75"/><circle cx="464.5" cy="358.3" r="1.25" fill="#472474" stroke="#161616" stroke-width="0.75"/><circle cx="447.7" cy="360.2" r="1.25" fill="#472474" stroke="#161616" stroke-width="0.75"/><circle cx="452.4" cy="360.2" r="1.25" fill="#440154" stroke="#161616" stroke-width="0.75"/><circle cx="490.6" cy="362.3" r="1.25" fill="#440154" stroke="#161616" stroke-width="0.75"/><circle cx="457.6" cy="362.9" r="1.25" fill="#2f6b8e" stroke="#161616" stroke-width="0.75"/><circle cx="349.4" cy="366.2" r="1.25" fill="#fde725" stroke="#161616" stroke-width="0.75"/><circle cx="419.6" cy="356.7" r="1.25" fill="#3f4285" stroke="#161616" stroke-width="0.75"/><circle cx="493.1" cy="363.9" r="1.25" fill="#472474" stroke="#161616" stroke-width="0.75"/><circle cx="347.3" cy="363.3" r="1.25" fill="#9cd83a" stroke="#161616" stroke-width="0.75"/><circle cx="449.7" cy="366.8" r="1.25" fill="#3f4285" stroke="#161616" stroke-width="0.75"/><circle cx="372.0" cy="356.9" r="1.25" fill="#31b37b" stroke="#161616" stroke-width="0.75"/><circle cx="420.1" cy="365.9" r="1.25" fill="#25838d" stroke="#161616" stroke-width="0.75"/><circle cx="465.0" cy="362.3" r="1.25" fill="#472474" stroke="#161616" stroke-width="0.75"/><circle cx="347.0" cy="362.5" r="1.25" fill="#9cd83a" stroke="#161616" stroke-width="0.75"/><circle cx="386.0" cy="363.8" r="1.25" fill="#44337d" stroke="#161616" stroke-width="0.75"/><circle cx="440.8" cy="364.3" r="1.25" fill="#3a508a" stroke="#161616" stroke-width="0.75"/><circle cx="358.6" cy="362.8" r="1.25" fill="#fde725" stroke="#161616" stroke-width="0.75"/><circle cx="401.0" cy="357.0" r="1.25" fill="#3a508a" stroke="#161616" stroke-width="0.75"/><circle cx="440.9" cy="359.7" r="1.25" fill="#472474" stroke="#161616" stroke-width="0.75"/><circle cx="338.6" cy="359.7" r="1.25" fill="#45bd6f" stroke="#161616" stroke-width="0.75"/><circle cx="397.7" cy="365.5" r="1.25" fill="#345e8c" stroke="#161616" stroke-width="0.75"/><circle cx="463.0" cy="360.3" r="1.25" fill="#44337d" stroke="#161616" stroke-width="0.75"/><circle cx="399.6" cy="359.5" r="1.25" fill="#3f4285" stroke="#161616" stroke-width="0.75"/><circle cx="493.7" cy="365.0" r="1.25" fill="#440154" stroke="#161616" stroke-width="0.75"/><circle cx="399.1" cy="359.1" r="1.25" fill="#44337d" stroke="#161616" stroke-width="0.75"/><circle cx="488.9" cy="366.9" r="1.25" fill="#2f6b8e" stroke="#161616" stroke-width="0.75"/><circle cx="448.3" cy="365.2" r="1.25" fill="#440154" stroke="#161616" stroke-width="0.75"/><circle cx="449.6" cy="362.8" r="1.25" fill="#451264" stroke="#161616" stroke-width="0.75"/><circle cx="405.7" cy="359.8" r="1.25" fill="#345e8c" stroke="#161616" stroke-width="0.75"/><circle cx="346.8" cy="361.1" r="1.25" fill="#1f9c89" stroke="#161616" stroke-width="0.75"/><circle cx="469.7" cy="356.7" r="1.25" fill="#440154" stroke="#161616" stroke-width="0.75"/><circle cx="375.7" cy="359.7" r="1.25" fill="#fde725" stroke="#161616" stroke-width="0.75"/><circle cx="394.2" cy="363.5" r="1.25" fill="#3a508a" stroke="#161616" stroke-width="0.75"/><circle cx="497.8" cy="366.5" r="1.25" fill="#472474" stroke="#161616" stroke-width="0.75"/><circle cx="500.2" cy="363.2" r="1.25" fill="#3f4285" stroke="#161616" stroke-width="0.75"/><circle cx="441.9" cy="357.3" r="1.25" fill="#440154" stroke="#161616" stroke-width="0.75"/><circle cx="429.3" cy="363.7" r="1.25" fill="#451264" stroke="#161616" stroke-width="0.75"/><circle cx="466.5" cy="362.0" r="1.25" fill="#440154" stroke="#161616" stroke-width="0.75"/><circle cx="486.2" cy="357.9" r="1.25" fill="#2f6b8e" stroke="#161616" stroke-width="0.75"/><circle cx="497.4" cy="365.8" r="1.25" fill="#44337d" stroke="#161616" stroke-width="0.75"/><circle cx="492.0" cy="362.9" r="1.25" fill="#44337d" stroke="#161616" stroke-width="0.75"/><circle cx="463.4" cy="356.9" r="1.25" fill="#3f4285" stroke="#161616" stroke-width="0.75"/><circle cx="336.8" cy="361.4" r="1.25" fill="#1f9c89" stroke="#161616" stroke-width="0.75"/><circle cx="395.7" cy="358.4" r="1.25" fill="#25838d" stroke="#161616" stroke-width="0.75"/><circle cx="395.9" cy="364.6" r="1.25" fill="#3f4285" stroke="#161616" stroke-width="0.75"/><circle cx="411.3" cy="362.0" r="1.25" fill="#345e8c" stroke="#161616" stroke-width="0.75"/><circle cx="493.2" cy="364.5" r="1.25" fill="#472474" stroke="#161616" stroke-width="0.75"/><circle cx="399.6" cy="364.6" r="1.25" fill="#2a778e" stroke="#161616" stroke-width="0.75"/><circle cx="373.3" cy="366.1" r="1.25" fill="#1f9c89" stroke="#161616" stroke-width="0.75"/><circle cx="511.3" cy="366.3" r="1.25" fill="#2f6b8e" stroke="#161616" stroke-width="0.75"/><circle cx="443.2" cy="357.2" r="1.25" fill="#451264" stroke="#161616" stroke-width="0.75"/><circle cx="500.9" cy="365.3" r="1.25" fill="#472474" stroke="#161616" stroke-width="0.75"/><circle cx="449.2" cy="366.5" r="1.25" fill="#472474" stroke="#161616" stroke-width="0.75"/><circle cx="385.4" cy="357.4" r="1.25" fill="#472474" stroke="#161616" stroke-width="0.75"/><circle cx="362.8" cy="356.8" r="1.25" fill="#fde725" stroke="#161616" stroke-width="0.75"/><circle cx="441.7" cy="360.8" r="1.25" fill="#3f4285" stroke="#161616" stroke-width="0.75"/><circle cx="509.1" cy="364.6" r="1.25" fill="#2f6b8e" stroke="#161616" stroke-width="0.75"/><circle cx="370.3" cy="361.0" r="1.25" fill="#fde725" stroke="#161616" stroke-width="0.75"/><circle cx="341.4" cy="362.9" r="1.25" fill="#fde725" stroke="#161616" stroke-width="0.75"/><circle cx="345.2" cy="363.9" r="1.25" fill="#31b37b" stroke="#161616" stroke-width="0.75"/><circle cx="394.7" cy="365.4" r="1.25" fill="#3a508a" stroke="#161616" stroke-width="0.75"/><circle cx="380.5" cy="358.1" r="1.25" fill="#fde725" stroke="#161616" stroke-width="0.75"/><circle cx="502.7" cy="366.6" r="1.25" fill="#3f4285" stroke="#161616" stroke-width="0.75"/><circle cx="425.7" cy="365.1" r="1.25" fill="#2f6b8e" stroke="#161616" stroke-width="0.75"/><circle cx="501.6" cy="361.8" r="1.25" fill="#472474" stroke="#161616" stroke-width="0.75"/><circle cx="460.2" cy="356.5" r="1.25" fill="#472474" stroke="#161616" stroke-width="0.75"/><circle cx="494.0" cy="366.0" r="1.25" fill="#440154" stroke="#161616" stroke-width="0.75"/><circle cx="373.1" cy="361.1" r="1.25" fill="#31b37b" stroke="#161616" stroke-width="0.75"/><circle cx="353.6" cy="362.1" r="1.25" fill="#25838d" stroke="#161616" stroke-width="0.75"/><circle cx="358.8" cy="357.5" r="1.25" fill="#45bd6f" stroke="#161616" stroke-width="0.75"/><circle cx="416.1" cy="357.8" r="1.25" fill="#25838d" stroke="#161616" stroke-width="0.75"/><circle cx="485.9" cy="359.3" r="1.25" fill="#3f4285" stroke="#161616" stroke-width="0.75"/><circle cx="436.8" cy="362.1" r="1.25" fill="#3a508a" stroke="#161616" stroke-width="0.75"/><circle cx="417.7" cy="358.0" r="1.25" fill="#22908b" stroke="#161616" stroke-width="0.75"/><circle cx="376.7" cy="358.6" r="1.25" fill="#fde725" stroke="#161616" stroke-width="0.75"/><circle cx="490.7" cy="358.8" r="1.25" fill="#440154" stroke="#161616" stroke-width="0.75"/><circle cx="428.7" cy="360.1" r="1.25" fill="#2f6b8e" stroke="#161616" stroke-width="0.75"/><circle cx="345.1" cy="357.8" r="1.25" fill="#fde725" stroke="#161616" stroke-width="0.75"/><circle cx="496.4" cy="362.7" r="1.25" fill="#451264" stroke="#161616" stroke-width="0.75"/><circle cx="366.9" cy="364.1" r="1.25" fill="#fde725" stroke="#161616" stroke-width="0.75"/><circle cx="374.0" cy="356.5" r="1.25" fill="#27a782" stroke="#161616" stroke-width="0.75"/><circle cx="421.7" cy="360.1" r="1.25" fill="#2f6b8e" stroke="#161616" stroke-width="0.75"/><circle cx="446.3" cy="361.5" r="1.25" fill="#440154" stroke="#161616" stroke-width="0.75"/><circle cx="510.2" cy="363.9" r="1.25" fill="#472474" stroke="#161616" stroke-width="0.75"/><circle cx="360.3" cy="362.7" r="1.25" fill="#27a782" stroke="#161616" stroke-width="0.75"/><circle cx="442.5" cy="361.2" r="1.25" fill="#44337d" stroke="#161616" stroke-width="0.75"/><circle cx="425.4" cy="356.8" r="1.25" fill="#2f6b8e" stroke="#161616" stroke-width="0.75"/><circle cx="365.0" cy="365.8" r="1.25" fill="#fde725" stroke="#161616" stroke-width="0.75"/><circle cx="497.4" cy="361.5" r="1.25" fill="#44337d" stroke="#161616" stroke-width="0.75"/><circle cx="486.9" cy="365.0" r="1.25" fill="#451264" stroke="#161616" stroke-width="0.75"/><circle cx="393.7" cy="358.6" r="1.25" fill="#22908b" stroke="#161616" stroke-width="0.75"/><circle cx="475.1" cy="361.5" r="1.25" fill="#451264" stroke="#161616" stroke-width="0.75"/><circle cx="388.7" cy="361.0" r="1.25" fill="#345e8c" stroke="#161616" stroke-width="0.75"/><circle cx="473.8" cy="365.8" r="1.25" fill="#472474" stroke="#161616" stroke-width="0.75"/><circle cx="391.1" cy="362.3" r="1.25" fill="#3f4285" stroke="#161616" stroke-width="0.75"/><circle cx="437.0" cy="362.1" r="1.25" fill="#472474" stroke="#161616" stroke-width="0.75"/><circle cx="420.0" cy="357.3" r="1.25" fill="#25838d" stroke="#161616" stroke-width="0.75"/><circle cx="423.3" cy="358.7" r="1.25" fill="#440154" stroke="#161616" stroke-width="0.75"/><circle cx="491.3" cy="362.4" r="1.25" fill="#44337d" stroke="#161616" stroke-width="0.75"/><circle cx="480.8" cy="366.4" r="1.25" fill="#440154" stroke="#161616" stroke-width="0.75"/><circle cx="439.7" cy="360.8" r="1.25" fill="#451264" stroke="#161616" stroke-width="0.75"/><circle cx="459.7" cy="364.1" r="1.25" fill="#451264" stroke="#161616" stroke-width="0.75"/><circle cx="357.8" cy="357.3" r="1.25" fill="#fde725" stroke="#161616" stroke-width="0.75"/><circle cx="355.7" cy="357.6" r="1.25" fill="#1f9c89" stroke="#161616" stroke-width="0.75"/><circle cx="447.0" cy="365.6" r="1.25" fill="#3f4285" stroke="#161616" stroke-width="0.75"/><circle cx="459.8" cy="365.1" r="1.25" fill="#2f6b8e" stroke="#161616" stroke-width="0.75"/><circle cx="447.9" cy="366.4" r="1.25" fill="#3f4285" stroke="#161616" stroke-width="0.75"/><circle cx="451.1" cy="357.0" r="1.25" fill="#451264" stroke="#161616" stroke-width="0.75"/><circle cx="399.2" cy="357.5" r="1.25" fill="#3f4285" stroke="#161616" stroke-width="0.75"/><circle cx="443.6" cy="359.2" r="1.25" fill="#440154" stroke="#161616" stroke-width="0.75"/><circle cx="375.6" cy="360.1" r="1.25" fill="#fde725" stroke="#161616" stroke-width="0.75"/><circle cx="373.6" cy="358.7" r="1.25" fill="#25838d" stroke="#161616" stroke-width="0.75"/><circle cx="411.0" cy="357.5" r="1.25" fill="#25838d" stroke="#161616" stroke-width="0.75"/><circle cx="364.0" cy="356.7" r="1.25" fill="#9cd83a" stroke="#161616" stroke-width="0.75"/><circle cx="380.9" cy="363.0" r="1.25" fill="#fde725" stroke="#161616" stroke-width="0.75"/><circle cx="387.0" cy="362.9" r="1.25" fill="#345e8c" stroke="#161616" stroke-width="0.75"/><circle cx="383.8" cy="358.6" r="1.25" fill="#3a508a" stroke="#161616" stroke-width="0.75"/><circle cx="498.3" cy="362.8" r="1.25" fill="#3f4285" stroke="#161616" stroke-width="0.75"/><circle cx="442.0" cy="359.2" r="1.25" fill="#3a508a" stroke="#161616" stroke-width="0.75"/><circle cx="342.8" cy="364.2" r="1.25" fill="#25838d" stroke="#161616" stroke-width="0.75"/><circle cx="442.0" cy="359.1" r="1.25" fill="#440154" stroke="#161616" stroke-width="0.75"/><circle cx="354.2" cy="364.7" r="1.25" fill="#27a782" stroke="#161616" stroke-width="0.75"/><circle cx="499.0" cy="363.7" r="1.25" fill="#451264" stroke="#161616" stroke-width="0.75"/><circle cx="402.1" cy="366.3" r="1.25" fill="#3f4285" stroke="#161616" stroke-width="0.75"/><circle cx="445.9" cy="366.3" r="1.25" fill="#3f4285" stroke="#161616" stroke-width="0.75"/><circle cx="378.2" cy="363.0" r="1.25" fill="#1f9c89" stroke="#161616" stroke-width="0.75"/><circle cx="405.0" cy="362.5" r="1.25" fill="#3a508a" stroke="#161616" stroke-width="0.75"/><circle cx="516.1" cy="366.1" r="1.25" fill="#451264" stroke="#161616" stroke-width="0.75"/><circle cx="467.1" cy="358.9" r="1.25" fill="#440154" stroke="#161616" stroke-width="0.75"/><circle cx="380.2" cy="357.7" r="1.25" fill="#27a782" stroke="#161616" stroke-width="0.75"/><circle cx="490.1" cy="362.2" r="1.25" fill="#3f4285" stroke="#161616" stroke-width="0.75"/><circle cx="498.1" cy="365.8" r="1.25" fill="#440154" stroke="#161616" stroke-width="0.75"/><circle cx="459.4" cy="362.4" r="1.25" fill="#3f4285" stroke="#161616" stroke-width="0.75"/><circle cx="444.5" cy="359.6" r="1.25" fill="#3f4285" stroke="#161616" stroke-width="0.75"/><circle cx="416.0" cy="365.8" r="1.25" fill="#345e8c" stroke="#161616" stroke-width="0.75"/><circle cx="339.8" cy="360.7" r="1.25" fill="#fde725" stroke="#161616" stroke-width="0.75"/><circle cx="421.8" cy="366.5" r="1.25" fill="#3f4285" stroke="#161616" stroke-width="0.75"/><circle cx="351.5" cy="358.9" r="1.25" fill="#45bd6f" stroke="#161616" stroke-width="0.75"/><circle cx="486.4" cy="356.6" r="1.25" fill="#3a508a" stroke="#161616" stroke-width="0.75"/><circle cx="350.5" cy="362.0" r="1.25" fill="#27a782" stroke="#161616" stroke-width="0.75"/><circle cx="442.5" cy="363.7" r="1.25" fill="#2f6b8e" stroke="#161616" stroke-width="0.75"/><circle cx="449.7" cy="361.5" r="1.25" fill="#3f4285" stroke="#161616" stroke-width="0.75"/><circle cx="361.6" cy="361.8" r="1.25" fill="#fde725" stroke="#161616" stroke-width="0.75"/><circle cx="461.3" cy="358.8" r="1.25" fill="#3a508a" stroke="#161616" stroke-width="0.75"/><circle cx="354.3" cy="366.3" r="1.25" fill="#45bd6f" stroke="#161616" stroke-width="0.75"/><circle cx="448.2" cy="362.3" r="1.25" fill="#2f6b8e" stroke="#161616" stroke-width="0.75"/><circle cx="374.0" cy="359.7" r="1.25" fill="#fde725" stroke="#161616" stroke-width="0.75"/><circle cx="425.7" cy="365.9" r="1.25" fill="#3f4285" stroke="#161616" stroke-width="0.75"/><circle cx="369.7" cy="366.5" r="1.25" fill="#fde725" stroke="#161616" stroke-width="0.75"/><circle cx="426.2" cy="367.0" r="1.25" fill="#3f4285" stroke="#161616" stroke-width="0.75"/><circle cx="364.5" cy="361.1" r="1.25" fill="#1f9c89" stroke="#161616" stroke-width="0.75"/><circle cx="339.2" cy="362.7" r="1.25" fill="#31b37b" stroke="#161616" stroke-width="0.75"/><circle cx="478.5" cy="361.1" r="1.25" fill="#3a508a" stroke="#161616" stroke-width="0.75"/><circle cx="424.5" cy="365.3" r="1.25" fill="#3a508a" stroke="#161616" stroke-width="0.75"/><circle cx="435.8" cy="363.5" r="1.25" fill="#3f4285" stroke="#161616" stroke-width="0.75"/><circle cx="384.9" cy="365.5" r="1.25" fill="#472474" stroke="#161616" stroke-width="0.75"/><circle cx="413.9" cy="366.7" r="1.25" fill="#22908b" stroke="#161616" stroke-width="0.75"/><circle cx="471.5" cy="360.6" r="1.25" fill="#3f4285" stroke="#161616" stroke-width="0.75"/><circle cx="401.2" cy="358.2" r="1.25" fill="#3f4285" stroke="#161616" stroke-width="0.75"/><circle cx="368.3" cy="364.0" r="1.25" fill="#27a782" stroke="#161616" stroke-width="0.75"/><circle cx="439.1" cy="358.8" r="1.25" fill="#472474" stroke="#161616" stroke-width="0.75"/><circle cx="352.2" cy="365.5" r="1.25" fill="#25838d" stroke="#161616" stroke-width="0.75"/><circle cx="435.9" cy="358.6" r="1.25" fill="#44337d" stroke="#161616" stroke-width="0.75"/><circle cx="350.1" cy="364.7" r="1.25" fill="#27a782" stroke="#161616" stroke-width="0.75"/><circle cx="491.7" cy="361.8" r="1.25" fill="#472474" stroke="#161616" stroke-width="0.75"/><circle cx="494.3" cy="360.3" r="1.25" fill="#3f4285" stroke="#161616" stroke-width="0.75"/><circle cx="514.9" cy="366.7" r="1.25" fill="#440154" stroke="#161616" stroke-width="0.75"/><circle cx="480.2" cy="362.8" r="1.25" fill="#472474" stroke="#161616" stroke-width="0.75"/><circle cx="370.3" cy="366.9" r="1.25" fill="#45bd6f" stroke="#161616" stroke-width="0.75"/><circle cx="398.1" cy="361.9" r="1.25" fill="#472474" stroke="#161616" stroke-width="0.75"/><circle cx="503.3" cy="363.2" r="1.25" fill="#472474" stroke="#161616" stroke-width="0.75"/><circle cx="388.4" cy="358.2" r="1.25" fill="#3a508a" stroke="#161616" stroke-width="0.75"/><circle cx="374.0" cy="358.9" r="1.25" fill="#9cd83a" stroke="#161616" stroke-width="0.75"/><circle cx="445.5" cy="359.3" r="1.25" fill="#3f4285" stroke="#161616" stroke-width="0.75"/><circle cx="452.1" cy="363.2" r="1.25" fill="#2f6b8e" stroke="#161616" stroke-width="0.75"/><circle cx="368.2" cy="363.0" r="1.25" fill="#fde725" stroke="#161616" stroke-width="0.75"/><circle cx="464.7" cy="360.3" r="1.25" fill="#44337d" stroke="#161616" stroke-width="0.75"/><circle cx="465.7" cy="361.1" r="1.25" fill="#3a508a" stroke="#161616" stroke-width="0.75"/><circle cx="516.7" cy="366.5" r="1.25" fill="#3f4285" stroke="#161616" stroke-width="0.75"/><circle cx="384.1" cy="365.6" r="1.25" fill="#22908b" stroke="#161616" stroke-width="0.75"/><circle cx="407.6" cy="360.9" r="1.25" fill="#3f4285" stroke="#161616" stroke-width="0.75"/><circle cx="431.2" cy="362.3" r="1.25" fill="#3f4285" stroke="#161616" stroke-width="0.75"/><circle cx="378.6" cy="358.1" r="1.25" fill="#31b37b" stroke="#161616" stroke-width="0.75"/><circle cx="352.8" cy="366.9" r="1.25" fill="#25838d" stroke="#161616" stroke-width="0.75"/><circle cx="431.8" cy="365.7" r="1.25" fill="#472474" stroke="#161616" stroke-width="0.75"/><circle cx="512.4" cy="366.5" r="1.25" fill="#44337d" stroke="#161616" stroke-width="0.75"/><circle cx="355.2" cy="361.3" r="1.25" fill="#27a782" stroke="#161616" stroke-width="0.75"/><circle cx="395.5" cy="363.7" r="1.25" fill="#25838d" stroke="#161616" stroke-width="0.75"/><circle cx="393.4" cy="361.7" r="1.25" fill="#3a508a" stroke="#161616" stroke-width="0.75"/><circle cx="443.5" cy="366.1" r="1.25" fill="#3a508a" stroke="#161616" stroke-width="0.75"/><circle cx="445.0" cy="361.5" r="1.25" fill="#472474" stroke="#161616" stroke-width="0.75"/><circle cx="423.3" cy="357.7" r="1.25" fill="#44337d" stroke="#161616" stroke-width="0.75"/><circle cx="423.9" cy="358.6" r="1.25" fill="#44337d" stroke="#161616" stroke-width="0.75"/><circle cx="473.0" cy="361.6" r="1.25" fill="#451264" stroke="#161616" stroke-width="0.75"/><circle cx="442.9" cy="357.5" r="1.25" fill="#451264" stroke="#161616" stroke-width="0.75"/><circle cx="346.0" cy="360.0" r="1.25" fill="#fde725" stroke="#161616" stroke-width="0.75"/><circle cx="461.2" cy="358.9" r="1.25" fill="#3a508a" stroke="#161616" stroke-width="0.75"/><circle cx="505.5" cy="363.7" r="1.25" fill="#440154" stroke="#161616" stroke-width="0.75"/><circle cx="396.7" cy="367.0" r="1.25" fill="#22908b" stroke="#161616" stroke-width="0.75"/><circle cx="371.7" cy="363.1" r="1.25" fill="#45bd6f" stroke="#161616" stroke-width="0.75"/><circle cx="351.5" cy="363.3" r="1.25" fill="#1f9c89" stroke="#161616" stroke-width="0.75"/><circle cx="491.7" cy="359.6" r="1.25" fill="#440154" stroke="#161616" stroke-width="0.75"/><circle cx="434.7" cy="358.6" r="1.25" fill="#472474" stroke="#161616" stroke-width="0.75"/><circle cx="480.7" cy="362.7" r="1.25" fill="#472474" stroke="#161616" stroke-width="0.75"/><circle cx="362.8" cy="363.6" r="1.25" fill="#fde725" stroke="#161616" stroke-width="0.75"/><circle cx="449.2" cy="361.2" r="1.25" fill="#3f4285" stroke="#161616" stroke-width="0.75"/><circle cx="372.1" cy="364.4" r="1.25" fill="#fde725" stroke="#161616" stroke-width="0.75"/><circle cx="479.0" cy="359.1" r="1.25" fill="#2f6b8e" stroke="#161616" stroke-width="0.75"/><circle cx="484.0" cy="365.5" r="1.25" fill="#440154" stroke="#161616" stroke-width="0.75"/><circle cx="428.4" cy="358.4" r="1.25" fill="#3f4285" stroke="#161616" stroke-width="0.75"/><circle cx="382.0" cy="356.6" r="1.25" fill="#2a778e" stroke="#161616" stroke-width="0.75"/><circle cx="414.9" cy="365.1" r="1.25" fill="#22908b" stroke="#161616" stroke-width="0.75"/><circle cx="383.1" cy="356.6" r="1.25" fill="#25838d" stroke="#161616" stroke-width="0.75"/><circle cx="384.0" cy="360.8" r="1.25" fill="#2a778e" stroke="#161616" stroke-width="0.75"/><circle cx="461.2" cy="359.8" r="1.25" fill="#3f4285" stroke="#161616" stroke-width="0.75"/><circle cx="488.4" cy="365.4" r="1.25" fill="#451264" stroke="#161616" stroke-width="0.75"/><circle cx="476.6" cy="356.6" r="1.25" fill="#44337d" stroke="#161616" stroke-width="0.75"/><circle cx="390.6" cy="365.2" r="1.25" fill="#22908b" stroke="#161616" stroke-width="0.75"/><circle cx="469.3" cy="359.2" r="1.25" fill="#44337d" stroke="#161616" stroke-width="0.75"/><circle cx="339.2" cy="359.9" r="1.25" fill="#fde725" stroke="#161616" stroke-width="0.75"/><circle cx="414.4" cy="363.7" r="1.25" fill="#25838d" stroke="#161616" stroke-width="0.75"/><circle cx="430.7" cy="360.4" r="1.25" fill="#3a508a" stroke="#161616" stroke-width="0.75"/><circle cx="355.1" cy="361.7" r="1.25" fill="#45bd6f" stroke="#161616" stroke-width="0.75"/><circle cx="473.5" cy="361.0" r="1.25" fill="#3f4285" stroke="#161616" stroke-width="0.75"/><circle cx="423.3" cy="364.3" r="1.25" fill="#451264" stroke="#161616" stroke-width="0.75"/><circle cx="440.3" cy="366.0" r="1.25" fill="#44337d" stroke="#161616" stroke-width="0.75"/><circle cx="376.3" cy="357.8" r="1.25" fill="#25838d" stroke="#161616" stroke-width="0.75"/><circle cx="360.9" cy="362.4" r="1.25" fill="#45bd6f" stroke="#161616" stroke-width="0.75"/><circle cx="403.0" cy="356.6" r="1.25" fill="#22908b" stroke="#161616" stroke-width="0.75"/><circle cx="456.6" cy="357.0" r="1.25" fill="#2f6b8e" stroke="#161616" stroke-width="0.75"/><circle cx="421.3" cy="361.2" r="1.25" fill="#440154" stroke="#161616" stroke-width="0.75"/><circle cx="477.7" cy="364.6" r="1.25" fill="#451264" stroke="#161616" stroke-width="0.75"/><circle cx="420.8" cy="356.7" r="1.25" fill="#3f4285" stroke="#161616" stroke-width="0.75"/><circle cx="431.6" cy="358.4" r="1.25" fill="#440154" stroke="#161616" stroke-width="0.75"/><circle cx="476.1" cy="359.5" r="1.25" fill="#2f6b8e" stroke="#161616" stroke-width="0.75"/><circle cx="444.5" cy="361.3" r="1.25" fill="#3a508a" stroke="#161616" stroke-width="0.75"/><circle cx="451.7" cy="362.6" r="1.25" fill="#44337d" stroke="#161616" stroke-width="0.75"/><circle cx="410.8" cy="365.3" r="1.25" fill="#2a778e" stroke="#161616" stroke-width="0.75"/><circle cx="496.2" cy="366.9" r="1.25" fill="#2f6b8e" stroke="#161616" stroke-width="0.75"/><circle cx="493.2" cy="366.2" r="1.25" fill="#3f4285" stroke="#161616" stroke-width="0.75"/><circle cx="432.1" cy="362.6" r="1.25" fill="#440154" stroke="#161616" stroke-width="0.75"/><circle cx="456.3" cy="359.1" r="1.25" fill="#3f4285" stroke="#161616" stroke-width="0.75"/><circle cx="363.5" cy="361.1" r="1.25" fill="#9cd83a" stroke="#161616" stroke-width="0.75"/><circle cx="414.1" cy="359.0" r="1.25" fill="#345e8c" stroke="#161616" stroke-width="0.75"/><circle cx="500.2" cy="361.1" r="1.25" fill="#451264" stroke="#161616" stroke-width="0.75"/><circle cx="394.0" cy="359.8" r="1.25" fill="#22908b" stroke="#161616" stroke-width="0.75"/><circle cx="348.1" cy="362.5" r="1.25" fill="#25838d" stroke="#161616" stroke-width="0.75"/><circle cx="475.7" cy="365.0" r="1.25" fill="#3a508a" stroke="#161616" stroke-width="0.75"/><circle cx="442.3" cy="360.8" r="1.25" fill="#3a508a" stroke="#161616" stroke-width="0.75"/><circle cx="417.3" cy="363.3" r="1.25" fill="#2a778e" stroke="#161616" stroke-width="0.75"/><circle cx="373.9" cy="359.3" r="1.25" fill="#31b37b" stroke="#161616" stroke-width="0.75"/><circle cx="437.4" cy="362.0" r="1.25" fill="#472474" stroke="#161616" stroke-width="0.75"/><circle cx="387.2" cy="365.0" r="1.25" fill="#22908b" stroke="#161616" stroke-width="0.75"/><circle cx="434.0" cy="364.8" r="1.25" fill="#440154" stroke="#161616" stroke-width="0.75"/><circle cx="500.3" cy="366.8" r="1.25" fill="#2f6b8e" stroke="#161616" stroke-width="0.75"/><circle cx="460.0" cy="364.8" r="1.25" fill="#3a508a" stroke="#161616" stroke-width="0.75"/><circle cx="496.3" cy="360.5" r="1.25" fill="#472474" stroke="#161616" stroke-width="0.75"/><circle cx="399.2" cy="363.2" r="1.25" fill="#3f4285" stroke="#161616" stroke-width="0.75"/><circle cx="500.1" cy="366.4" r="1.25" fill="#2f6b8e" stroke="#161616" stroke-width="0.75"/><circle cx="405.0" cy="361.7" r="1.25" fill="#345e8c" stroke="#161616" stroke-width="0.75"/><circle cx="456.8" cy="366.3" r="1.25" fill="#44337d" stroke="#161616" stroke-width="0.75"/><circle cx="382.7" cy="357.1" r="1.25" fill="#25838d" stroke="#161616" stroke-width="0.75"/><circle cx="423.3" cy="360.5" r="1.25" fill="#440154" stroke="#161616" stroke-width="0.75"/><circle cx="439.4" cy="365.7" r="1.25" fill="#451264" stroke="#161616" stroke-width="0.75"/><circle cx="430.9" cy="364.4" r="1.25" fill="#440154" stroke="#161616" stroke-width="0.75"/><circle cx="445.1" cy="366.5" r="1.25" fill="#3a508a" stroke="#161616" stroke-width="0.75"/><circle cx="426.0" cy="366.9" r="1.25" fill="#472474" stroke="#161616" stroke-width="0.75"/><circle cx="421.1" cy="358.7" r="1.25" fill="#2f6b8e" stroke="#161616" stroke-width="0.75"/><circle cx="430.3" cy="357.9" r="1.25" fill="#3f4285" stroke="#161616" stroke-width="0.75"/><circle cx="436.3" cy="359.2" r="1.25" fill="#44337d" stroke="#161616" stroke-width="0.75"/><circle cx="380.1" cy="357.0" r="1.25" fill="#fde725" stroke="#161616" stroke-width="0.75"/><circle cx="441.7" cy="358.1" r="1.25" fill="#472474" stroke="#161616" stroke-width="0.75"/><circle cx="370.7" cy="360.6" r="1.25" fill="#fde725" stroke="#161616" stroke-width="0.75"/><circle cx="418.7" cy="363.9" r="1.25" fill="#3f4285" stroke="#161616" stroke-width="0.75"/><circle cx="446.7" cy="363.4" r="1.25" fill="#472474" stroke="#161616" stroke-width="0.75"/><circle cx="459.9" cy="366.9" r="1.25" fill="#3a508a" stroke="#161616" stroke-width="0.75"/><circle cx="489.8" cy="359.1" r="1.25" fill="#44337d" stroke="#161616" stroke-width="0.75"/><circle cx="460.3" cy="358.4" r="1.25" fill="#3a508a" stroke="#161616" stroke-width="0.75"/><circle cx="355.9" cy="359.7" r="1.25" fill="#9cd83a" stroke="#161616" stroke-width="0.75"/><circle cx="404.9" cy="360.0" r="1.25" fill="#2a778e" stroke="#161616" stroke-width="0.75"/><circle cx="380.2" cy="358.2" r="1.25" fill="#1f9c89" stroke="#161616" stroke-width="0.75"/><circle cx="388.8" cy="364.7" r="1.25" fill="#345e8c" stroke="#161616" stroke-width="0.75"/><circle cx="465.6" cy="361.0" r="1.25" fill="#451264" stroke="#161616" stroke-width="0.75"/><circle cx="496.1" cy="364.9" r="1.25" fill="#2f6b8e" stroke="#161616" stroke-width="0.75"/><circle cx="385.1" cy="360.5" r="1.25" fill="#22908b" stroke="#161616" stroke-width="0.75"/><circle cx="411.2" cy="362.7" r="1.25" fill="#44337d" stroke="#161616" stroke-width="0.75"/><circle cx="341.1" cy="362.4" r="1.25" fill="#fde725" stroke="#161616" stroke-width="0.75"/><circle cx="449.2" cy="356.6" r="1.25" fill="#2f6b8e" stroke="#161616" stroke-width="0.75"/><circle cx="424.9" cy="364.8" r="1.25" fill="#440154" stroke="#161616" stroke-width="0.75"/><circle cx="424.3" cy="365.3" r="1.25" fill="#3a508a" stroke="#161616" stroke-width="0.75"/><circle cx="350.7" cy="366.3" r="1.25" fill="#9cd83a" stroke="#161616" stroke-width="0.75"/><circle cx="378.8" cy="363.0" r="1.25" fill="#fde725" stroke="#161616" stroke-width="0.75"/><circle cx="441.0" cy="364.3" r="1.25" fill="#451264" stroke="#161616" stroke-width="0.75"/><circle cx="385.5" cy="359.8" r="1.25" fill="#2a778e" stroke="#161616" stroke-width="0.75"/><circle cx="399.4" cy="359.0" r="1.25" fill="#44337d" stroke="#161616" stroke-width="0.75"/><circle cx="486.0" cy="363.1" r="1.25" fill="#2f6b8e" stroke="#161616" stroke-width="0.75"/><circle cx="426.1" cy="363.8" r="1.25" fill="#3a508a" stroke="#161616" stroke-width="0.75"/><circle cx="489.9" cy="363.0" r="1.25" fill="#3a508a" stroke="#161616" stroke-width="0.75"/><circle cx="368.3" cy="359.7" r="1.25" fill="#27a782" stroke="#161616" stroke-width="0.75"/><circle cx="412.3" cy="363.8" r="1.25" fill="#2a778e" stroke="#161616" stroke-width="0.75"/><circle cx="340.8" cy="362.0" r="1.25" fill="#27a782" stroke="#161616" stroke-width="0.75"/><circle cx="458.5" cy="366.2" r="1.25" fill="#44337d" stroke="#161616" stroke-width="0.75"/><circle cx="350.5" cy="358.0" r="1.25" fill="#fde725" stroke="#161616" stroke-width="0.75"/><circle cx="365.1" cy="361.1" r="1.25" fill="#fde725" stroke="#161616" stroke-width="0.75"/><circle cx="428.1" cy="362.0" r="1.25" fill="#472474" stroke="#161616" stroke-width="0.75"/><circle cx="387.3" cy="363.7" r="1.25" fill="#472474" stroke="#161616" stroke-width="0.75"/><circle cx="406.9" cy="365.2" r="1.25" fill="#44337d" stroke="#161616" stroke-width="0.75"/><circle cx="455.1" cy="362.0" r="1.25" fill="#2f6b8e" stroke="#161616" stroke-width="0.75"/><circle cx="364.1" cy="357.3" r="1.25" fill="#45bd6f" stroke="#161616" stroke-width="0.75"/><circle cx="518.0" cy="366.6" r="1.25" fill="#3a508a" stroke="#161616" stroke-width="0.75"/><circle cx="384.7" cy="358.1" r="1.25" fill="#44337d" stroke="#161616" stroke-width="0.75"/><circle cx="367.3" cy="363.2" r="1.25" fill="#fde725" stroke="#161616" stroke-width="0.75"/><circle cx="517.8" cy="366.5" r="1.25" fill="#440154" stroke="#161616" stroke-width="0.75"/><circle cx="389.5" cy="357.7" r="1.25" fill="#25838d" stroke="#161616" stroke-width="0.75"/><circle cx="423.2" cy="359.5" r="1.25" fill="#2f6b8e" stroke="#161616" stroke-width="0.75"/><circle cx="393.4" cy="364.4" r="1.25" fill="#2a778e" stroke="#161616" stroke-width="0.75"/><circle cx="407.4" cy="356.5" r="1.25" fill="#472474" stroke="#161616" stroke-width="0.75"/><circle cx="463.7" cy="360.6" r="1.25" fill="#2f6b8e" stroke="#161616" stroke-width="0.75"/><circle cx="495.9" cy="363.7" r="1.25" fill="#440154" stroke="#161616" stroke-width="0.75"/><circle cx="434.2" cy="363.7" r="1.25" fill="#440154" stroke="#161616" stroke-width="0.75"/><circle cx="441.2" cy="364.9" r="1.25" fill="#3a508a" stroke="#161616" stroke-width="0.75"/><circle cx="410.4" cy="363.4" r="1.25" fill="#2a778e" stroke="#161616" stroke-width="0.75"/><circle cx="417.8" cy="363.6" r="1.25" fill="#22908b" stroke="#161616" stroke-width="0.75"/><circle cx="425.1" cy="358.9" r="1.25" fill="#2f6b8e" stroke="#161616" stroke-width="0.75"/><circle cx="346.0" cy="359.0" r="1.25" fill="#27a782" stroke="#161616" stroke-width="0.75"/><circle cx="513.5" cy="366.9" r="1.25" fill="#2f6b8e" stroke="#161616" stroke-width="0.75"/><circle cx="447.0" cy="364.2" r="1.25" fill="#2f6b8e" stroke="#161616" stroke-width="0.75"/><circle cx="429.1" cy="364.3" r="1.25" fill="#44337d" stroke="#161616" stroke-width="0.75"/><circle cx="408.0" cy="364.4" r="1.25" fill="#472474" stroke="#161616" stroke-width="0.75"/><circle cx="461.5" cy="358.3" r="1.25" fill="#3f4285" stroke="#161616" stroke-width="0.75"/><circle cx="463.5" cy="358.1" r="1.25" fill="#440154" stroke="#161616" stroke-width="0.75"/><circle cx="428.3" cy="363.8" r="1.25" fill="#440154" stroke="#161616" stroke-width="0.75"/><circle cx="496.3" cy="360.3" r="1.25" fill="#2f6b8e" stroke="#161616" stroke-width="0.75"/><circle cx="448.0" cy="361.6" r="1.25" fill="#3f4285" stroke="#161616" stroke-width="0.75"/><circle cx="344.9" cy="365.9" r="1.25" fill="#9cd83a" stroke="#161616" stroke-width="0.75"/><circle cx="371.9" cy="364.8" r="1.25" fill="#fde725" stroke="#161616" stroke-width="0.75"/><circle cx="510.1" cy="366.5" r="1.25" fill="#3a508a" stroke="#161616" stroke-width="0.75"/><circle cx="487.2" cy="363.3" r="1.25" fill="#451264" stroke="#161616" stroke-width="0.75"/><circle cx="422.2" cy="357.6" r="1.25" fill="#2f6b8e" stroke="#161616" stroke-width="0.75"/><circle cx="428.5" cy="361.3" r="1.25" fill="#451264" stroke="#161616" stroke-width="0.75"/><circle cx="419.3" cy="361.7" r="1.25" fill="#3f4285" stroke="#161616" stroke-width="0.75"/><circle cx="393.7" cy="366.0" r="1.25" fill="#472474" stroke="#161616" stroke-width="0.75"/><circle cx="457.3" cy="359.1" r="1.25" fill="#3a508a" stroke="#161616" stroke-width="0.75"/><circle cx="413.0" cy="361.3" r="1.25" fill="#44337d" stroke="#161616" stroke-width="0.75"/><circle cx="454.1" cy="361.4" r="1.25" fill="#3a508a" stroke="#161616" stroke-width="0.75"/><circle cx="463.3" cy="365.0" r="1.25" fill="#440154" stroke="#161616" stroke-width="0.75"/><circle cx="387.6" cy="357.4" r="1.25" fill="#472474" stroke="#161616" stroke-width="0.75"/><circle cx="357.3" cy="364.3" r="1.25" fill="#27a782" stroke="#161616" stroke-width="0.75"/><circle cx="342.2" cy="363.7" r="1.25" fill="#27a782" stroke="#161616" stroke-width="0.75"/><rect x="484.8" y="86.7" width="16.4" height="305.3" fill="url(#vir)"/><line x1="53.5" y1="424" x2="53.5" y2="399.3" stroke="#00e000" stroke-width="1.8"/><path d="M51.0,401.5 L56.0,401.5" stroke="#006600" stroke-width="1.2"/><line x1="53.5" y1="424" x2="78.89999999999998" y2="424" stroke="#ff0000" stroke-width="1.8"/><path d="M75.5,421.5 L75.5,426.5" stroke="#880000" stroke-width="1.2"/><rect x="51.89999999999998" y="422" width="3.9" height="3.9" fill="#000060"/><text x="58" y="397.6" font-family="Liberation Sans" font-style="italic" font-weight="bold" font-size="9" fill="#00e000">Y</text><text x="77" y="419" font-family="Liberation Sans" font-style="italic" font-weight="bold" font-size="9" fill="#ff0000">X</text><text x="57" y="419" font-family="Liberation Sans" font-style="italic" font-weight="bold" font-size="9" fill="#0000ff">Z</text></svg>
<div class="a t" style="left:940px;top:82.78px;font-size:24.6px;line-height:24.6px;color:#000;font-weight:normal;font-family:'Liberation Sans', sans-serif;letter-spacing:-0.7px">4.50 s</div>
<div class="a t" style="left:955.4px;top:157.19px;font-size:11px;line-height:11px;color:#000;font-weight:bold;font-family:'Liberation Sans', sans-serif;letter-spacing:-0.75px">Velocity</div>
<div class="a t" style="left:972px;top:167.23px;font-size:8px;line-height:8px;color:#000;font-weight:bold;font-family:'Liberation Sans', sans-serif;letter-spacing:-0.55px">1.00</div>
<div class="a t" style="left:972px;top:201.20px;font-size:8px;line-height:8px;color:#000;font-weight:bold;font-family:'Liberation Sans', sans-serif;letter-spacing:-0.55px">0.889</div>
<div class="a t" style="left:972px;top:235.17px;font-size:8px;line-height:8px;color:#000;font-weight:bold;font-family:'Liberation Sans', sans-serif;letter-spacing:-0.55px">0.778</div>
<div class="a t" style="left:972px;top:269.14px;font-size:8px;line-height:8px;color:#000;font-weight:bold;font-family:'Liberation Sans', sans-serif;letter-spacing:-0.55px">0.667</div>
<div class="a t" style="left:972px;top:303.11px;font-size:8px;line-height:8px;color:#000;font-weight:bold;font-family:'Liberation Sans', sans-serif;letter-spacing:-0.55px">0.556</div>
<div class="a t" style="left:972px;top:337.08px;font-size:8px;line-height:8px;color:#000;font-weight:bold;font-family:'Liberation Sans', sans-serif;letter-spacing:-0.55px">0.444</div>
<div class="a t" style="left:972px;top:371.05px;font-size:8px;line-height:8px;color:#000;font-weight:bold;font-family:'Liberation Sans', sans-serif;letter-spacing:-0.55px">0.333</div>
<div class="a t" style="left:972px;top:405.02px;font-size:8px;line-height:8px;color:#000;font-weight:bold;font-family:'Liberation Sans', sans-serif;letter-spacing:-0.55px">0.222</div>
<div class="a t" style="left:972px;top:438.99px;font-size:8px;line-height:8px;color:#000;font-weight:bold;font-family:'Liberation Sans', sans-serif;letter-spacing:-0.55px">0.111</div>
<div class="a t" style="left:972px;top:472.96px;font-size:8px;line-height:8px;color:#000;font-weight:bold;font-family:'Liberation Sans', sans-serif;letter-spacing:-0.55px">0.00</div>
<div class="a" style="left:468px;top:557px;width:541px;height:6px;background:#dedede;border-top:1px solid #a29d97"></div>
<div class="a" style="left:732.5px;top:560px;width:1.3px;height:1.3px;background:#9a9a9a;border-radius:1px"></div>
<div class="a" style="left:735.5px;top:560px;width:1.3px;height:1.3px;background:#9a9a9a;border-radius:1px"></div>
<div class="a" style="left:738.5px;top:560px;width:1.3px;height:1.3px;background:#9a9a9a;border-radius:1px"></div>
<div class="a" style="left:741.5px;top:560px;width:1.3px;height:1.3px;background:#9a9a9a;border-radius:1px"></div>
<div class="a" style="left:744.5px;top:560px;width:1.3px;height:1.3px;background:#9a9a9a;border-radius:1px"></div>
<div class="a" style="left:747.5px;top:560px;width:1.3px;height:1.3px;background:#9a9a9a;border-radius:1px"></div>
<div class="a" style="left:467px;top:563px;width:542px;height:176px;background:#fff;border-left:1px solid #a29d97"></div>
<div class="a t" style="left:471.2px;top:564.97px;font-size:11px;line-height:11px;color:#2e2e2e;font-weight:normal;font-family:'Liberation Mono', monospace;letter-spacing:0.54px">&nbsp;DES.RES;</div>
<div class="a t" style="left:471.2px;top:578.97px;font-size:11px;line-height:11px;color:#2e2e2e;font-weight:normal;font-family:'Liberation Mono', monospace;letter-spacing:0.54px">&nbsp;&nbsp;WRITING&nbsp;VTP&nbsp;FILE&nbsp;:&nbsp;BACKGROUND_IC_0044.vtp&nbsp;.</div>
<div class="a t" style="left:471.2px;top:592.97px;font-size:11px;line-height:11px;color:#2e2e2e;font-weight:normal;font-family:'Liberation Mono', monospace;letter-spacing:0.54px">..&nbsp;DONE.</div>
<div class="a t" style="left:471.2px;top:606.97px;font-size:11px;line-height:11px;color:#2e2e2e;font-weight:normal;font-family:'Liberation Mono', monospace;letter-spacing:0.54px">&nbsp;t=&nbsp;&nbsp;&nbsp;&nbsp;4.500032&nbsp;Wrote&nbsp;SPx:&nbsp;1</div>
<div class="a t" style="left:471.2px;top:620.97px;font-size:11px;line-height:11px;color:#2e2e2e;font-weight:normal;font-family:'Liberation Mono', monospace;letter-spacing:0.54px">,2</div>
<div class="a t" style="left:471.2px;top:634.97px;font-size:11px;line-height:11px;color:#2e2e2e;font-weight:normal;font-family:'Liberation Mono', monospace;letter-spacing:0.54px">,3,4,5,6,7,8,9;</div>
<div class="a t" style="left:471.2px;top:648.97px;font-size:11px;line-height:11px;color:#2e2e2e;font-weight:normal;font-family:'Liberation Mono', monospace;letter-spacing:0.54px">&nbsp;.RES;</div>
<div class="a t" style="left:471.2px;top:662.97px;font-size:11px;line-height:11px;color:#2e2e2e;font-weight:normal;font-family:'Liberation Mono', monospace;letter-spacing:0.54px">&nbsp;DES.RES;</div>
<div class="a t" style="left:471.2px;top:676.97px;font-size:11px;line-height:11px;color:#2e2e2e;font-weight:normal;font-family:'Liberation Mono', monospace;letter-spacing:0.54px">&nbsp;&nbsp;WRITING&nbsp;VTP&nbsp;FILE&nbsp;:&nbsp;BACKGROUND_IC_0045.vtp&nbsp;.</div>
<div class="a t" style="left:471.2px;top:690.97px;font-size:11px;line-height:11px;color:#2e2e2e;font-weight:normal;font-family:'Liberation Mono', monospace;letter-spacing:0.54px">..&nbsp;DONE.</div>
<div class="a" style="left:996px;top:563px;width:13px;height:176px;background:#e3e1dd;border-left:1px solid #bdb9b4"></div>
<div class="a" style="left:997px;top:563px;width:12px;height:13.5px;background:#f8f6f3;border-bottom:1px solid #c8c4bf"></div>
<svg class="a" style="left:999px;top:567px;" width="8" height="5" viewBox="0 0 8 5"><path d="M0 5L4 0 8 5Z" fill="#555"/></svg>
<div class="a" style="left:997px;top:698px;width:12px;height:28px;background:#f6f4f1;border-top:1px solid #c8c4bf;border-bottom:1px solid #c8c4bf"></div>
<svg class="a" style="left:999px;top:730px;" width="8" height="5" viewBox="0 0 8 5"><path d="M0 0L8 0 4 5Z" fill="#555"/></svg>
<div class="a" style="left:1px;top:739px;width:1009px;height:30px;background:#bdbdbd"></div>
<div class="a" style="left:2px;top:741px;width:78px;height:24.5px;background:#b2b2b2;border:1px solid #8f8f8f;border-radius:3px"></div>
<div class="a t" style="left:12.1px;top:745.86px;font-size:16px;line-height:16px;color:#2b7bf5;font-weight:normal;font-family:'Liberation Sans', sans-serif;letter-spacing:-0.15px">Modeler</div>
<div class="a t" style="left:90.6px;top:745.86px;font-size:16px;line-height:16px;color:#7e7e7e;font-weight:normal;font-family:'Liberation Sans', sans-serif;letter-spacing:-0.05px">Nodeworks</div>
<div class="a" style="left:716px;top:742px;width:291px;height:22px;background:#fff;border-radius:3px"></div>
<div class="a" style="left:716px;top:742px;width:262px;height:22px;background:linear-gradient(#47a4ea,#2b86d3);border:1px solid #2068ad;border-radius:3px 0 0 3px"></div>
<div class="a t" style="left:787.5px;top:747.44px;font-size:12px;line-height:12px;color:#111;font-weight:normal;font-family:'Liberation Sans', sans-serif;letter-spacing:0.65px">MFiX running: elapsed time 0:02:37</div>
</body></html>
